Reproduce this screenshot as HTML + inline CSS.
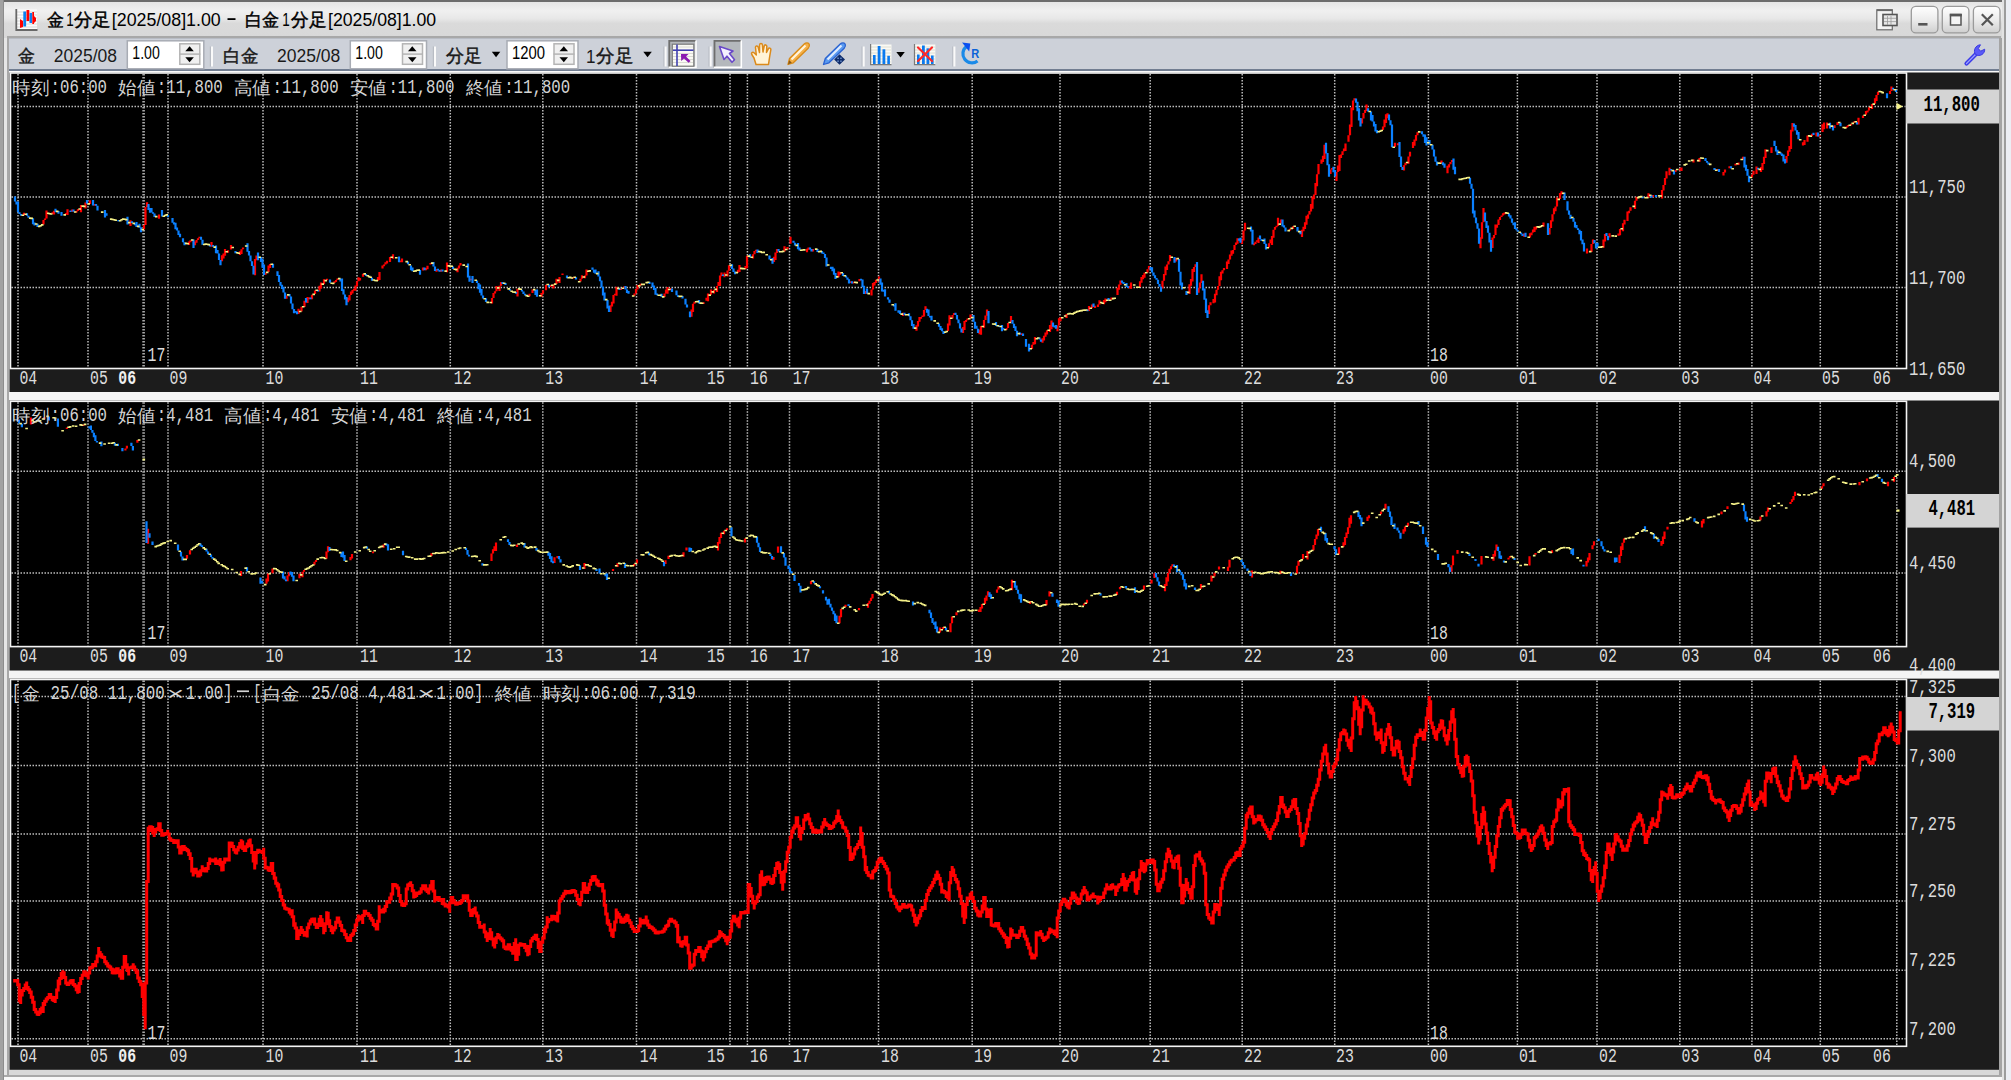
<!DOCTYPE html>
<html lang="ja"><head><meta charset="utf-8"><title>chart</title>
<style>
html,body{margin:0;padding:0;}
body{width:2011px;height:1080px;overflow:hidden;position:relative;background:#e6e6e6;font-family:"Liberation Sans",sans-serif;}
.abs{position:absolute;}
</style></head><body>
<div class="abs" style="left:0;top:0;width:2011px;height:38px;background:linear-gradient(#e2e2e2 0%,#f0f0f0 28%,#e8e8e8 48%,#dadada 62%,#d8d8d8 100%);"></div>
<div class="abs" style="left:0;top:0;width:2011px;height:1.5px;background:#6c6c6c;"></div>
<div class="abs" style="left:9px;top:38px;width:1991px;height:32px;background:#cdd1d9;border-top:1px solid #b8bcc4;box-sizing:border-box;"></div>
<div class="abs" style="left:9px;top:69px;width:1991px;height:1.6px;background:#717d91;"></div>
<div class="abs" style="left:9px;top:70.5px;width:1991px;height:3px;background:#fafafa;"></div>
<div class="abs" style="left:9px;top:392px;width:1991px;height:8.5px;background:#f4f4f4;border-bottom:1.5px solid #a4a4a4;box-sizing:border-box;"></div>
<div class="abs" style="left:9px;top:670.5px;width:1991px;height:8px;background:#f4f4f4;border-bottom:1.6px solid #a4a4a4;box-sizing:border-box;"></div>
<div class="abs" style="left:9px;top:1070px;width:1991px;height:5px;background:#d8d8d8;"></div>
<div class="abs" style="left:0;top:1075px;width:2011px;height:1.5px;background:#a8a8a8;"></div>
<div class="abs" style="left:0;top:1076.5px;width:2011px;height:4px;background:#f8f8f8;"></div>
<div class="abs" style="left:0;top:0;width:2.5px;height:1080px;background:#a2a2a2;"></div>
<div class="abs" style="left:2.5px;top:0;width:1.5px;height:1080px;background:#8c8c8c;"></div>
<div class="abs" style="left:7px;top:37px;width:1.6px;height:1038px;background:#a8a8a8;"></div>
<div class="abs" style="left:1999px;top:38px;width:2.5px;height:1037px;background:#a4a4a4;"></div>
<div class="abs" style="left:2001.5px;top:0;width:2.5px;height:1080px;background:#e2e2e2;"></div>
<div class="abs" style="left:2004px;top:0;width:2px;height:1080px;background:#9c9c9c;"></div>
<div class="abs" style="left:2006px;top:0;width:5px;height:1080px;background:#eceef4;"></div>
<div class="abs" style="left:7px;top:36.3px;width:1994px;height:1.7px;background:#a8a8a8;"></div>
<svg width="2011" height="1080" style="position:absolute;left:0;top:0">
<rect x="9.5" y="72.5" width="1989.5" height="319.5" fill="#1c1c1c"/>
<rect x="10.5" y="73.0" width="1896.0" height="295.5" fill="#000"/>
<path d="M11.5 106.5 H1905.5 M11.5 197 H1905.5 M11.5 287.5 H1905.5 M18 74.0 V367.5 M88 74.0 V367.5 M168 74.0 V367.5 M263 74.0 V367.5 M357 74.0 V367.5 M450.3 74.0 V367.5 M542.8 74.0 V367.5 M636.5 74.0 V367.5 M730 74.0 V367.5 M747.4 74.0 V367.5 M789.5 74.0 V367.5 M878.5 74.0 V367.5 M972.2 74.0 V367.5 M1060 74.0 V367.5 M1150.2 74.0 V367.5 M1242.2 74.0 V367.5 M1334.7 74.0 V367.5 M1428.4 74.0 V367.5 M1517.4 74.0 V367.5 M1597 74.0 V367.5 M1679.8 74.0 V367.5 M1751.9 74.0 V367.5 M1820.3 74.0 V367.5 M1896.8 74.0 V367.5" stroke="#bcbcbc" stroke-width="1.5" stroke-dasharray="1.5 1.5" fill="none"/>
<path d="M143.6 74.0 V367.5" stroke="#a8a8a8" stroke-width="2.6" stroke-dasharray="1.5 1.5" fill="none"/>
<rect x="10.5" y="73.0" width="1896.0" height="295.5" fill="none" stroke="#f4f4f4" stroke-width="1.6"/>
<rect x="1906" y="89.5" width="93" height="34.0" fill="#d4d4d4"/>
<text x="1923.5" y="110.7" font-size="22" textLength="56.4" lengthAdjust="spacingAndGlyphs" fill="#000" font-family="Liberation Mono" font-weight="bold">11,800</text>
<text x="1909.0" y="193.0" font-size="20.5" textLength="56.4" lengthAdjust="spacingAndGlyphs" fill="#dcdcdc" font-family="Liberation Mono">11,750</text>
<text x="1909.0" y="283.5" font-size="20.5" textLength="56.4" lengthAdjust="spacingAndGlyphs" fill="#dcdcdc" font-family="Liberation Mono">11,700</text>
<text x="1909.0" y="374.5" font-size="20.5" textLength="56.4" lengthAdjust="spacingAndGlyphs" fill="#dcdcdc" font-family="Liberation Mono">11,650</text>
<text x="19.4" y="383.8" font-size="20.5" textLength="17.8" lengthAdjust="spacingAndGlyphs" fill="#dcdcdc" font-family="Liberation Mono">04</text>
<text x="90.0" y="383.8" font-size="20.5" textLength="17.8" lengthAdjust="spacingAndGlyphs" fill="#dcdcdc" font-family="Liberation Mono">05</text>
<text x="118.3" y="383.8" font-size="20.5" textLength="17.8" lengthAdjust="spacingAndGlyphs" fill="#f0f0f0" font-family="Liberation Mono" font-weight="bold">06</text>
<text x="169.5" y="383.8" font-size="20.5" textLength="17.8" lengthAdjust="spacingAndGlyphs" fill="#dcdcdc" font-family="Liberation Mono">09</text>
<text x="265.6" y="383.8" font-size="20.5" textLength="17.8" lengthAdjust="spacingAndGlyphs" fill="#dcdcdc" font-family="Liberation Mono">10</text>
<text x="360.0" y="383.8" font-size="20.5" textLength="17.8" lengthAdjust="spacingAndGlyphs" fill="#dcdcdc" font-family="Liberation Mono">11</text>
<text x="453.8" y="383.8" font-size="20.5" textLength="17.8" lengthAdjust="spacingAndGlyphs" fill="#dcdcdc" font-family="Liberation Mono">12</text>
<text x="545.3" y="383.8" font-size="20.5" textLength="17.8" lengthAdjust="spacingAndGlyphs" fill="#dcdcdc" font-family="Liberation Mono">13</text>
<text x="639.8" y="383.8" font-size="20.5" textLength="17.8" lengthAdjust="spacingAndGlyphs" fill="#dcdcdc" font-family="Liberation Mono">14</text>
<text x="707.0" y="383.8" font-size="20.5" textLength="17.8" lengthAdjust="spacingAndGlyphs" fill="#dcdcdc" font-family="Liberation Mono">15</text>
<text x="750.0" y="383.8" font-size="20.5" textLength="17.8" lengthAdjust="spacingAndGlyphs" fill="#dcdcdc" font-family="Liberation Mono">16</text>
<text x="792.7" y="383.8" font-size="20.5" textLength="17.8" lengthAdjust="spacingAndGlyphs" fill="#dcdcdc" font-family="Liberation Mono">17</text>
<text x="881.0" y="383.8" font-size="20.5" textLength="17.8" lengthAdjust="spacingAndGlyphs" fill="#dcdcdc" font-family="Liberation Mono">18</text>
<text x="974.0" y="383.8" font-size="20.5" textLength="17.8" lengthAdjust="spacingAndGlyphs" fill="#dcdcdc" font-family="Liberation Mono">19</text>
<text x="1061.0" y="383.8" font-size="20.5" textLength="17.8" lengthAdjust="spacingAndGlyphs" fill="#dcdcdc" font-family="Liberation Mono">20</text>
<text x="1152.0" y="383.8" font-size="20.5" textLength="17.8" lengthAdjust="spacingAndGlyphs" fill="#dcdcdc" font-family="Liberation Mono">21</text>
<text x="1244.0" y="383.8" font-size="20.5" textLength="17.8" lengthAdjust="spacingAndGlyphs" fill="#dcdcdc" font-family="Liberation Mono">22</text>
<text x="1336.0" y="383.8" font-size="20.5" textLength="17.8" lengthAdjust="spacingAndGlyphs" fill="#dcdcdc" font-family="Liberation Mono">23</text>
<text x="1430.0" y="383.8" font-size="20.5" textLength="17.8" lengthAdjust="spacingAndGlyphs" fill="#dcdcdc" font-family="Liberation Mono">00</text>
<text x="1519.0" y="383.8" font-size="20.5" textLength="17.8" lengthAdjust="spacingAndGlyphs" fill="#dcdcdc" font-family="Liberation Mono">01</text>
<text x="1599.0" y="383.8" font-size="20.5" textLength="17.8" lengthAdjust="spacingAndGlyphs" fill="#dcdcdc" font-family="Liberation Mono">02</text>
<text x="1681.5" y="383.8" font-size="20.5" textLength="17.8" lengthAdjust="spacingAndGlyphs" fill="#dcdcdc" font-family="Liberation Mono">03</text>
<text x="1753.6" y="383.8" font-size="20.5" textLength="17.8" lengthAdjust="spacingAndGlyphs" fill="#dcdcdc" font-family="Liberation Mono">04</text>
<text x="1822.0" y="383.8" font-size="20.5" textLength="17.8" lengthAdjust="spacingAndGlyphs" fill="#dcdcdc" font-family="Liberation Mono">05</text>
<text x="1873.0" y="383.8" font-size="20.5" textLength="17.8" lengthAdjust="spacingAndGlyphs" fill="#dcdcdc" font-family="Liberation Mono">06</text>
<text x="147.5" y="360.5" font-size="20.5" textLength="17.8" lengthAdjust="spacingAndGlyphs" fill="#dcdcdc" font-family="Liberation Mono">17</text>
<text x="1430.0" y="360.5" font-size="20.5" textLength="17.8" lengthAdjust="spacingAndGlyphs" fill="#dcdcdc" font-family="Liberation Mono">18</text>
<rect x="9.5" y="400.8" width="1989.5" height="269.7" fill="#1c1c1c"/>
<rect x="10.5" y="401.3" width="1896.0" height="245.3" fill="#000"/>
<path d="M11.5 471.3 H1905.5 M11.5 572.9 H1905.5 M18 402.3 V645.6 M88 402.3 V645.6 M168 402.3 V645.6 M263 402.3 V645.6 M357 402.3 V645.6 M450.3 402.3 V645.6 M542.8 402.3 V645.6 M636.5 402.3 V645.6 M730 402.3 V645.6 M747.4 402.3 V645.6 M789.5 402.3 V645.6 M878.5 402.3 V645.6 M972.2 402.3 V645.6 M1060 402.3 V645.6 M1150.2 402.3 V645.6 M1242.2 402.3 V645.6 M1334.7 402.3 V645.6 M1428.4 402.3 V645.6 M1517.4 402.3 V645.6 M1597 402.3 V645.6 M1679.8 402.3 V645.6 M1751.9 402.3 V645.6 M1820.3 402.3 V645.6 M1896.8 402.3 V645.6" stroke="#bcbcbc" stroke-width="1.5" stroke-dasharray="1.5 1.5" fill="none"/>
<path d="M143.6 402.3 V645.6" stroke="#a8a8a8" stroke-width="2.6" stroke-dasharray="1.5 1.5" fill="none"/>
<rect x="10.5" y="401.3" width="1896.0" height="245.3" fill="none" stroke="#f4f4f4" stroke-width="1.6"/>
<rect x="1906" y="494" width="93" height="33.60000000000002" fill="#d4d4d4"/>
<text x="1928.4" y="515.0" font-size="22" textLength="46.8" lengthAdjust="spacingAndGlyphs" fill="#000" font-family="Liberation Mono" font-weight="bold">4,481</text>
<text x="1909.0" y="467.3" font-size="20.5" textLength="46.8" lengthAdjust="spacingAndGlyphs" fill="#dcdcdc" font-family="Liberation Mono">4,500</text>
<text x="1909.0" y="568.9" font-size="20.5" textLength="46.8" lengthAdjust="spacingAndGlyphs" fill="#dcdcdc" font-family="Liberation Mono">4,450</text>
<text x="1909.0" y="670.5" font-size="20.5" textLength="46.8" lengthAdjust="spacingAndGlyphs" fill="#dcdcdc" font-family="Liberation Mono">4,400</text>
<text x="19.4" y="661.5" font-size="20.5" textLength="17.8" lengthAdjust="spacingAndGlyphs" fill="#dcdcdc" font-family="Liberation Mono">04</text>
<text x="90.0" y="661.5" font-size="20.5" textLength="17.8" lengthAdjust="spacingAndGlyphs" fill="#dcdcdc" font-family="Liberation Mono">05</text>
<text x="118.3" y="661.5" font-size="20.5" textLength="17.8" lengthAdjust="spacingAndGlyphs" fill="#f0f0f0" font-family="Liberation Mono" font-weight="bold">06</text>
<text x="169.5" y="661.5" font-size="20.5" textLength="17.8" lengthAdjust="spacingAndGlyphs" fill="#dcdcdc" font-family="Liberation Mono">09</text>
<text x="265.6" y="661.5" font-size="20.5" textLength="17.8" lengthAdjust="spacingAndGlyphs" fill="#dcdcdc" font-family="Liberation Mono">10</text>
<text x="360.0" y="661.5" font-size="20.5" textLength="17.8" lengthAdjust="spacingAndGlyphs" fill="#dcdcdc" font-family="Liberation Mono">11</text>
<text x="453.8" y="661.5" font-size="20.5" textLength="17.8" lengthAdjust="spacingAndGlyphs" fill="#dcdcdc" font-family="Liberation Mono">12</text>
<text x="545.3" y="661.5" font-size="20.5" textLength="17.8" lengthAdjust="spacingAndGlyphs" fill="#dcdcdc" font-family="Liberation Mono">13</text>
<text x="639.8" y="661.5" font-size="20.5" textLength="17.8" lengthAdjust="spacingAndGlyphs" fill="#dcdcdc" font-family="Liberation Mono">14</text>
<text x="707.0" y="661.5" font-size="20.5" textLength="17.8" lengthAdjust="spacingAndGlyphs" fill="#dcdcdc" font-family="Liberation Mono">15</text>
<text x="750.0" y="661.5" font-size="20.5" textLength="17.8" lengthAdjust="spacingAndGlyphs" fill="#dcdcdc" font-family="Liberation Mono">16</text>
<text x="792.7" y="661.5" font-size="20.5" textLength="17.8" lengthAdjust="spacingAndGlyphs" fill="#dcdcdc" font-family="Liberation Mono">17</text>
<text x="881.0" y="661.5" font-size="20.5" textLength="17.8" lengthAdjust="spacingAndGlyphs" fill="#dcdcdc" font-family="Liberation Mono">18</text>
<text x="974.0" y="661.5" font-size="20.5" textLength="17.8" lengthAdjust="spacingAndGlyphs" fill="#dcdcdc" font-family="Liberation Mono">19</text>
<text x="1061.0" y="661.5" font-size="20.5" textLength="17.8" lengthAdjust="spacingAndGlyphs" fill="#dcdcdc" font-family="Liberation Mono">20</text>
<text x="1152.0" y="661.5" font-size="20.5" textLength="17.8" lengthAdjust="spacingAndGlyphs" fill="#dcdcdc" font-family="Liberation Mono">21</text>
<text x="1244.0" y="661.5" font-size="20.5" textLength="17.8" lengthAdjust="spacingAndGlyphs" fill="#dcdcdc" font-family="Liberation Mono">22</text>
<text x="1336.0" y="661.5" font-size="20.5" textLength="17.8" lengthAdjust="spacingAndGlyphs" fill="#dcdcdc" font-family="Liberation Mono">23</text>
<text x="1430.0" y="661.5" font-size="20.5" textLength="17.8" lengthAdjust="spacingAndGlyphs" fill="#dcdcdc" font-family="Liberation Mono">00</text>
<text x="1519.0" y="661.5" font-size="20.5" textLength="17.8" lengthAdjust="spacingAndGlyphs" fill="#dcdcdc" font-family="Liberation Mono">01</text>
<text x="1599.0" y="661.5" font-size="20.5" textLength="17.8" lengthAdjust="spacingAndGlyphs" fill="#dcdcdc" font-family="Liberation Mono">02</text>
<text x="1681.5" y="661.5" font-size="20.5" textLength="17.8" lengthAdjust="spacingAndGlyphs" fill="#dcdcdc" font-family="Liberation Mono">03</text>
<text x="1753.6" y="661.5" font-size="20.5" textLength="17.8" lengthAdjust="spacingAndGlyphs" fill="#dcdcdc" font-family="Liberation Mono">04</text>
<text x="1822.0" y="661.5" font-size="20.5" textLength="17.8" lengthAdjust="spacingAndGlyphs" fill="#dcdcdc" font-family="Liberation Mono">05</text>
<text x="1873.0" y="661.5" font-size="20.5" textLength="17.8" lengthAdjust="spacingAndGlyphs" fill="#dcdcdc" font-family="Liberation Mono">06</text>
<text x="147.5" y="638.5" font-size="20.5" textLength="17.8" lengthAdjust="spacingAndGlyphs" fill="#dcdcdc" font-family="Liberation Mono">17</text>
<text x="1430.0" y="638.5" font-size="20.5" textLength="17.8" lengthAdjust="spacingAndGlyphs" fill="#dcdcdc" font-family="Liberation Mono">18</text>
<rect x="9.5" y="679.0" width="1989.5" height="390.79999999999995" fill="#1c1c1c"/>
<rect x="10.5" y="679.5" width="1896.0" height="366.79999999999995" fill="#000"/>
<path d="M11.5 696.5 H1905.5 M11.5 765.6 H1905.5 M11.5 834 H1905.5 M11.5 900.9 H1905.5 M11.5 970.2 H1905.5 M11.5 1038.7 H1905.5 M18 680.5 V1045.3 M88 680.5 V1045.3 M168 680.5 V1045.3 M263 680.5 V1045.3 M357 680.5 V1045.3 M450.3 680.5 V1045.3 M542.8 680.5 V1045.3 M636.5 680.5 V1045.3 M730 680.5 V1045.3 M747.4 680.5 V1045.3 M789.5 680.5 V1045.3 M878.5 680.5 V1045.3 M972.2 680.5 V1045.3 M1060 680.5 V1045.3 M1150.2 680.5 V1045.3 M1242.2 680.5 V1045.3 M1334.7 680.5 V1045.3 M1428.4 680.5 V1045.3 M1517.4 680.5 V1045.3 M1597 680.5 V1045.3 M1679.8 680.5 V1045.3 M1751.9 680.5 V1045.3 M1820.3 680.5 V1045.3 M1896.8 680.5 V1045.3" stroke="#bcbcbc" stroke-width="1.5" stroke-dasharray="1.5 1.5" fill="none"/>
<path d="M143.6 680.5 V1045.3" stroke="#a8a8a8" stroke-width="2.6" stroke-dasharray="1.5 1.5" fill="none"/>
<rect x="10.5" y="679.5" width="1896.0" height="366.79999999999995" fill="none" stroke="#f4f4f4" stroke-width="1.6"/>
<rect x="1906" y="697" width="93" height="33.5" fill="#d4d4d4"/>
<text x="1928.4" y="718.0" font-size="22" textLength="46.8" lengthAdjust="spacingAndGlyphs" fill="#000" font-family="Liberation Mono" font-weight="bold">7,319</text>
<text x="1909.0" y="693.0" font-size="20.5" textLength="46.8" lengthAdjust="spacingAndGlyphs" fill="#dcdcdc" font-family="Liberation Mono">7,325</text>
<text x="1909.0" y="761.6" font-size="20.5" textLength="46.8" lengthAdjust="spacingAndGlyphs" fill="#dcdcdc" font-family="Liberation Mono">7,300</text>
<text x="1909.0" y="830.0" font-size="20.5" textLength="46.8" lengthAdjust="spacingAndGlyphs" fill="#dcdcdc" font-family="Liberation Mono">7,275</text>
<text x="1909.0" y="896.9" font-size="20.5" textLength="46.8" lengthAdjust="spacingAndGlyphs" fill="#dcdcdc" font-family="Liberation Mono">7,250</text>
<text x="1909.0" y="966.2" font-size="20.5" textLength="46.8" lengthAdjust="spacingAndGlyphs" fill="#dcdcdc" font-family="Liberation Mono">7,225</text>
<text x="1909.0" y="1034.7" font-size="20.5" textLength="46.8" lengthAdjust="spacingAndGlyphs" fill="#dcdcdc" font-family="Liberation Mono">7,200</text>
<text x="19.4" y="1061.5" font-size="20.5" textLength="17.8" lengthAdjust="spacingAndGlyphs" fill="#dcdcdc" font-family="Liberation Mono">04</text>
<text x="90.0" y="1061.5" font-size="20.5" textLength="17.8" lengthAdjust="spacingAndGlyphs" fill="#dcdcdc" font-family="Liberation Mono">05</text>
<text x="118.3" y="1061.5" font-size="20.5" textLength="17.8" lengthAdjust="spacingAndGlyphs" fill="#f0f0f0" font-family="Liberation Mono" font-weight="bold">06</text>
<text x="169.5" y="1061.5" font-size="20.5" textLength="17.8" lengthAdjust="spacingAndGlyphs" fill="#dcdcdc" font-family="Liberation Mono">09</text>
<text x="265.6" y="1061.5" font-size="20.5" textLength="17.8" lengthAdjust="spacingAndGlyphs" fill="#dcdcdc" font-family="Liberation Mono">10</text>
<text x="360.0" y="1061.5" font-size="20.5" textLength="17.8" lengthAdjust="spacingAndGlyphs" fill="#dcdcdc" font-family="Liberation Mono">11</text>
<text x="453.8" y="1061.5" font-size="20.5" textLength="17.8" lengthAdjust="spacingAndGlyphs" fill="#dcdcdc" font-family="Liberation Mono">12</text>
<text x="545.3" y="1061.5" font-size="20.5" textLength="17.8" lengthAdjust="spacingAndGlyphs" fill="#dcdcdc" font-family="Liberation Mono">13</text>
<text x="639.8" y="1061.5" font-size="20.5" textLength="17.8" lengthAdjust="spacingAndGlyphs" fill="#dcdcdc" font-family="Liberation Mono">14</text>
<text x="707.0" y="1061.5" font-size="20.5" textLength="17.8" lengthAdjust="spacingAndGlyphs" fill="#dcdcdc" font-family="Liberation Mono">15</text>
<text x="750.0" y="1061.5" font-size="20.5" textLength="17.8" lengthAdjust="spacingAndGlyphs" fill="#dcdcdc" font-family="Liberation Mono">16</text>
<text x="792.7" y="1061.5" font-size="20.5" textLength="17.8" lengthAdjust="spacingAndGlyphs" fill="#dcdcdc" font-family="Liberation Mono">17</text>
<text x="881.0" y="1061.5" font-size="20.5" textLength="17.8" lengthAdjust="spacingAndGlyphs" fill="#dcdcdc" font-family="Liberation Mono">18</text>
<text x="974.0" y="1061.5" font-size="20.5" textLength="17.8" lengthAdjust="spacingAndGlyphs" fill="#dcdcdc" font-family="Liberation Mono">19</text>
<text x="1061.0" y="1061.5" font-size="20.5" textLength="17.8" lengthAdjust="spacingAndGlyphs" fill="#dcdcdc" font-family="Liberation Mono">20</text>
<text x="1152.0" y="1061.5" font-size="20.5" textLength="17.8" lengthAdjust="spacingAndGlyphs" fill="#dcdcdc" font-family="Liberation Mono">21</text>
<text x="1244.0" y="1061.5" font-size="20.5" textLength="17.8" lengthAdjust="spacingAndGlyphs" fill="#dcdcdc" font-family="Liberation Mono">22</text>
<text x="1336.0" y="1061.5" font-size="20.5" textLength="17.8" lengthAdjust="spacingAndGlyphs" fill="#dcdcdc" font-family="Liberation Mono">23</text>
<text x="1430.0" y="1061.5" font-size="20.5" textLength="17.8" lengthAdjust="spacingAndGlyphs" fill="#dcdcdc" font-family="Liberation Mono">00</text>
<text x="1519.0" y="1061.5" font-size="20.5" textLength="17.8" lengthAdjust="spacingAndGlyphs" fill="#dcdcdc" font-family="Liberation Mono">01</text>
<text x="1599.0" y="1061.5" font-size="20.5" textLength="17.8" lengthAdjust="spacingAndGlyphs" fill="#dcdcdc" font-family="Liberation Mono">02</text>
<text x="1681.5" y="1061.5" font-size="20.5" textLength="17.8" lengthAdjust="spacingAndGlyphs" fill="#dcdcdc" font-family="Liberation Mono">03</text>
<text x="1753.6" y="1061.5" font-size="20.5" textLength="17.8" lengthAdjust="spacingAndGlyphs" fill="#dcdcdc" font-family="Liberation Mono">04</text>
<text x="1822.0" y="1061.5" font-size="20.5" textLength="17.8" lengthAdjust="spacingAndGlyphs" fill="#dcdcdc" font-family="Liberation Mono">05</text>
<text x="1873.0" y="1061.5" font-size="20.5" textLength="17.8" lengthAdjust="spacingAndGlyphs" fill="#dcdcdc" font-family="Liberation Mono">06</text>
<text x="147.5" y="1038.5" font-size="20.5" textLength="17.8" lengthAdjust="spacingAndGlyphs" fill="#dcdcdc" font-family="Liberation Mono">17</text>
<text x="1430.0" y="1038.5" font-size="20.5" textLength="17.8" lengthAdjust="spacingAndGlyphs" fill="#dcdcdc" font-family="Liberation Mono">18</text>
<path fill="#ff0000" d="M22.9 212.7h2.2V215.4h-2.2zM42.4 220.0h2.2V224.5h-2.2zM43.9 218.4h2.2V220.0h-2.2zM45.4 210.4h2.2V218.4h-2.2zM51.4 212.2h2.2V213.9h-2.2zM52.9 210.8h2.2V214.6h-2.2zM64.9 213.0h2.2V214.6h-2.2zM66.4 209.2h2.2V214.9h-2.2zM70.9 209.5h2.2V211.8h-2.2zM75.4 210.8h2.2V212.4h-2.2zM76.9 209.0h2.2V210.9h-2.2zM79.9 205.1h2.2V212.2h-2.2zM84.4 202.4h2.2V208.5h-2.2zM88.9 200.2h2.2V204.1h-2.2zM93.4 204.1h2.2V205.7h-2.2zM129.4 220.3h2.2V226.0h-2.2zM142.9 225.1h2.2V229.4h-2.2zM144.4 207.0h2.2V225.1h-2.2zM145.9 202.3h2.2V207.0h-2.2zM157.9 214.6h2.2V218.7h-2.2zM187.9 241.6h2.2V245.1h-2.2zM189.4 240.3h2.2V242.2h-2.2zM193.9 241.4h2.2V245.3h-2.2zM195.4 240.1h2.2V242.7h-2.2zM196.9 238.2h2.2V240.1h-2.2zM198.4 236.7h2.2V238.3h-2.2zM210.4 242.1h2.2V246.8h-2.2zM220.9 255.3h2.2V261.3h-2.2zM222.4 253.4h2.2V258.4h-2.2zM223.9 249.0h2.2V255.8h-2.2zM226.9 250.2h2.2V252.7h-2.2zM229.9 245.0h2.2V249.6h-2.2zM238.9 251.3h2.2V254.9h-2.2zM240.4 249.3h2.2V254.1h-2.2zM241.9 247.5h2.2V249.3h-2.2zM253.9 259.0h2.2V275.3h-2.2zM255.4 255.5h2.2V260.3h-2.2zM264.4 272.7h2.2V274.7h-2.2zM267.4 265.5h2.2V272.0h-2.2zM268.9 264.1h2.2V268.0h-2.2zM285.4 295.4h2.2V298.7h-2.2zM297.4 308.7h2.2V314.0h-2.2zM300.4 306.7h2.2V311.5h-2.2zM303.4 300.8h2.2V307.0h-2.2zM306.4 297.0h2.2V303.0h-2.2zM307.9 297.5h2.2V299.2h-2.2zM310.9 294.8h2.2V299.3h-2.2zM313.9 290.4h2.2V293.9h-2.2zM318.4 285.8h2.2V291.4h-2.2zM319.9 282.5h2.2V288.4h-2.2zM322.9 279.3h2.2V284.3h-2.2zM325.9 278.7h2.2V280.3h-2.2zM333.4 281.2h2.2V283.1h-2.2zM334.9 280.1h2.2V282.0h-2.2zM336.4 278.5h2.2V280.1h-2.2zM346.9 297.8h2.2V302.3h-2.2zM348.4 295.0h2.2V300.5h-2.2zM349.9 291.6h2.2V295.0h-2.2zM351.4 290.0h2.2V293.4h-2.2zM352.9 288.8h2.2V290.7h-2.2zM354.4 285.4h2.2V290.7h-2.2zM355.9 281.3h2.2V286.5h-2.2zM357.4 277.3h2.2V281.3h-2.2zM358.9 277.9h2.2V280.5h-2.2zM361.9 273.8h2.2V276.7h-2.2zM376.9 277.1h2.2V280.7h-2.2zM378.4 272.0h2.2V280.0h-2.2zM381.4 265.6h2.2V268.4h-2.2zM382.9 264.6h2.2V266.3h-2.2zM384.4 262.3h2.2V264.6h-2.2zM385.9 260.7h2.2V263.5h-2.2zM388.9 257.1h2.2V262.1h-2.2zM391.9 254.2h2.2V258.7h-2.2zM399.4 260.6h2.2V262.3h-2.2zM400.9 258.6h2.2V262.3h-2.2zM421.9 267.6h2.2V270.5h-2.2zM424.9 268.0h2.2V270.2h-2.2zM426.4 265.7h2.2V269.2h-2.2zM429.4 262.9h2.2V264.5h-2.2zM435.4 269.0h2.2V271.8h-2.2zM439.9 269.6h2.2V271.7h-2.2zM445.9 262.5h2.2V272.3h-2.2zM456.4 267.8h2.2V272.3h-2.2zM457.9 265.5h2.2V268.6h-2.2zM459.4 263.0h2.2V265.5h-2.2zM469.9 278.7h2.2V280.3h-2.2zM490.9 298.0h2.2V303.4h-2.2zM492.4 293.1h2.2V298.0h-2.2zM493.9 291.2h2.2V293.6h-2.2zM495.4 286.0h2.2V291.2h-2.2zM498.4 285.8h2.2V291.1h-2.2zM499.9 282.1h2.2V285.8h-2.2zM516.4 288.8h2.2V296.6h-2.2zM528.4 293.8h2.2V296.3h-2.2zM531.4 289.4h2.2V293.0h-2.2zM540.4 293.1h2.2V296.8h-2.2zM541.9 290.2h2.2V293.7h-2.2zM544.9 284.7h2.2V290.3h-2.2zM549.4 285.1h2.2V287.1h-2.2zM552.4 284.3h2.2V288.5h-2.2zM555.4 278.8h2.2V283.9h-2.2zM558.4 276.9h2.2V283.0h-2.2zM561.4 273.4h2.2V275.0h-2.2zM571.9 276.9h2.2V278.5h-2.2zM579.4 278.8h2.2V281.6h-2.2zM580.9 275.2h2.2V278.8h-2.2zM583.9 275.6h2.2V278.2h-2.2zM585.4 269.5h2.2V275.6h-2.2zM609.4 305.2h2.2V312.1h-2.2zM610.9 301.7h2.2V306.5h-2.2zM612.4 294.9h2.2V303.5h-2.2zM613.9 293.7h2.2V295.3h-2.2zM615.4 286.8h2.2V295.8h-2.2zM619.9 288.4h2.2V290.0h-2.2zM622.9 286.4h2.2V288.5h-2.2zM633.4 293.4h2.2V295.7h-2.2zM634.9 288.9h2.2V293.4h-2.2zM636.4 285.0h2.2V289.5h-2.2zM639.4 283.8h2.2V285.4h-2.2zM663.4 293.6h2.2V297.0h-2.2zM664.9 289.6h2.2V293.6h-2.2zM666.4 287.1h2.2V293.7h-2.2zM669.4 288.1h2.2V290.0h-2.2zM690.4 309.6h2.2V316.7h-2.2zM691.9 303.8h2.2V312.1h-2.2zM693.4 301.8h2.2V303.8h-2.2zM702.4 302.3h2.2V303.9h-2.2zM705.4 297.8h2.2V300.8h-2.2zM706.9 293.6h2.2V301.2h-2.2zM709.9 289.4h2.2V294.7h-2.2zM712.9 289.7h2.2V293.5h-2.2zM715.9 285.9h2.2V292.1h-2.2zM717.4 282.0h2.2V285.9h-2.2zM718.9 275.6h2.2V286.1h-2.2zM720.4 272.5h2.2V276.3h-2.2zM723.4 272.5h2.2V277.3h-2.2zM726.4 270.5h2.2V276.6h-2.2zM727.9 265.2h2.2V270.5h-2.2zM736.9 269.7h2.2V272.8h-2.2zM738.4 265.0h2.2V271.9h-2.2zM744.4 266.1h2.2V269.3h-2.2zM745.9 255.8h2.2V268.3h-2.2zM751.9 254.2h2.2V258.6h-2.2zM753.4 251.1h2.2V254.2h-2.2zM754.9 249.7h2.2V251.3h-2.2zM772.9 256.8h2.2V261.9h-2.2zM774.4 252.4h2.2V259.9h-2.2zM775.9 249.1h2.2V253.0h-2.2zM783.4 246.3h2.2V251.5h-2.2zM786.4 247.0h2.2V249.5h-2.2zM789.4 236.8h2.2V243.8h-2.2zM805.9 248.8h2.2V252.3h-2.2zM807.4 247.6h2.2V249.8h-2.2zM811.9 249.0h2.2V251.5h-2.2zM837.4 271.6h2.2V277.2h-2.2zM838.9 272.1h2.2V274.7h-2.2zM849.4 281.3h2.2V283.0h-2.2zM852.4 281.8h2.2V283.4h-2.2zM858.4 279.0h2.2V281.2h-2.2zM864.4 291.1h2.2V294.0h-2.2zM870.4 289.4h2.2V295.6h-2.2zM871.9 283.1h2.2V289.4h-2.2zM873.4 281.9h2.2V285.4h-2.2zM874.9 279.8h2.2V282.9h-2.2zM877.9 276.4h2.2V281.4h-2.2zM901.9 312.8h2.2V316.1h-2.2zM915.4 325.3h2.2V330.7h-2.2zM916.9 321.1h2.2V326.6h-2.2zM918.4 317.1h2.2V321.8h-2.2zM919.9 317.1h2.2V318.8h-2.2zM921.4 315.5h2.2V317.1h-2.2zM922.9 310.1h2.2V316.6h-2.2zM924.4 306.2h2.2V310.1h-2.2zM946.9 323.5h2.2V331.0h-2.2zM948.4 315.2h2.2V325.4h-2.2zM951.4 315.0h2.2V318.4h-2.2zM952.9 313.1h2.2V315.0h-2.2zM961.9 326.9h2.2V333.1h-2.2zM963.4 321.1h2.2V329.9h-2.2zM964.9 320.1h2.2V322.1h-2.2zM966.4 318.6h2.2V320.2h-2.2zM969.4 314.4h2.2V318.6h-2.2zM978.4 329.4h2.2V334.3h-2.2zM979.9 326.0h2.2V334.7h-2.2zM982.9 320.0h2.2V327.7h-2.2zM984.4 315.4h2.2V320.0h-2.2zM985.9 309.6h2.2V315.7h-2.2zM1005.4 328.1h2.2V329.8h-2.2zM1006.9 322.9h2.2V328.1h-2.2zM1009.9 316.1h2.2V322.5h-2.2zM1020.4 333.3h2.2V334.9h-2.2zM1030.9 344.7h2.2V349.0h-2.2zM1032.4 342.1h2.2V344.7h-2.2zM1033.9 337.0h2.2V344.2h-2.2zM1041.4 338.3h2.2V342.7h-2.2zM1042.9 335.8h2.2V340.4h-2.2zM1044.4 332.5h2.2V336.7h-2.2zM1045.9 330.3h2.2V334.5h-2.2zM1048.9 325.0h2.2V332.1h-2.2zM1050.4 320.6h2.2V329.2h-2.2zM1056.4 325.4h2.2V331.3h-2.2zM1057.9 318.2h2.2V325.4h-2.2zM1059.4 316.9h2.2V321.3h-2.2zM1065.4 314.1h2.2V317.9h-2.2zM1087.9 305.9h2.2V311.0h-2.2zM1090.9 304.4h2.2V308.2h-2.2zM1093.9 305.7h2.2V308.0h-2.2zM1096.9 304.4h2.2V306.9h-2.2zM1098.4 300.2h2.2V304.4h-2.2zM1102.9 300.1h2.2V304.2h-2.2zM1104.4 298.5h2.2V302.3h-2.2zM1110.4 297.4h2.2V299.7h-2.2zM1116.4 287.7h2.2V295.1h-2.2zM1117.9 284.4h2.2V289.8h-2.2zM1119.4 280.6h2.2V284.7h-2.2zM1128.4 286.1h2.2V288.4h-2.2zM1129.9 282.4h2.2V288.8h-2.2zM1138.9 281.2h2.2V287.0h-2.2zM1140.4 277.1h2.2V282.8h-2.2zM1141.9 275.1h2.2V279.2h-2.2zM1143.4 272.7h2.2V277.8h-2.2zM1146.4 269.2h2.2V272.7h-2.2zM1147.9 266.1h2.2V269.3h-2.2zM1161.4 280.8h2.2V288.5h-2.2zM1162.9 274.1h2.2V280.8h-2.2zM1164.4 266.4h2.2V275.2h-2.2zM1165.9 264.4h2.2V270.1h-2.2zM1167.4 261.2h2.2V264.5h-2.2zM1168.9 255.0h2.2V261.2h-2.2zM1174.9 258.0h2.2V261.6h-2.2zM1188.4 284.3h2.2V293.9h-2.2zM1189.9 278.9h2.2V285.7h-2.2zM1191.4 269.0h2.2V281.4h-2.2zM1192.9 267.1h2.2V272.1h-2.2zM1194.4 264.3h2.2V267.1h-2.2zM1197.4 287.8h2.2V292.8h-2.2zM1198.9 282.6h2.2V287.8h-2.2zM1200.4 274.3h2.2V282.9h-2.2zM1207.9 305.2h2.2V314.1h-2.2zM1209.4 302.2h2.2V305.2h-2.2zM1212.4 299.0h2.2V303.2h-2.2zM1213.9 293.8h2.2V302.4h-2.2zM1215.4 289.8h2.2V295.3h-2.2zM1216.9 285.9h2.2V289.8h-2.2zM1218.4 276.3h2.2V285.9h-2.2zM1219.9 271.8h2.2V280.3h-2.2zM1221.4 270.3h2.2V273.6h-2.2zM1222.9 267.9h2.2V270.3h-2.2zM1225.9 261.4h2.2V269.0h-2.2zM1227.4 259.5h2.2V263.9h-2.2zM1228.9 254.4h2.2V259.5h-2.2zM1230.4 250.4h2.2V255.8h-2.2zM1231.9 250.1h2.2V253.7h-2.2zM1233.4 245.1h2.2V250.1h-2.2zM1234.9 242.4h2.2V245.1h-2.2zM1236.4 238.3h2.2V243.8h-2.2zM1240.9 239.6h2.2V243.9h-2.2zM1242.4 230.4h2.2V240.5h-2.2zM1243.9 222.8h2.2V230.4h-2.2zM1252.9 243.3h2.2V245.3h-2.2zM1254.4 241.8h2.2V244.0h-2.2zM1255.9 240.2h2.2V241.8h-2.2zM1257.4 237.4h2.2V242.9h-2.2zM1267.9 243.3h2.2V247.6h-2.2zM1269.4 239.4h2.2V243.3h-2.2zM1270.9 236.0h2.2V245.0h-2.2zM1272.4 229.8h2.2V237.8h-2.2zM1273.9 227.0h2.2V229.8h-2.2zM1275.4 225.7h2.2V227.3h-2.2zM1276.9 217.7h2.2V226.0h-2.2zM1279.9 219.4h2.2V223.6h-2.2zM1288.9 228.8h2.2V230.4h-2.2zM1291.9 226.3h2.2V228.9h-2.2zM1300.9 229.8h2.2V236.9h-2.2zM1302.4 226.7h2.2V231.3h-2.2zM1303.9 222.2h2.2V229.0h-2.2zM1305.4 215.7h2.2V224.7h-2.2zM1306.9 214.6h2.2V218.8h-2.2zM1308.4 210.9h2.2V214.6h-2.2zM1309.9 203.9h2.2V211.4h-2.2zM1311.4 196.6h2.2V208.8h-2.2zM1312.9 194.6h2.2V199.2h-2.2zM1314.4 183.0h2.2V194.9h-2.2zM1315.9 174.3h2.2V186.2h-2.2zM1317.4 164.1h2.2V174.3h-2.2zM1320.4 159.5h2.2V163.7h-2.2zM1321.9 155.8h2.2V161.9h-2.2zM1323.4 144.7h2.2V159.0h-2.2zM1329.4 169.6h2.2V174.0h-2.2zM1330.9 168.0h2.2V169.6h-2.2zM1335.4 172.0h2.2V180.9h-2.2zM1336.9 165.5h2.2V172.0h-2.2zM1338.4 154.9h2.2V171.0h-2.2zM1339.9 154.4h2.2V158.0h-2.2zM1341.4 151.3h2.2V155.1h-2.2zM1342.9 148.4h2.2V151.3h-2.2zM1344.4 143.4h2.2V151.0h-2.2zM1347.4 135.2h2.2V141.7h-2.2zM1348.9 124.4h2.2V135.2h-2.2zM1350.4 107.4h2.2V127.1h-2.2zM1351.9 100.6h2.2V110.3h-2.2zM1353.4 98.3h2.2V100.6h-2.2zM1360.9 118.5h2.2V123.4h-2.2zM1362.4 113.0h2.2V118.5h-2.2zM1363.9 109.9h2.2V113.0h-2.2zM1365.4 104.4h2.2V111.1h-2.2zM1381.9 126.4h2.2V130.0h-2.2zM1383.4 119.6h2.2V127.2h-2.2zM1384.9 114.3h2.2V122.9h-2.2zM1386.4 113.3h2.2V118.3h-2.2zM1393.9 142.7h2.2V147.1h-2.2zM1396.9 143.2h2.2V145.2h-2.2zM1402.9 165.2h2.2V170.5h-2.2zM1404.4 162.7h2.2V165.2h-2.2zM1407.4 156.4h2.2V163.7h-2.2zM1408.9 151.7h2.2V156.4h-2.2zM1411.9 142.1h2.2V148.0h-2.2zM1413.4 139.6h2.2V145.7h-2.2zM1414.9 135.1h2.2V140.8h-2.2zM1416.4 132.2h2.2V135.3h-2.2zM1440.4 160.4h2.2V163.3h-2.2zM1446.4 165.7h2.2V173.3h-2.2zM1447.9 164.3h2.2V167.6h-2.2zM1449.4 162.0h2.2V164.3h-2.2zM1450.9 160.0h2.2V162.0h-2.2zM1479.4 237.2h2.2V248.3h-2.2zM1480.9 222.2h2.2V238.7h-2.2zM1482.4 207.9h2.2V222.2h-2.2zM1491.4 237.5h2.2V248.0h-2.2zM1492.9 235.0h2.2V238.3h-2.2zM1494.4 224.6h2.2V235.1h-2.2zM1495.9 224.5h2.2V227.8h-2.2zM1497.4 219.5h2.2V225.0h-2.2zM1498.9 217.0h2.2V220.1h-2.2zM1500.4 215.5h2.2V217.1h-2.2zM1501.9 213.3h2.2V215.6h-2.2zM1503.4 212.6h2.2V214.4h-2.2zM1522.9 233.6h2.2V236.8h-2.2zM1528.9 233.2h2.2V237.6h-2.2zM1530.4 232.6h2.2V235.3h-2.2zM1531.9 229.6h2.2V232.6h-2.2zM1533.4 226.8h2.2V232.0h-2.2zM1534.9 226.5h2.2V229.4h-2.2zM1542.4 222.5h2.2V226.7h-2.2zM1548.4 228.1h2.2V234.5h-2.2zM1549.9 220.3h2.2V228.1h-2.2zM1551.4 214.2h2.2V221.6h-2.2zM1552.9 208.3h2.2V214.2h-2.2zM1554.4 206.4h2.2V211.3h-2.2zM1555.9 197.6h2.2V206.4h-2.2zM1558.9 193.0h2.2V198.9h-2.2zM1560.4 191.2h2.2V194.6h-2.2zM1585.9 248.6h2.2V253.5h-2.2zM1590.4 244.1h2.2V251.9h-2.2zM1591.9 239.6h2.2V244.1h-2.2zM1602.4 239.5h2.2V247.8h-2.2zM1603.9 233.9h2.2V241.5h-2.2zM1608.4 233.3h2.2V237.4h-2.2zM1617.4 233.5h2.2V235.8h-2.2zM1618.9 229.1h2.2V235.3h-2.2zM1621.9 223.3h2.2V231.2h-2.2zM1623.4 219.7h2.2V224.5h-2.2zM1626.4 211.4h2.2V221.0h-2.2zM1627.9 210.7h2.2V213.3h-2.2zM1629.4 207.3h2.2V210.7h-2.2zM1633.9 200.8h2.2V208.9h-2.2zM1635.4 196.7h2.2V200.8h-2.2zM1647.4 193.3h2.2V197.8h-2.2zM1651.9 195.0h2.2V197.2h-2.2zM1660.9 189.9h2.2V198.5h-2.2zM1662.4 185.1h2.2V190.6h-2.2zM1663.9 178.1h2.2V185.1h-2.2zM1665.4 171.3h2.2V178.5h-2.2zM1668.4 167.8h2.2V175.3h-2.2zM1674.4 169.9h2.2V172.1h-2.2zM1678.9 168.6h2.2V170.6h-2.2zM1680.4 167.5h2.2V170.9h-2.2zM1692.4 159.4h2.2V162.4h-2.2zM1698.4 158.1h2.2V161.7h-2.2zM1716.4 169.0h2.2V170.6h-2.2zM1722.4 172.1h2.2V175.5h-2.2zM1723.9 169.6h2.2V172.6h-2.2zM1728.4 166.3h2.2V168.2h-2.2zM1734.4 163.7h2.2V165.4h-2.2zM1737.4 162.4h2.2V164.9h-2.2zM1741.9 156.7h2.2V160.1h-2.2zM1750.9 174.5h2.2V177.5h-2.2zM1752.4 170.7h2.2V174.7h-2.2zM1755.4 166.5h2.2V174.0h-2.2zM1759.9 167.0h2.2V172.0h-2.2zM1761.4 163.0h2.2V170.0h-2.2zM1762.9 156.8h2.2V164.0h-2.2zM1764.4 149.3h2.2V158.0h-2.2zM1770.4 147.2h2.2V153.1h-2.2zM1785.4 155.9h2.2V162.7h-2.2zM1786.9 150.4h2.2V155.9h-2.2zM1788.4 146.1h2.2V151.8h-2.2zM1789.9 129.7h2.2V148.9h-2.2zM1791.4 123.0h2.2V131.6h-2.2zM1801.9 142.3h2.2V145.5h-2.2zM1803.4 140.1h2.2V145.0h-2.2zM1806.4 135.5h2.2V141.8h-2.2zM1810.9 133.7h2.2V136.2h-2.2zM1815.4 132.5h2.2V136.4h-2.2zM1818.4 135.1h2.2V136.7h-2.2zM1821.4 124.3h2.2V132.1h-2.2zM1822.9 122.5h2.2V129.2h-2.2zM1825.9 122.6h2.2V128.4h-2.2zM1833.4 125.2h2.2V128.1h-2.2zM1836.4 122.3h2.2V124.9h-2.2zM1845.4 126.3h2.2V127.9h-2.2zM1846.9 124.9h2.2V126.8h-2.2zM1849.9 123.8h2.2V125.4h-2.2zM1852.9 121.4h2.2V123.0h-2.2zM1857.4 117.7h2.2V124.4h-2.2zM1861.9 115.6h2.2V118.1h-2.2zM1864.9 110.9h2.2V114.8h-2.2zM1866.4 110.6h2.2V112.5h-2.2zM1867.9 107.3h2.2V110.6h-2.2zM1870.9 104.0h2.2V109.0h-2.2zM1873.9 98.2h2.2V103.7h-2.2zM1875.4 95.0h2.2V100.9h-2.2zM1876.9 91.8h2.2V95.0h-2.2zM1888.9 91.0h2.2V93.9h-2.2zM1890.4 86.4h2.2V91.0h-2.2z"/><path fill="#0a80ff" d="M13.9 196.4h2.2V201.6h-2.2zM15.4 201.6h2.2V204.5h-2.2zM16.9 201.6h2.2V212.2h-2.2zM18.4 212.2h2.2V214.0h-2.2zM19.9 213.9h2.2V215.8h-2.2zM25.9 213.3h2.2V215.7h-2.2zM27.4 215.7h2.2V217.8h-2.2zM31.9 218.3h2.2V224.2h-2.2zM33.4 222.4h2.2V225.5h-2.2zM36.4 223.8h2.2V226.9h-2.2zM54.4 208.8h2.2V212.2h-2.2zM57.4 210.9h2.2V213.7h-2.2zM60.4 212.1h2.2V215.8h-2.2zM69.4 210.4h2.2V212.0h-2.2zM72.4 209.4h2.2V211.7h-2.2zM85.9 200.0h2.2V203.8h-2.2zM91.9 200.1h2.2V205.4h-2.2zM94.9 204.1h2.2V205.7h-2.2zM96.4 205.7h2.2V210.5h-2.2zM103.9 209.9h2.2V217.4h-2.2zM105.4 213.2h2.2V215.8h-2.2zM117.4 219.9h2.2V221.5h-2.2zM126.4 216.7h2.2V224.6h-2.2zM130.9 221.3h2.2V223.0h-2.2zM133.9 223.6h2.2V225.2h-2.2zM135.4 222.0h2.2V226.9h-2.2zM138.4 223.8h2.2V227.7h-2.2zM139.9 227.3h2.2V232.2h-2.2zM147.4 204.1h2.2V210.1h-2.2zM148.9 208.0h2.2V212.7h-2.2zM150.4 208.0h2.2V212.4h-2.2zM151.9 212.2h2.2V213.8h-2.2zM153.4 213.6h2.2V216.9h-2.2zM160.9 210.0h2.2V216.5h-2.2zM166.9 214.7h2.2V217.2h-2.2zM171.4 218.1h2.2V222.8h-2.2zM172.9 222.2h2.2V224.5h-2.2zM174.4 222.8h2.2V229.3h-2.2zM175.9 227.5h2.2V230.4h-2.2zM177.4 230.4h2.2V235.1h-2.2zM178.9 233.7h2.2V237.2h-2.2zM181.9 238.3h2.2V242.2h-2.2zM183.4 242.2h2.2V245.3h-2.2zM192.4 239.6h2.2V247.9h-2.2zM199.9 236.8h2.2V239.8h-2.2zM201.4 239.8h2.2V244.7h-2.2zM208.9 244.8h2.2V246.6h-2.2zM211.9 245.0h2.2V246.7h-2.2zM214.9 245.6h2.2V253.2h-2.2zM216.4 250.0h2.2V253.6h-2.2zM217.9 253.6h2.2V260.1h-2.2zM219.4 260.1h2.2V265.3h-2.2zM234.4 251.1h2.2V253.2h-2.2zM246.4 243.2h2.2V251.8h-2.2zM247.9 250.9h2.2V255.4h-2.2zM249.4 255.4h2.2V261.2h-2.2zM250.9 261.2h2.2V265.9h-2.2zM252.4 265.7h2.2V274.4h-2.2zM256.9 252.4h2.2V260.3h-2.2zM259.9 257.1h2.2V261.9h-2.2zM261.4 259.0h2.2V267.7h-2.2zM262.9 264.5h2.2V275.0h-2.2zM271.9 263.8h2.2V267.7h-2.2zM276.4 271.2h2.2V276.1h-2.2zM277.9 274.9h2.2V281.9h-2.2zM279.4 281.9h2.2V285.8h-2.2zM280.9 284.8h2.2V289.1h-2.2zM282.4 286.8h2.2V292.4h-2.2zM283.9 292.4h2.2V298.7h-2.2zM288.4 294.0h2.2V296.5h-2.2zM289.9 296.5h2.2V303.5h-2.2zM291.4 303.5h2.2V309.2h-2.2zM292.9 308.9h2.2V313.3h-2.2zM294.4 311.0h2.2V312.8h-2.2zM295.9 311.6h2.2V314.3h-2.2zM304.9 298.0h2.2V302.6h-2.2zM309.4 297.5h2.2V299.3h-2.2zM316.9 290.0h2.2V291.6h-2.2zM328.9 279.5h2.2V282.7h-2.2zM339.4 278.6h2.2V281.5h-2.2zM340.9 278.6h2.2V291.1h-2.2zM342.4 289.2h2.2V294.4h-2.2zM343.9 294.4h2.2V299.4h-2.2zM345.4 296.9h2.2V305.2h-2.2zM364.9 274.0h2.2V276.0h-2.2zM370.9 277.7h2.2V280.8h-2.2zM397.9 256.5h2.2V262.3h-2.2zM406.9 261.6h2.2V264.3h-2.2zM409.9 265.4h2.2V270.3h-2.2zM411.4 267.5h2.2V271.2h-2.2zM418.9 270.1h2.2V274.7h-2.2zM423.4 267.6h2.2V270.2h-2.2zM432.4 262.1h2.2V266.5h-2.2zM433.9 266.5h2.2V271.0h-2.2zM436.9 268.8h2.2V270.4h-2.2zM438.4 270.1h2.2V271.7h-2.2zM441.4 269.6h2.2V271.6h-2.2zM451.9 266.6h2.2V269.1h-2.2zM466.9 263.5h2.2V277.5h-2.2zM468.4 275.8h2.2V281.7h-2.2zM471.4 276.1h2.2V283.0h-2.2zM475.9 280.4h2.2V283.1h-2.2zM477.4 283.1h2.2V289.3h-2.2zM478.9 284.6h2.2V292.7h-2.2zM480.4 289.1h2.2V295.4h-2.2zM481.9 295.4h2.2V298.6h-2.2zM484.9 298.3h2.2V302.0h-2.2zM501.4 282.1h2.2V284.1h-2.2zM504.4 282.9h2.2V285.0h-2.2zM508.9 289.2h2.2V290.8h-2.2zM514.9 292.1h2.2V293.7h-2.2zM520.9 289.7h2.2V291.4h-2.2zM522.4 291.4h2.2V294.0h-2.2zM523.9 293.8h2.2V295.4h-2.2zM534.4 289.9h2.2V295.0h-2.2zM535.9 289.4h2.2V296.8h-2.2zM547.9 284.4h2.2V287.1h-2.2zM565.9 275.6h2.2V278.3h-2.2zM574.9 277.3h2.2V279.5h-2.2zM591.4 267.6h2.2V269.7h-2.2zM592.9 269.7h2.2V272.7h-2.2zM594.4 269.6h2.2V273.8h-2.2zM597.4 271.3h2.2V276.6h-2.2zM598.9 276.5h2.2V281.3h-2.2zM600.4 280.4h2.2V287.6h-2.2zM601.9 286.7h2.2V295.6h-2.2zM603.4 292.4h2.2V300.4h-2.2zM606.4 299.9h2.2V308.6h-2.2zM607.9 305.8h2.2V312.1h-2.2zM618.4 288.1h2.2V289.9h-2.2zM624.4 286.0h2.2V289.4h-2.2zM625.9 289.4h2.2V293.1h-2.2zM627.4 291.1h2.2V293.8h-2.2zM648.4 281.7h2.2V283.9h-2.2zM651.4 282.5h2.2V287.2h-2.2zM652.9 285.6h2.2V290.1h-2.2zM654.4 288.1h2.2V294.8h-2.2zM655.9 293.4h2.2V295.2h-2.2zM660.4 293.8h2.2V296.9h-2.2zM670.9 288.6h2.2V292.1h-2.2zM675.4 290.6h2.2V295.2h-2.2zM676.9 295.2h2.2V296.9h-2.2zM681.4 295.9h2.2V298.5h-2.2zM684.4 298.8h2.2V304.4h-2.2zM685.9 304.4h2.2V307.6h-2.2zM688.9 311.5h2.2V317.2h-2.2zM697.9 299.9h2.2V303.5h-2.2zM721.9 274.5h2.2V276.1h-2.2zM730.9 264.3h2.2V269.0h-2.2zM732.4 268.5h2.2V271.9h-2.2zM733.9 271.4h2.2V274.2h-2.2zM748.9 254.3h2.2V257.5h-2.2zM756.4 249.5h2.2V253.0h-2.2zM768.4 255.4h2.2V259.6h-2.2zM771.4 258.0h2.2V263.8h-2.2zM777.4 249.1h2.2V251.5h-2.2zM792.4 240.8h2.2V242.7h-2.2zM793.9 242.7h2.2V245.5h-2.2zM796.9 242.9h2.2V249.2h-2.2zM798.4 247.6h2.2V250.6h-2.2zM808.9 247.6h2.2V249.6h-2.2zM810.4 248.9h2.2V251.5h-2.2zM816.4 249.0h2.2V252.0h-2.2zM820.9 251.1h2.2V253.5h-2.2zM822.4 252.4h2.2V254.0h-2.2zM823.9 254.0h2.2V258.0h-2.2zM825.4 257.5h2.2V266.5h-2.2zM829.9 266.7h2.2V268.9h-2.2zM831.4 266.7h2.2V271.2h-2.2zM832.9 268.6h2.2V274.8h-2.2zM834.4 273.0h2.2V279.1h-2.2zM841.9 273.0h2.2V276.0h-2.2zM844.9 275.5h2.2V277.6h-2.2zM846.4 277.6h2.2V279.8h-2.2zM847.9 279.3h2.2V283.6h-2.2zM850.9 281.3h2.2V283.4h-2.2zM859.9 278.8h2.2V280.4h-2.2zM861.4 279.4h2.2V287.2h-2.2zM862.9 285.7h2.2V294.1h-2.2zM865.9 288.6h2.2V293.8h-2.2zM879.4 278.5h2.2V284.8h-2.2zM880.9 282.5h2.2V291.6h-2.2zM882.4 289.7h2.2V291.8h-2.2zM883.9 289.2h2.2V296.4h-2.2zM886.9 297.3h2.2V299.5h-2.2zM888.4 299.5h2.2V302.8h-2.2zM892.9 304.9h2.2V306.5h-2.2zM894.4 303.2h2.2V310.7h-2.2zM897.4 310.3h2.2V312.8h-2.2zM898.9 310.4h2.2V313.9h-2.2zM903.4 312.8h2.2V315.2h-2.2zM907.9 313.3h2.2V316.3h-2.2zM909.4 316.3h2.2V320.3h-2.2zM910.9 320.3h2.2V325.9h-2.2zM912.4 324.1h2.2V328.7h-2.2zM925.9 308.8h2.2V312.7h-2.2zM927.4 309.6h2.2V316.0h-2.2zM928.9 316.0h2.2V317.6h-2.2zM930.4 315.8h2.2V320.4h-2.2zM937.9 323.6h2.2V326.7h-2.2zM939.4 325.9h2.2V330.1h-2.2zM940.9 328.2h2.2V331.2h-2.2zM942.4 330.9h2.2V333.9h-2.2zM954.4 312.8h2.2V315.0h-2.2zM955.9 315.0h2.2V319.6h-2.2zM957.4 319.6h2.2V323.3h-2.2zM958.9 323.3h2.2V328.5h-2.2zM960.4 328.5h2.2V332.4h-2.2zM972.4 315.1h2.2V321.7h-2.2zM973.9 321.7h2.2V328.7h-2.2zM975.4 325.8h2.2V328.8h-2.2zM976.9 328.8h2.2V332.9h-2.2zM987.4 311.1h2.2V323.2h-2.2zM994.9 322.1h2.2V326.0h-2.2zM997.9 325.5h2.2V327.1h-2.2zM1000.9 325.1h2.2V331.3h-2.2zM1002.4 328.1h2.2V329.7h-2.2zM1011.4 320.0h2.2V323.8h-2.2zM1012.9 323.8h2.2V327.9h-2.2zM1014.4 326.2h2.2V330.9h-2.2zM1015.9 330.7h2.2V336.3h-2.2zM1018.9 332.5h2.2V334.6h-2.2zM1021.9 333.5h2.2V335.9h-2.2zM1024.9 339.1h2.2V346.8h-2.2zM1027.9 343.8h2.2V351.6h-2.2zM1038.4 337.5h2.2V339.4h-2.2zM1039.9 339.4h2.2V341.7h-2.2zM1051.9 322.6h2.2V326.7h-2.2zM1053.4 325.6h2.2V327.6h-2.2zM1054.9 325.0h2.2V328.8h-2.2zM1086.4 309.6h2.2V311.2h-2.2zM1092.4 303.4h2.2V307.1h-2.2zM1107.4 298.0h2.2V300.8h-2.2zM1120.9 280.6h2.2V282.8h-2.2zM1122.4 282.1h2.2V284.1h-2.2zM1125.4 283.0h2.2V286.9h-2.2zM1126.9 286.3h2.2V287.9h-2.2zM1149.4 266.9h2.2V269.6h-2.2zM1150.9 267.3h2.2V272.6h-2.2zM1152.4 272.6h2.2V275.7h-2.2zM1153.9 275.3h2.2V278.2h-2.2zM1155.4 278.1h2.2V279.7h-2.2zM1156.9 279.7h2.2V283.9h-2.2zM1158.4 283.9h2.2V286.7h-2.2zM1159.9 286.7h2.2V291.7h-2.2zM1173.4 256.9h2.2V262.8h-2.2zM1177.9 259.1h2.2V271.7h-2.2zM1179.4 271.7h2.2V285.6h-2.2zM1180.9 282.6h2.2V289.6h-2.2zM1185.4 291.0h2.2V295.1h-2.2zM1195.9 261.9h2.2V295.0h-2.2zM1201.9 280.8h2.2V290.5h-2.2zM1203.4 288.4h2.2V299.8h-2.2zM1204.9 298.6h2.2V313.1h-2.2zM1206.4 310.2h2.2V317.9h-2.2zM1237.9 238.6h2.2V240.8h-2.2zM1239.4 237.8h2.2V242.8h-2.2zM1249.9 226.4h2.2V231.4h-2.2zM1251.4 229.7h2.2V244.4h-2.2zM1258.9 235.6h2.2V238.9h-2.2zM1260.4 238.9h2.2V241.0h-2.2zM1263.4 238.6h2.2V243.9h-2.2zM1264.9 243.7h2.2V249.6h-2.2zM1281.4 219.6h2.2V226.6h-2.2zM1282.9 225.3h2.2V227.6h-2.2zM1284.4 227.6h2.2V231.4h-2.2zM1296.4 227.1h2.2V231.4h-2.2zM1299.4 230.9h2.2V234.2h-2.2zM1324.9 142.8h2.2V153.5h-2.2zM1326.4 153.0h2.2V165.2h-2.2zM1327.9 164.3h2.2V176.7h-2.2zM1332.4 166.7h2.2V172.3h-2.2zM1333.9 169.9h2.2V176.4h-2.2zM1354.9 98.6h2.2V102.8h-2.2zM1356.4 101.8h2.2V111.2h-2.2zM1357.9 108.3h2.2V120.4h-2.2zM1359.4 117.9h2.2V126.4h-2.2zM1366.9 108.2h2.2V111.4h-2.2zM1369.9 111.6h2.2V120.5h-2.2zM1371.4 115.1h2.2V121.4h-2.2zM1372.9 121.4h2.2V126.4h-2.2zM1374.4 124.1h2.2V131.4h-2.2zM1375.9 130.1h2.2V133.3h-2.2zM1387.9 114.5h2.2V120.2h-2.2zM1389.4 120.2h2.2V125.3h-2.2zM1390.9 124.4h2.2V147.2h-2.2zM1398.4 141.9h2.2V157.0h-2.2zM1399.9 156.6h2.2V167.0h-2.2zM1401.4 167.0h2.2V170.0h-2.2zM1420.9 131.3h2.2V134.3h-2.2zM1422.4 134.3h2.2V136.8h-2.2zM1423.9 134.5h2.2V142.9h-2.2zM1425.4 137.2h2.2V145.6h-2.2zM1428.4 140.0h2.2V144.7h-2.2zM1431.4 144.7h2.2V149.4h-2.2zM1432.9 149.4h2.2V156.4h-2.2zM1434.4 156.4h2.2V161.7h-2.2zM1435.9 161.4h2.2V165.5h-2.2zM1441.9 162.2h2.2V165.3h-2.2zM1443.4 163.4h2.2V167.8h-2.2zM1452.4 158.6h2.2V169.8h-2.2zM1453.9 166.7h2.2V174.2h-2.2zM1468.9 177.7h2.2V183.8h-2.2zM1470.4 183.8h2.2V188.8h-2.2zM1471.9 188.8h2.2V213.4h-2.2zM1473.4 210.6h2.2V217.5h-2.2zM1474.9 217.5h2.2V223.3h-2.2zM1476.4 223.3h2.2V228.8h-2.2zM1477.9 228.6h2.2V243.8h-2.2zM1483.9 212.4h2.2V221.4h-2.2zM1485.4 220.9h2.2V227.9h-2.2zM1486.9 225.4h2.2V232.7h-2.2zM1488.4 232.7h2.2V242.5h-2.2zM1489.9 239.9h2.2V251.7h-2.2zM1507.9 213.3h2.2V216.4h-2.2zM1509.4 215.2h2.2V218.5h-2.2zM1510.9 218.5h2.2V222.7h-2.2zM1512.4 222.7h2.2V225.3h-2.2zM1513.9 222.3h2.2V229.0h-2.2zM1515.4 228.2h2.2V230.2h-2.2zM1516.9 230.2h2.2V231.8h-2.2zM1519.9 232.6h2.2V234.2h-2.2zM1521.4 233.7h2.2V236.0h-2.2zM1524.4 232.8h2.2V236.9h-2.2zM1546.9 223.2h2.2V235.0h-2.2zM1563.4 192.5h2.2V200.1h-2.2zM1566.4 201.2h2.2V210.5h-2.2zM1567.9 210.5h2.2V214.7h-2.2zM1569.4 214.7h2.2V219.1h-2.2zM1572.4 218.0h2.2V221.7h-2.2zM1573.9 221.7h2.2V227.5h-2.2zM1575.4 224.9h2.2V228.2h-2.2zM1576.9 228.2h2.2V230.0h-2.2zM1578.4 229.8h2.2V234.2h-2.2zM1579.9 231.0h2.2V240.5h-2.2zM1581.4 239.5h2.2V244.2h-2.2zM1582.9 242.7h2.2V251.4h-2.2zM1593.4 240.0h2.2V243.3h-2.2zM1594.9 243.3h2.2V248.4h-2.2zM1596.4 242.7h2.2V247.5h-2.2zM1605.4 232.9h2.2V235.9h-2.2zM1606.9 235.9h2.2V240.3h-2.2zM1641.4 196.7h2.2V198.3h-2.2zM1650.4 195.2h2.2V197.8h-2.2zM1654.9 194.9h2.2V197.0h-2.2zM1669.9 169.0h2.2V170.6h-2.2zM1672.9 170.6h2.2V174.5h-2.2zM1704.4 158.0h2.2V161.1h-2.2zM1705.9 161.1h2.2V162.7h-2.2zM1707.4 162.6h2.2V164.4h-2.2zM1713.4 168.1h2.2V170.0h-2.2zM1717.9 169.1h2.2V172.0h-2.2zM1729.9 166.3h2.2V168.6h-2.2zM1743.4 156.8h2.2V167.6h-2.2zM1744.9 164.7h2.2V170.7h-2.2zM1746.4 168.9h2.2V175.8h-2.2zM1747.9 175.8h2.2V182.3h-2.2zM1756.9 167.8h2.2V169.4h-2.2zM1773.4 140.7h2.2V146.1h-2.2zM1774.9 146.1h2.2V151.5h-2.2zM1776.4 149.8h2.2V155.1h-2.2zM1779.4 152.3h2.2V154.5h-2.2zM1780.9 153.4h2.2V156.0h-2.2zM1782.4 154.4h2.2V161.4h-2.2zM1783.9 159.0h2.2V163.6h-2.2zM1792.9 123.5h2.2V126.7h-2.2zM1794.4 125.1h2.2V130.5h-2.2zM1795.9 130.3h2.2V134.7h-2.2zM1797.4 132.0h2.2V139.2h-2.2zM1812.4 132.8h2.2V135.1h-2.2zM1816.9 132.5h2.2V136.4h-2.2zM1828.9 122.8h2.2V128.6h-2.2zM1831.9 125.7h2.2V130.6h-2.2zM1839.4 122.7h2.2V126.3h-2.2zM1855.9 122.2h2.2V124.4h-2.2zM1885.9 93.2h2.2V98.3h-2.2zM1891.9 87.8h2.2V89.4h-2.2zM1894.9 90.0h2.2V92.1h-2.2z"/><path fill="#f4f088" d="M21.4 214.4h2.6V216.0h-2.6zM24.4 213.5h2.6V215.1h-2.6zM28.9 217.3h2.6V218.9h-2.6zM30.4 217.6h2.6V219.2h-2.6zM34.9 223.2h2.6V224.8h-2.6zM37.9 225.6h2.6V227.2h-2.6zM39.4 224.9h2.6V226.5h-2.6zM40.9 224.1h2.6V225.7h-2.6zM46.9 212.4h2.6V214.0h-2.6zM48.4 212.9h2.6V214.5h-2.6zM49.9 213.2h2.6V214.8h-2.6zM55.9 210.6h2.6V212.2h-2.6zM63.4 214.1h2.6V215.7h-2.6zM73.9 211.2h2.6V212.8h-2.6zM78.4 208.2h2.6V209.8h-2.6zM81.4 205.3h2.6V206.9h-2.6zM82.9 205.6h2.6V207.2h-2.6zM87.4 203.1h2.6V204.7h-2.6zM100.9 211.3h2.6V212.9h-2.6zM109.9 218.3h2.6V219.9h-2.6zM111.4 218.7h2.6V220.3h-2.6zM112.9 219.0h2.6V220.6h-2.6zM114.4 219.5h2.6V221.1h-2.6zM118.9 220.0h2.6V221.6h-2.6zM120.4 219.0h2.6V220.6h-2.6zM121.9 218.3h2.6V219.9h-2.6zM123.4 218.4h2.6V220.0h-2.6zM124.9 218.8h2.6V220.4h-2.6zM127.9 221.8h2.6V223.4h-2.6zM132.4 222.6h2.6V224.2h-2.6zM136.9 225.6h2.6V227.2h-2.6zM141.4 228.7h2.6V230.3h-2.6zM154.9 215.8h2.6V217.4h-2.6zM162.4 215.4h2.6V217.0h-2.6zM163.9 214.7h2.6V216.3h-2.6zM165.4 214.1h2.6V215.7h-2.6zM184.9 242.6h2.6V244.2h-2.6zM186.4 242.9h2.6V244.5h-2.6zM190.9 239.2h2.6V240.8h-2.6zM202.9 243.7h2.6V245.3h-2.6zM204.4 243.3h2.6V244.9h-2.6zM205.9 243.4h2.6V245.0h-2.6zM207.4 243.8h2.6V245.4h-2.6zM213.4 246.3h2.6V247.9h-2.6zM225.4 250.9h2.6V252.5h-2.6zM231.4 246.7h2.6V248.3h-2.6zM235.9 251.9h2.6V253.5h-2.6zM237.4 252.4h2.6V254.0h-2.6zM244.9 245.2h2.6V246.8h-2.6zM258.4 256.5h2.6V258.1h-2.6zM265.9 271.6h2.6V273.2h-2.6zM270.4 263.4h2.6V265.0h-2.6zM286.9 294.1h2.6V295.7h-2.6zM298.9 310.7h2.6V312.3h-2.6zM301.9 306.0h2.6V307.6h-2.6zM312.4 293.6h2.6V295.2h-2.6zM315.4 289.4h2.6V291.0h-2.6zM321.4 283.3h2.6V284.9h-2.6zM324.4 279.8h2.6V281.4h-2.6zM330.4 282.4h2.6V284.0h-2.6zM331.9 282.6h2.6V284.2h-2.6zM337.9 277.8h2.6V279.4h-2.6zM363.4 273.1h2.6V274.7h-2.6zM366.4 275.0h2.6V276.6h-2.6zM367.9 275.8h2.6V277.4h-2.6zM369.4 276.5h2.6V278.1h-2.6zM372.4 279.2h2.6V280.8h-2.6zM373.9 279.7h2.6V281.3h-2.6zM375.4 279.8h2.6V281.4h-2.6zM390.4 256.4h2.6V258.0h-2.6zM394.9 257.0h2.6V258.6h-2.6zM405.4 260.8h2.6V262.4h-2.6zM408.4 264.0h2.6V265.6h-2.6zM412.9 270.4h2.6V272.0h-2.6zM414.4 270.1h2.6V271.7h-2.6zM415.9 269.5h2.6V271.1h-2.6zM417.4 269.3h2.6V270.9h-2.6zM430.9 262.3h2.6V263.9h-2.6zM444.4 270.3h2.6V271.9h-2.6zM447.4 265.1h2.6V266.7h-2.6zM448.9 265.3h2.6V266.9h-2.6zM450.4 265.5h2.6V267.1h-2.6zM453.4 268.5h2.6V270.1h-2.6zM454.9 268.8h2.6V270.4h-2.6zM462.4 264.3h2.6V265.9h-2.6zM465.4 265.7h2.6V267.3h-2.6zM474.4 279.4h2.6V281.0h-2.6zM483.4 298.0h2.6V299.6h-2.6zM486.4 301.6h2.6V303.2h-2.6zM489.4 301.7h2.6V303.3h-2.6zM496.9 287.1h2.6V288.7h-2.6zM502.9 282.4h2.6V284.0h-2.6zM507.4 288.1h2.6V289.7h-2.6zM510.4 290.4h2.6V292.0h-2.6zM511.9 291.2h2.6V292.8h-2.6zM513.4 291.3h2.6V292.9h-2.6zM517.9 288.1h2.6V289.7h-2.6zM519.4 288.5h2.6V290.1h-2.6zM525.4 294.8h2.6V296.4h-2.6zM526.9 295.4h2.6V297.0h-2.6zM532.9 288.8h2.6V290.4h-2.6zM538.9 295.0h2.6V296.6h-2.6zM546.4 283.7h2.6V285.3h-2.6zM550.9 284.5h2.6V286.1h-2.6zM553.9 283.3h2.6V284.9h-2.6zM556.9 279.6h2.6V281.2h-2.6zM567.4 277.0h2.6V278.6h-2.6zM568.9 276.6h2.6V278.2h-2.6zM570.4 277.2h2.6V278.8h-2.6zM573.4 276.4h2.6V278.0h-2.6zM577.9 281.0h2.6V282.6h-2.6zM582.4 276.2h2.6V277.8h-2.6zM586.9 270.5h2.6V272.1h-2.6zM588.4 270.1h2.6V271.7h-2.6zM595.9 272.8h2.6V274.4h-2.6zM604.9 298.8h2.6V300.4h-2.6zM616.9 287.6h2.6V289.2h-2.6zM621.4 287.5h2.6V289.1h-2.6zM631.9 295.2h2.6V296.8h-2.6zM637.9 285.1h2.6V286.7h-2.6zM640.9 283.6h2.6V285.2h-2.6zM642.4 283.6h2.6V285.2h-2.6zM645.4 281.8h2.6V283.4h-2.6zM646.9 281.4h2.6V283.0h-2.6zM657.4 294.4h2.6V296.0h-2.6zM658.9 294.5h2.6V296.1h-2.6zM661.9 296.1h2.6V297.7h-2.6zM667.9 288.7h2.6V290.3h-2.6zM678.4 295.6h2.6V297.2h-2.6zM679.9 295.4h2.6V297.0h-2.6zM694.9 300.9h2.6V302.5h-2.6zM696.4 300.8h2.6V302.4h-2.6zM699.4 302.3h2.6V303.9h-2.6zM700.9 302.5h2.6V304.1h-2.6zM708.4 294.3h2.6V295.9h-2.6zM711.4 291.1h2.6V292.7h-2.6zM714.4 288.6h2.6V290.2h-2.6zM724.9 274.2h2.6V275.8h-2.6zM729.4 264.5h2.6V266.1h-2.6zM735.4 271.8h2.6V273.4h-2.6zM739.9 267.6h2.6V269.2h-2.6zM741.4 267.8h2.6V269.4h-2.6zM742.9 268.0h2.6V269.6h-2.6zM747.4 255.3h2.6V256.9h-2.6zM750.4 256.5h2.6V258.1h-2.6zM757.9 250.7h2.6V252.3h-2.6zM759.4 251.1h2.6V252.7h-2.6zM760.9 251.7h2.6V253.3h-2.6zM762.4 251.6h2.6V253.2h-2.6zM765.4 254.0h2.6V255.6h-2.6zM769.9 259.0h2.6V260.6h-2.6zM778.9 251.0h2.6V252.6h-2.6zM780.4 250.9h2.6V252.5h-2.6zM781.9 250.6h2.6V252.2h-2.6zM784.9 248.7h2.6V250.3h-2.6zM795.4 244.6h2.6V246.2h-2.6zM799.9 249.5h2.6V251.1h-2.6zM801.4 249.2h2.6V250.8h-2.6zM802.9 249.1h2.6V250.7h-2.6zM814.9 248.3h2.6V249.9h-2.6zM817.9 251.0h2.6V252.6h-2.6zM819.4 250.6h2.6V252.2h-2.6zM826.9 264.2h2.6V265.8h-2.6zM835.9 276.1h2.6V277.7h-2.6zM840.4 271.9h2.6V273.5h-2.6zM843.4 275.0h2.6V276.6h-2.6zM853.9 281.4h2.6V283.0h-2.6zM855.4 281.8h2.6V283.4h-2.6zM867.4 292.8h2.6V294.4h-2.6zM876.4 279.2h2.6V280.8h-2.6zM891.4 304.0h2.6V305.6h-2.6zM900.4 313.3h2.6V314.9h-2.6zM904.9 314.0h2.6V315.6h-2.6zM906.4 313.9h2.6V315.5h-2.6zM913.9 327.3h2.6V328.9h-2.6zM933.4 320.1h2.6V321.7h-2.6zM936.4 322.5h2.6V324.1h-2.6zM943.9 331.5h2.6V333.1h-2.6zM945.4 330.7h2.6V332.3h-2.6zM949.9 317.4h2.6V319.0h-2.6zM967.9 317.9h2.6V319.5h-2.6zM970.9 316.7h2.6V318.3h-2.6zM981.4 325.7h2.6V327.3h-2.6zM991.9 323.2h2.6V324.8h-2.6zM993.4 323.3h2.6V324.9h-2.6zM996.4 325.0h2.6V326.6h-2.6zM999.4 325.7h2.6V327.3h-2.6zM1003.9 328.9h2.6V330.5h-2.6zM1008.4 321.7h2.6V323.3h-2.6zM1017.4 332.8h2.6V334.4h-2.6zM1029.4 347.9h2.6V349.5h-2.6zM1035.4 337.9h2.6V339.5h-2.6zM1036.9 337.2h2.6V338.8h-2.6zM1047.4 329.4h2.6V331.0h-2.6zM1060.9 317.0h2.6V318.6h-2.6zM1063.9 315.2h2.6V316.8h-2.6zM1066.9 313.2h2.6V314.8h-2.6zM1068.4 312.8h2.6V314.4h-2.6zM1069.9 312.9h2.6V314.5h-2.6zM1071.4 313.1h2.6V314.7h-2.6zM1072.9 312.3h2.6V313.9h-2.6zM1074.4 311.4h2.6V313.0h-2.6zM1075.9 310.8h2.6V312.4h-2.6zM1077.4 310.5h2.6V312.1h-2.6zM1078.9 310.1h2.6V311.7h-2.6zM1080.4 309.8h2.6V311.4h-2.6zM1081.9 309.4h2.6V311.0h-2.6zM1083.4 309.3h2.6V310.9h-2.6zM1084.9 309.2h2.6V310.8h-2.6zM1089.4 307.5h2.6V309.1h-2.6zM1099.9 301.7h2.6V303.3h-2.6zM1101.4 302.4h2.6V304.0h-2.6zM1105.9 299.4h2.6V301.0h-2.6zM1108.9 299.5h2.6V301.1h-2.6zM1111.9 297.8h2.6V299.4h-2.6zM1113.4 297.5h2.6V299.1h-2.6zM1123.9 283.9h2.6V285.5h-2.6zM1132.9 284.2h2.6V285.8h-2.6zM1135.9 286.5h2.6V288.1h-2.6zM1137.4 286.5h2.6V288.1h-2.6zM1144.9 271.9h2.6V273.5h-2.6zM1170.4 256.4h2.6V258.0h-2.6zM1176.4 257.8h2.6V259.4h-2.6zM1182.4 286.9h2.6V288.5h-2.6zM1186.9 291.6h2.6V293.2h-2.6zM1246.9 227.4h2.6V229.0h-2.6zM1248.4 227.6h2.6V229.2h-2.6zM1261.9 239.7h2.6V241.3h-2.6zM1266.4 246.9h2.6V248.5h-2.6zM1278.4 223.3h2.6V224.9h-2.6zM1287.4 229.8h2.6V231.4h-2.6zM1290.4 227.6h2.6V229.2h-2.6zM1293.4 225.5h2.6V227.1h-2.6zM1297.9 230.8h2.6V232.4h-2.6zM1368.4 110.7h2.6V112.3h-2.6zM1377.4 131.0h2.6V132.6h-2.6zM1378.9 130.5h2.6V132.1h-2.6zM1380.4 129.7h2.6V131.3h-2.6zM1392.4 146.4h2.6V148.0h-2.6zM1405.9 161.7h2.6V163.3h-2.6zM1417.9 131.1h2.6V132.7h-2.6zM1426.9 142.0h2.6V143.6h-2.6zM1429.9 143.9h2.6V145.5h-2.6zM1437.4 162.3h2.6V163.9h-2.6zM1438.9 162.4h2.6V164.0h-2.6zM1458.4 178.6h2.6V180.2h-2.6zM1459.9 178.6h2.6V180.2h-2.6zM1461.4 178.0h2.6V179.6h-2.6zM1462.9 177.7h2.6V179.3h-2.6zM1464.4 177.5h2.6V179.1h-2.6zM1465.9 177.0h2.6V178.6h-2.6zM1467.4 176.8h2.6V178.4h-2.6zM1504.9 212.1h2.6V213.7h-2.6zM1506.4 212.4h2.6V214.0h-2.6zM1518.4 231.5h2.6V233.1h-2.6zM1527.4 236.5h2.6V238.1h-2.6zM1536.4 226.1h2.6V227.7h-2.6zM1537.9 226.3h2.6V227.9h-2.6zM1539.4 225.7h2.6V227.3h-2.6zM1540.9 225.0h2.6V226.6h-2.6zM1557.4 198.6h2.6V200.2h-2.6zM1561.9 192.4h2.6V194.0h-2.6zM1570.9 216.7h2.6V218.3h-2.6zM1588.9 250.8h2.6V252.4h-2.6zM1597.9 246.4h2.6V248.0h-2.6zM1599.4 246.3h2.6V247.9h-2.6zM1600.9 246.0h2.6V247.6h-2.6zM1611.4 235.1h2.6V236.7h-2.6zM1614.4 235.3h2.6V236.9h-2.6zM1620.4 227.9h2.6V229.5h-2.6zM1632.4 205.6h2.6V207.2h-2.6zM1636.9 196.9h2.6V198.5h-2.6zM1638.4 196.1h2.6V197.7h-2.6zM1639.9 195.8h2.6V197.4h-2.6zM1644.4 197.0h2.6V198.6h-2.6zM1645.9 197.0h2.6V198.6h-2.6zM1648.9 194.5h2.6V196.1h-2.6zM1657.9 194.9h2.6V196.5h-2.6zM1659.4 195.2h2.6V196.8h-2.6zM1671.4 169.8h2.6V171.4h-2.6zM1675.9 168.7h2.6V170.3h-2.6zM1683.4 164.1h2.6V165.7h-2.6zM1684.9 163.5h2.6V165.1h-2.6zM1687.9 160.2h2.6V161.8h-2.6zM1690.9 159.6h2.6V161.2h-2.6zM1696.9 159.8h2.6V161.4h-2.6zM1699.9 157.2h2.6V158.8h-2.6zM1701.4 157.4h2.6V159.0h-2.6zM1708.9 163.6h2.6V165.2h-2.6zM1714.9 169.4h2.6V171.0h-2.6zM1731.4 167.9h2.6V169.5h-2.6zM1735.9 163.0h2.6V164.6h-2.6zM1740.4 158.7h2.6V160.3h-2.6zM1749.4 176.7h2.6V178.3h-2.6zM1758.4 168.6h2.6V170.2h-2.6zM1765.9 149.8h2.6V151.4h-2.6zM1777.9 151.4h2.6V153.0h-2.6zM1798.9 138.9h2.6V140.5h-2.6zM1807.9 135.1h2.6V136.7h-2.6zM1809.4 135.4h2.6V137.0h-2.6zM1827.4 123.6h2.6V125.2h-2.6zM1830.4 125.3h2.6V126.9h-2.6zM1837.9 121.7h2.6V123.3h-2.6zM1842.4 126.7h2.6V128.3h-2.6zM1843.9 127.1h2.6V128.7h-2.6zM1848.4 124.4h2.6V126.0h-2.6zM1851.4 122.6h2.6V124.2h-2.6zM1854.4 121.0h2.6V122.6h-2.6zM1863.4 114.4h2.6V116.0h-2.6zM1869.4 106.4h2.6V108.0h-2.6zM1872.4 103.3h2.6V104.9h-2.6zM1878.4 90.7h2.6V92.3h-2.6zM1879.9 91.0h2.6V92.6h-2.6zM1881.4 91.8h2.6V93.4h-2.6zM1893.4 88.9h2.6V90.5h-2.6z"/>
<path fill="#ff0000" d="M29.8 417.5h2.2V424.6h-2.2zM43.3 417.3h2.2V418.9h-2.2zM65.8 427.5h2.2V429.1h-2.2zM82.3 424.5h2.2V426.1h-2.2zM124.3 448.5h2.2V450.5h-2.2zM125.8 445.8h2.2V448.5h-2.2zM136.3 440.1h2.2V442.8h-2.2z"/><path fill="#0a80ff" d="M17.8 419.6h2.2V423.5h-2.2zM20.8 423.8h2.2V427.3h-2.2zM47.8 416.5h2.2V420.5h-2.2zM56.8 418.5h2.2V426.7h-2.2zM88.3 426.3h2.2V428.4h-2.2zM89.8 425.5h2.2V430.1h-2.2zM91.3 430.1h2.2V432.8h-2.2zM92.8 432.8h2.2V437.2h-2.2zM94.3 435.2h2.2V441.1h-2.2zM95.8 441.0h2.2V442.6h-2.2zM100.3 441.4h2.2V446.2h-2.2zM113.8 442.7h2.2V445.7h-2.2zM116.8 443.7h2.2V446.1h-2.2zM121.3 447.9h2.2V451.3h-2.2zM130.3 442.8h2.2V446.0h-2.2zM131.8 446.0h2.2V450.4h-2.2z"/><path fill="#f4f088" d="M19.3 422.8h2.6V424.4h-2.6zM25.3 427.7h2.6V429.3h-2.6zM31.3 420.0h2.6V421.6h-2.6zM32.8 420.9h2.6V422.5h-2.6zM34.3 421.0h2.6V422.6h-2.6zM35.8 420.2h2.6V421.8h-2.6zM37.3 419.8h2.6V421.4h-2.6zM38.8 420.0h2.6V421.6h-2.6zM41.8 418.2h2.6V419.8h-2.6zM46.3 415.6h2.6V417.2h-2.6zM52.3 417.0h2.6V418.6h-2.6zM53.8 417.2h2.6V418.8h-2.6zM61.3 430.0h2.6V431.6h-2.6zM67.3 426.4h2.6V428.0h-2.6zM68.8 426.1h2.6V427.7h-2.6zM71.8 425.2h2.6V426.8h-2.6zM74.8 425.4h2.6V427.0h-2.6zM79.3 424.1h2.6V425.7h-2.6zM80.8 424.5h2.6V426.1h-2.6zM83.8 423.6h2.6V425.2h-2.6zM98.8 442.3h2.6V443.9h-2.6zM103.3 443.2h2.6V444.8h-2.6zM107.8 442.5h2.6V444.1h-2.6zM110.8 442.4h2.6V444.0h-2.6zM112.3 442.0h2.6V443.6h-2.6zM115.3 444.1h2.6V445.7h-2.6zM137.8 439.2h2.6V440.8h-2.6z"/>
<rect x="142.5" y="458.5" width="2.6" height="2" fill="#f4f088"/>
<path fill="#ff0000" d="M146.9 528.8h2.2V543.8h-2.2zM185.9 555.1h2.2V558.8h-2.2zM188.9 550.2h2.2V554.6h-2.2zM239.9 571.1h2.2V575.9h-2.2zM265.4 578.4h2.2V583.8h-2.2zM266.9 573.4h2.2V581.4h-2.2zM271.4 568.5h2.2V573.2h-2.2zM286.4 575.5h2.2V581.2h-2.2zM287.9 572.3h2.2V576.3h-2.2zM298.4 573.7h2.2V578.3h-2.2zM301.4 571.8h2.2V577.2h-2.2zM302.9 569.9h2.2V571.8h-2.2zM313.4 561.7h2.2V564.7h-2.2zM314.9 559.9h2.2V561.9h-2.2zM325.4 551.6h2.2V558.7h-2.2zM326.9 546.3h2.2V552.3h-2.2zM349.4 557.0h2.2V560.2h-2.2zM350.9 554.0h2.2V558.5h-2.2zM371.9 551.4h2.2V553.2h-2.2zM382.4 544.6h2.2V547.8h-2.2zM430.4 553.2h2.2V556.1h-2.2zM490.4 553.6h2.2V561.1h-2.2zM491.9 549.2h2.2V553.6h-2.2zM493.4 546.2h2.2V550.9h-2.2zM494.9 542.6h2.2V551.1h-2.2zM515.9 544.4h2.2V547.0h-2.2zM553.4 557.3h2.2V563.1h-2.2zM556.4 556.0h2.2V558.3h-2.2zM583.4 563.0h2.2V569.0h-2.2zM611.9 569.1h2.2V571.0h-2.2zM616.4 563.3h2.2V567.1h-2.2zM632.9 563.9h2.2V566.3h-2.2zM635.9 559.5h2.2V563.6h-2.2zM664.4 560.3h2.2V564.0h-2.2zM667.4 555.8h2.2V558.9h-2.2zM682.4 552.2h2.2V556.7h-2.2zM685.4 547.6h2.2V550.6h-2.2zM716.9 542.0h2.2V550.4h-2.2zM718.4 536.9h2.2V543.8h-2.2zM719.9 532.8h2.2V537.9h-2.2zM722.9 530.7h2.2V534.2h-2.2zM725.9 528.3h2.2V530.2h-2.2zM743.9 538.6h2.2V542.4h-2.2zM772.4 556.9h2.2V560.1h-2.2zM776.9 546.4h2.2V552.7h-2.2zM809.9 580.9h2.2V584.2h-2.2zM838.4 615.7h2.2V623.3h-2.2zM839.9 609.1h2.2V617.2h-2.2zM844.4 604.7h2.2V607.0h-2.2zM857.9 608.1h2.2V610.2h-2.2zM866.9 603.0h2.2V607.7h-2.2zM868.4 600.8h2.2V603.8h-2.2zM869.9 597.8h2.2V601.0h-2.2zM871.4 593.9h2.2V598.6h-2.2zM938.9 627.5h2.2V632.5h-2.2zM941.9 626.9h2.2V629.3h-2.2zM949.4 623.2h2.2V632.2h-2.2zM950.9 616.4h2.2V623.2h-2.2zM955.4 612.2h2.2V615.2h-2.2zM977.9 609.5h2.2V611.9h-2.2zM979.4 607.1h2.2V612.1h-2.2zM980.9 603.9h2.2V608.4h-2.2zM983.9 597.7h2.2V603.9h-2.2zM985.4 595.5h2.2V600.7h-2.2zM986.9 591.2h2.2V595.5h-2.2zM995.9 589.6h2.2V592.7h-2.2zM997.4 586.5h2.2V589.6h-2.2zM1010.9 579.8h2.2V590.3h-2.2zM1028.9 601.0h2.2V603.9h-2.2zM1045.4 600.0h2.2V605.2h-2.2zM1048.4 591.3h2.2V596.5h-2.2zM1082.9 603.5h2.2V605.6h-2.2zM1085.9 599.8h2.2V603.2h-2.2zM1115.9 591.7h2.2V595.0h-2.2zM1118.9 586.9h2.2V589.2h-2.2zM1142.9 585.5h2.2V589.8h-2.2zM1150.4 579.8h2.2V583.6h-2.2zM1153.4 573.3h2.2V577.9h-2.2zM1163.9 583.9h2.2V591.2h-2.2zM1165.4 577.3h2.2V585.9h-2.2zM1166.9 573.0h2.2V581.6h-2.2zM1168.4 568.8h2.2V573.0h-2.2zM1169.9 566.3h2.2V569.3h-2.2zM1171.4 564.2h2.2V566.3h-2.2zM1199.9 584.1h2.2V588.8h-2.2zM1210.4 575.6h2.2V581.5h-2.2zM1213.4 572.7h2.2V576.4h-2.2zM1217.9 566.6h2.2V569.5h-2.2zM1226.9 566.7h2.2V570.9h-2.2zM1228.4 559.7h2.2V567.4h-2.2zM1250.9 570.5h2.2V577.6h-2.2zM1279.4 570.8h2.2V573.9h-2.2zM1295.9 565.7h2.2V573.7h-2.2zM1297.4 560.7h2.2V565.7h-2.2zM1301.9 554.1h2.2V559.2h-2.2zM1306.4 551.1h2.2V559.4h-2.2zM1312.4 545.0h2.2V550.2h-2.2zM1313.9 539.1h2.2V545.0h-2.2zM1315.4 534.5h2.2V539.2h-2.2zM1316.9 529.0h2.2V535.8h-2.2zM1337.9 547.2h2.2V554.5h-2.2zM1342.4 542.3h2.2V546.7h-2.2zM1343.9 537.1h2.2V545.0h-2.2zM1345.4 532.5h2.2V537.9h-2.2zM1346.9 527.3h2.2V533.9h-2.2zM1348.4 517.7h2.2V527.8h-2.2zM1349.9 515.2h2.2V523.8h-2.2zM1366.4 516.7h2.2V521.0h-2.2zM1367.9 515.2h2.2V518.3h-2.2zM1379.9 511.4h2.2V514.2h-2.2zM1384.4 503.8h2.2V508.8h-2.2zM1402.4 529.3h2.2V533.7h-2.2zM1403.9 526.5h2.2V531.4h-2.2zM1406.9 522.7h2.2V526.3h-2.2zM1450.4 565.3h2.2V571.7h-2.2zM1451.9 555.6h2.2V565.3h-2.2zM1456.4 550.0h2.2V553.8h-2.2zM1480.4 556.0h2.2V564.4h-2.2zM1492.4 554.0h2.2V560.7h-2.2zM1493.9 550.4h2.2V556.4h-2.2zM1495.4 544.5h2.2V550.4h-2.2zM1507.4 557.7h2.2V559.6h-2.2zM1508.9 556.0h2.2V557.7h-2.2zM1528.4 556.3h2.2V565.4h-2.2zM1534.4 553.0h2.2V554.8h-2.2zM1550.9 550.3h2.2V553.0h-2.2zM1585.4 561.1h2.2V566.6h-2.2zM1586.9 557.5h2.2V562.4h-2.2zM1588.4 553.1h2.2V560.3h-2.2zM1591.4 545.3h2.2V549.3h-2.2zM1592.9 541.2h2.2V545.5h-2.2zM1618.4 554.7h2.2V562.9h-2.2zM1619.9 546.3h2.2V556.1h-2.2zM1621.4 542.7h2.2V550.1h-2.2zM1622.9 538.5h2.2V542.7h-2.2zM1660.4 541.1h2.2V545.8h-2.2zM1661.9 536.4h2.2V544.1h-2.2zM1663.4 531.6h2.2V539.0h-2.2zM1666.4 526.7h2.2V529.6h-2.2zM1700.9 520.8h2.2V527.6h-2.2zM1702.4 519.1h2.2V523.5h-2.2zM1720.4 511.5h2.2V514.2h-2.2zM1726.4 506.3h2.2V509.1h-2.2zM1759.4 516.5h2.2V520.2h-2.2zM1765.4 511.3h2.2V516.5h-2.2zM1766.9 507.5h2.2V511.7h-2.2zM1789.4 502.0h2.2V503.9h-2.2zM1790.9 499.3h2.2V502.0h-2.2zM1792.4 495.9h2.2V500.2h-2.2zM1793.9 491.8h2.2V495.9h-2.2zM1820.9 486.3h2.2V488.8h-2.2zM1822.4 483.3h2.2V486.3h-2.2zM1858.4 482.1h2.2V485.2h-2.2zM1865.9 478.5h2.2V481.2h-2.2zM1886.9 481.7h2.2V486.3h-2.2zM1892.9 477.0h2.2V481.8h-2.2z"/><path fill="#0a80ff" d="M145.4 521.3h2.2V543.1h-2.2zM148.4 533.2h2.2V537.8h-2.2zM151.4 541.6h2.2V545.0h-2.2zM176.9 544.5h2.2V550.6h-2.2zM179.9 551.7h2.2V556.5h-2.2zM181.4 556.4h2.2V560.4h-2.2zM199.4 543.4h2.2V546.2h-2.2zM200.9 545.2h2.2V547.1h-2.2zM205.4 548.7h2.2V551.6h-2.2zM206.9 551.6h2.2V554.3h-2.2zM209.9 554.4h2.2V556.9h-2.2zM211.4 556.9h2.2V558.8h-2.2zM245.9 567.2h2.2V571.4h-2.2zM259.4 577.6h2.2V583.8h-2.2zM260.9 581.1h2.2V583.5h-2.2zM281.9 571.4h2.2V578.6h-2.2zM283.4 576.2h2.2V579.4h-2.2zM284.9 579.4h2.2V581.2h-2.2zM289.4 571.6h2.2V574.8h-2.2zM290.9 571.9h2.2V576.8h-2.2zM292.4 575.4h2.2V581.2h-2.2zM328.4 547.1h2.2V551.1h-2.2zM340.4 552.4h2.2V557.1h-2.2zM341.9 551.6h2.2V557.6h-2.2zM343.4 555.0h2.2V560.9h-2.2zM365.9 546.6h2.2V548.7h-2.2zM385.4 543.6h2.2V545.7h-2.2zM386.9 544.3h2.2V550.5h-2.2zM401.9 550.8h2.2V555.2h-2.2zM464.9 547.8h2.2V549.9h-2.2zM466.4 549.9h2.2V554.7h-2.2zM467.9 554.7h2.2V556.5h-2.2zM481.4 563.3h2.2V565.6h-2.2zM506.9 539.2h2.2V541.9h-2.2zM508.4 541.9h2.2V544.9h-2.2zM523.4 542.9h2.2V547.4h-2.2zM535.4 547.9h2.2V550.8h-2.2zM547.4 551.8h2.2V555.7h-2.2zM548.9 553.1h2.2V559.0h-2.2zM550.4 556.3h2.2V562.2h-2.2zM551.9 561.3h2.2V563.2h-2.2zM557.9 556.1h2.2V559.3h-2.2zM559.4 559.3h2.2V562.4h-2.2zM578.9 565.2h2.2V570.0h-2.2zM595.4 569.0h2.2V570.9h-2.2zM598.4 568.6h2.2V573.6h-2.2zM604.4 573.6h2.2V576.3h-2.2zM605.9 573.6h2.2V579.9h-2.2zM623.9 563.1h2.2V568.0h-2.2zM647.9 552.4h2.2V555.2h-2.2zM662.9 562.1h2.2V566.2h-2.2zM688.4 547.6h2.2V551.9h-2.2zM689.9 547.9h2.2V551.2h-2.2zM730.4 527.3h2.2V536.4h-2.2zM755.9 536.4h2.2V542.8h-2.2zM757.4 542.8h2.2V547.2h-2.2zM758.9 547.2h2.2V551.9h-2.2zM769.4 553.7h2.2V556.1h-2.2zM770.9 556.1h2.2V559.2h-2.2zM779.9 546.2h2.2V552.8h-2.2zM782.9 553.0h2.2V557.6h-2.2zM784.4 557.3h2.2V565.7h-2.2zM787.4 565.6h2.2V569.0h-2.2zM788.9 568.1h2.2V572.5h-2.2zM790.4 571.2h2.2V573.5h-2.2zM793.4 575.1h2.2V581.1h-2.2zM797.9 583.0h2.2V585.8h-2.2zM799.4 585.8h2.2V592.6h-2.2zM812.9 581.2h2.2V583.3h-2.2zM818.9 586.2h2.2V588.3h-2.2zM821.9 590.2h2.2V593.4h-2.2zM824.9 596.7h2.2V600.6h-2.2zM826.4 599.3h2.2V604.8h-2.2zM827.9 598.8h2.2V604.6h-2.2zM829.4 603.8h2.2V607.5h-2.2zM830.9 607.5h2.2V610.7h-2.2zM832.4 610.7h2.2V614.2h-2.2zM833.9 613.6h2.2V621.0h-2.2zM835.4 615.4h2.2V623.2h-2.2zM847.4 604.3h2.2V606.0h-2.2zM887.9 590.8h2.2V593.5h-2.2zM911.9 601.4h2.2V605.5h-2.2zM928.4 609.8h2.2V613.2h-2.2zM929.9 612.6h2.2V618.1h-2.2zM931.4 618.1h2.2V623.1h-2.2zM932.9 622.6h2.2V624.7h-2.2zM934.4 621.5h2.2V629.1h-2.2zM935.9 626.4h2.2V632.4h-2.2zM944.9 627.5h2.2V630.6h-2.2zM988.4 592.3h2.2V597.0h-2.2zM989.9 594.3h2.2V599.0h-2.2zM1013.9 580.9h2.2V587.8h-2.2zM1015.4 585.4h2.2V590.1h-2.2zM1016.9 589.7h2.2V593.8h-2.2zM1018.4 593.8h2.2V599.2h-2.2zM1019.9 594.3h2.2V602.7h-2.2zM1051.4 593.3h2.2V596.7h-2.2zM1055.9 599.5h2.2V603.1h-2.2zM1057.4 600.4h2.2V606.8h-2.2zM1099.4 593.3h2.2V595.6h-2.2zM1124.9 586.0h2.2V588.6h-2.2zM1133.9 587.2h2.2V592.9h-2.2zM1154.9 573.1h2.2V577.3h-2.2zM1156.4 577.3h2.2V581.4h-2.2zM1157.9 581.4h2.2V585.7h-2.2zM1172.9 564.5h2.2V567.0h-2.2zM1175.9 565.1h2.2V572.3h-2.2zM1178.9 570.2h2.2V572.3h-2.2zM1180.4 572.3h2.2V575.2h-2.2zM1181.9 574.3h2.2V579.8h-2.2zM1183.4 579.0h2.2V586.5h-2.2zM1184.9 583.3h2.2V589.5h-2.2zM1193.9 587.6h2.2V589.9h-2.2zM1240.4 559.6h2.2V562.0h-2.2zM1241.9 562.0h2.2V565.0h-2.2zM1243.4 565.0h2.2V568.6h-2.2zM1246.4 568.4h2.2V570.9h-2.2zM1249.4 572.4h2.2V576.0h-2.2zM1289.9 572.5h2.2V575.9h-2.2zM1319.9 526.8h2.2V531.7h-2.2zM1324.4 533.0h2.2V540.8h-2.2zM1325.9 538.0h2.2V542.8h-2.2zM1333.4 546.2h2.2V549.2h-2.2zM1334.9 549.2h2.2V555.1h-2.2zM1357.4 511.5h2.2V517.0h-2.2zM1358.9 515.0h2.2V519.2h-2.2zM1360.4 517.6h2.2V526.3h-2.2zM1387.4 506.3h2.2V512.1h-2.2zM1388.9 511.6h2.2V516.9h-2.2zM1390.4 516.4h2.2V524.9h-2.2zM1393.4 523.6h2.2V528.9h-2.2zM1396.4 527.4h2.2V530.4h-2.2zM1397.9 530.4h2.2V532.7h-2.2zM1399.4 532.7h2.2V538.7h-2.2zM1417.4 520.9h2.2V525.0h-2.2zM1421.9 526.6h2.2V533.9h-2.2zM1424.9 537.2h2.2V544.7h-2.2zM1426.4 542.0h2.2V546.9h-2.2zM1436.9 554.0h2.2V560.1h-2.2zM1447.4 564.0h2.2V567.3h-2.2zM1448.9 567.3h2.2V571.9h-2.2zM1468.4 553.4h2.2V556.0h-2.2zM1474.4 559.1h2.2V561.1h-2.2zM1477.4 563.8h2.2V566.4h-2.2zM1496.9 546.7h2.2V551.1h-2.2zM1498.4 551.1h2.2V558.4h-2.2zM1499.9 555.6h2.2V559.1h-2.2zM1502.9 560.5h2.2V562.5h-2.2zM1513.4 558.1h2.2V560.1h-2.2zM1570.4 549.4h2.2V553.9h-2.2zM1571.9 548.4h2.2V555.3h-2.2zM1582.4 564.8h2.2V566.5h-2.2zM1597.4 538.7h2.2V540.9h-2.2zM1600.4 541.3h2.2V546.3h-2.2zM1601.9 546.3h2.2V549.3h-2.2zM1603.4 549.3h2.2V551.6h-2.2zM1613.9 557.5h2.2V562.5h-2.2zM1615.4 557.4h2.2V562.1h-2.2zM1643.9 526.3h2.2V531.6h-2.2zM1652.9 533.8h2.2V538.7h-2.2zM1657.4 538.9h2.2V541.9h-2.2zM1693.4 518.3h2.2V521.8h-2.2zM1742.9 504.4h2.2V511.3h-2.2zM1744.4 511.3h2.2V519.4h-2.2zM1745.9 516.8h2.2V521.8h-2.2zM1876.4 474.0h2.2V477.0h-2.2zM1880.9 478.7h2.2V482.0h-2.2z"/><path fill="#f4f088" d="M154.4 545.8h2.6V547.4h-2.6zM155.9 545.2h2.6V546.8h-2.6zM157.4 544.7h2.6V546.3h-2.6zM158.9 544.3h2.6V545.9h-2.6zM160.4 543.1h2.6V544.7h-2.6zM161.9 542.6h2.6V544.2h-2.6zM163.4 542.1h2.6V543.7h-2.6zM166.4 540.7h2.6V542.3h-2.6zM169.4 539.8h2.6V541.4h-2.6zM173.9 542.4h2.6V544.0h-2.6zM178.4 550.4h2.6V552.0h-2.6zM182.9 558.6h2.6V560.2h-2.6zM184.4 558.6h2.6V560.2h-2.6zM190.4 548.7h2.6V550.3h-2.6zM191.9 547.4h2.6V549.0h-2.6zM193.4 546.5h2.6V548.1h-2.6zM194.9 545.5h2.6V547.1h-2.6zM196.4 544.0h2.6V545.6h-2.6zM197.9 542.9h2.6V544.5h-2.6zM202.4 547.1h2.6V548.7h-2.6zM203.9 548.3h2.6V549.9h-2.6zM208.4 553.4h2.6V555.0h-2.6zM212.9 558.3h2.6V559.9h-2.6zM214.4 559.4h2.6V561.0h-2.6zM215.9 561.0h2.6V562.6h-2.6zM217.4 562.6h2.6V564.2h-2.6zM220.4 564.0h2.6V565.6h-2.6zM221.9 565.1h2.6V566.7h-2.6zM223.4 565.7h2.6V567.3h-2.6zM224.9 566.7h2.6V568.3h-2.6zM226.4 567.9h2.6V569.5h-2.6zM230.9 568.7h2.6V570.3h-2.6zM235.4 571.7h2.6V573.3h-2.6zM238.4 573.6h2.6V575.2h-2.6zM244.4 567.3h2.6V568.9h-2.6zM247.4 570.9h2.6V572.5h-2.6zM250.4 573.1h2.6V574.7h-2.6zM251.9 573.0h2.6V574.6h-2.6zM253.4 572.9h2.6V574.5h-2.6zM254.9 572.2h2.6V573.8h-2.6zM263.9 583.8h2.6V585.4h-2.6zM268.4 573.0h2.6V574.6h-2.6zM272.9 567.8h2.6V569.4h-2.6zM274.4 568.0h2.6V569.6h-2.6zM275.9 569.0h2.6V570.6h-2.6zM277.4 570.2h2.6V571.8h-2.6zM278.9 570.9h2.6V572.5h-2.6zM280.4 571.4h2.6V573.0h-2.6zM295.4 579.7h2.6V581.3h-2.6zM299.9 574.1h2.6V575.7h-2.6zM304.4 568.4h2.6V570.0h-2.6zM305.9 567.8h2.6V569.4h-2.6zM307.4 567.2h2.6V568.8h-2.6zM308.9 566.1h2.6V567.7h-2.6zM310.4 564.9h2.6V566.5h-2.6zM311.9 564.2h2.6V565.8h-2.6zM316.4 558.3h2.6V559.9h-2.6zM319.4 556.9h2.6V558.5h-2.6zM320.9 556.7h2.6V558.3h-2.6zM322.4 557.0h2.6V558.6h-2.6zM323.9 557.7h2.6V559.3h-2.6zM329.9 548.7h2.6V550.3h-2.6zM331.4 548.9h2.6V550.5h-2.6zM332.9 549.0h2.6V550.6h-2.6zM334.4 549.1h2.6V550.7h-2.6zM335.9 549.7h2.6V551.3h-2.6zM338.9 551.8h2.6V553.4h-2.6zM344.9 560.4h2.6V562.0h-2.6zM353.9 551.2h2.6V552.8h-2.6zM358.4 549.9h2.6V551.5h-2.6zM362.9 546.8h2.6V548.4h-2.6zM364.4 546.2h2.6V547.8h-2.6zM367.4 548.7h2.6V550.3h-2.6zM368.9 550.4h2.6V552.0h-2.6zM373.4 549.9h2.6V551.5h-2.6zM377.9 546.7h2.6V548.3h-2.6zM379.4 545.8h2.6V547.4h-2.6zM380.9 545.6h2.6V547.2h-2.6zM383.9 543.3h2.6V544.9h-2.6zM389.9 548.5h2.6V550.1h-2.6zM392.9 547.9h2.6V549.5h-2.6zM395.9 546.4h2.6V548.0h-2.6zM397.4 546.5h2.6V548.1h-2.6zM404.9 555.7h2.6V557.3h-2.6zM406.4 556.2h2.6V557.8h-2.6zM407.9 556.3h2.6V557.9h-2.6zM410.9 556.9h2.6V558.5h-2.6zM413.9 558.3h2.6V559.9h-2.6zM415.4 558.3h2.6V559.9h-2.6zM418.4 558.1h2.6V559.7h-2.6zM419.9 558.4h2.6V560.0h-2.6zM421.4 558.1h2.6V559.7h-2.6zM422.9 557.7h2.6V559.3h-2.6zM427.4 555.4h2.6V557.0h-2.6zM428.9 555.3h2.6V556.9h-2.6zM431.9 552.7h2.6V554.3h-2.6zM433.4 552.7h2.6V554.3h-2.6zM434.9 552.1h2.6V553.7h-2.6zM436.4 552.2h2.6V553.8h-2.6zM437.9 552.5h2.6V554.1h-2.6zM439.4 552.2h2.6V553.8h-2.6zM440.9 552.1h2.6V553.7h-2.6zM442.4 551.8h2.6V553.4h-2.6zM443.9 551.9h2.6V553.5h-2.6zM446.9 551.2h2.6V552.8h-2.6zM451.4 550.2h2.6V551.8h-2.6zM454.4 548.7h2.6V550.3h-2.6zM457.4 547.7h2.6V549.3h-2.6zM458.9 547.2h2.6V548.8h-2.6zM463.4 546.9h2.6V548.5h-2.6zM470.9 555.7h2.6V557.3h-2.6zM472.4 555.4h2.6V557.0h-2.6zM473.9 555.3h2.6V556.9h-2.6zM475.4 555.8h2.6V557.4h-2.6zM478.4 560.0h2.6V561.6h-2.6zM482.9 564.1h2.6V565.7h-2.6zM484.4 564.1h2.6V565.7h-2.6zM485.9 563.9h2.6V565.5h-2.6zM499.4 538.9h2.6V540.5h-2.6zM502.4 536.5h2.6V538.1h-2.6zM503.9 535.9h2.6V537.5h-2.6zM509.9 544.6h2.6V546.2h-2.6zM511.4 545.0h2.6V546.6h-2.6zM512.9 544.4h2.6V546.0h-2.6zM517.4 543.2h2.6V544.8h-2.6zM520.4 542.3h2.6V543.9h-2.6zM521.9 543.1h2.6V544.7h-2.6zM524.9 546.2h2.6V547.8h-2.6zM526.4 547.3h2.6V548.9h-2.6zM527.9 547.0h2.6V548.6h-2.6zM529.4 546.0h2.6V547.6h-2.6zM530.9 546.6h2.6V548.2h-2.6zM533.9 546.3h2.6V547.9h-2.6zM536.9 549.8h2.6V551.4h-2.6zM538.4 550.9h2.6V552.5h-2.6zM539.9 551.4h2.6V553.0h-2.6zM541.4 551.4h2.6V553.0h-2.6zM542.9 551.4h2.6V553.0h-2.6zM544.4 551.5h2.6V553.1h-2.6zM545.9 551.3h2.6V552.9h-2.6zM562.4 564.1h2.6V565.7h-2.6zM565.4 565.2h2.6V566.8h-2.6zM566.9 565.9h2.6V567.5h-2.6zM568.4 566.4h2.6V568.0h-2.6zM569.9 565.9h2.6V567.5h-2.6zM571.4 565.1h2.6V566.7h-2.6zM575.9 564.1h2.6V565.7h-2.6zM577.4 564.5h2.6V566.1h-2.6zM581.9 567.2h2.6V568.8h-2.6zM584.9 564.1h2.6V565.7h-2.6zM586.4 564.1h2.6V565.7h-2.6zM587.9 564.9h2.6V566.5h-2.6zM589.4 565.5h2.6V567.1h-2.6zM592.4 567.6h2.6V569.2h-2.6zM593.9 567.9h2.6V569.5h-2.6zM599.9 573.0h2.6V574.6h-2.6zM602.9 573.0h2.6V574.6h-2.6zM607.4 577.5h2.6V579.1h-2.6zM614.9 565.0h2.6V566.6h-2.6zM617.9 562.5h2.6V564.1h-2.6zM619.4 562.9h2.6V564.5h-2.6zM622.4 562.5h2.6V564.1h-2.6zM625.4 564.7h2.6V566.3h-2.6zM626.9 565.0h2.6V566.6h-2.6zM629.9 565.1h2.6V566.7h-2.6zM631.4 564.9h2.6V566.5h-2.6zM634.4 562.7h2.6V564.3h-2.6zM640.4 553.9h2.6V555.5h-2.6zM641.9 554.1h2.6V555.7h-2.6zM644.9 552.0h2.6V553.6h-2.6zM646.4 551.6h2.6V553.2h-2.6zM649.4 553.8h2.6V555.4h-2.6zM650.9 554.5h2.6V556.1h-2.6zM652.4 555.4h2.6V557.0h-2.6zM653.9 556.5h2.6V558.1h-2.6zM656.9 557.5h2.6V559.1h-2.6zM658.4 558.3h2.6V559.9h-2.6zM659.9 559.0h2.6V560.6h-2.6zM661.4 560.4h2.6V562.0h-2.6zM668.9 555.4h2.6V557.0h-2.6zM670.4 554.8h2.6V556.4h-2.6zM673.4 554.5h2.6V556.1h-2.6zM674.9 554.9h2.6V556.5h-2.6zM676.4 555.2h2.6V556.8h-2.6zM677.9 555.3h2.6V556.9h-2.6zM679.4 555.0h2.6V556.6h-2.6zM680.9 554.7h2.6V556.3h-2.6zM691.4 550.7h2.6V552.3h-2.6zM694.4 551.8h2.6V553.4h-2.6zM695.9 550.9h2.6V552.5h-2.6zM697.4 549.9h2.6V551.5h-2.6zM698.9 550.2h2.6V551.8h-2.6zM701.9 549.2h2.6V550.8h-2.6zM703.4 548.2h2.6V549.8h-2.6zM706.4 547.3h2.6V548.9h-2.6zM707.9 546.4h2.6V548.0h-2.6zM709.4 546.3h2.6V547.9h-2.6zM710.9 546.3h2.6V547.9h-2.6zM712.4 545.7h2.6V547.3h-2.6zM713.9 545.6h2.6V547.2h-2.6zM715.4 546.3h2.6V547.9h-2.6zM721.4 532.4h2.6V534.0h-2.6zM724.4 529.7h2.6V531.3h-2.6zM728.9 525.9h2.6V527.5h-2.6zM731.9 536.2h2.6V537.8h-2.6zM733.4 537.6h2.6V539.2h-2.6zM734.9 538.9h2.6V540.5h-2.6zM736.4 539.4h2.6V541.0h-2.6zM737.9 539.6h2.6V541.2h-2.6zM739.4 539.9h2.6V541.5h-2.6zM740.9 540.2h2.6V541.8h-2.6zM745.4 537.3h2.6V538.9h-2.6zM748.4 535.2h2.6V536.8h-2.6zM749.9 534.6h2.6V536.2h-2.6zM751.4 534.7h2.6V536.3h-2.6zM752.9 535.8h2.6V537.4h-2.6zM754.4 536.1h2.6V537.7h-2.6zM760.4 551.3h2.6V552.9h-2.6zM761.9 551.8h2.6V553.4h-2.6zM763.4 552.1h2.6V553.7h-2.6zM764.9 552.0h2.6V553.6h-2.6zM767.9 552.4h2.6V554.0h-2.6zM781.4 552.1h2.6V553.7h-2.6zM791.9 573.5h2.6V575.1h-2.6zM800.9 589.2h2.6V590.8h-2.6zM802.4 588.9h2.6V590.5h-2.6zM803.9 588.6h2.6V590.2h-2.6zM805.4 588.1h2.6V589.7h-2.6zM806.9 586.8h2.6V588.4h-2.6zM811.4 580.2h2.6V581.8h-2.6zM814.4 583.1h2.6V584.7h-2.6zM815.9 584.3h2.6V585.9h-2.6zM817.4 585.1h2.6V586.7h-2.6zM836.9 622.4h2.6V624.0h-2.6zM841.4 607.6h2.6V609.2h-2.6zM842.9 606.5h2.6V608.1h-2.6zM848.9 606.1h2.6V607.7h-2.6zM853.4 608.9h2.6V610.5h-2.6zM854.9 610.3h2.6V611.9h-2.6zM862.4 604.5h2.6V606.1h-2.6zM865.4 604.2h2.6V605.8h-2.6zM874.4 590.7h2.6V592.3h-2.6zM875.9 591.6h2.6V593.2h-2.6zM877.4 592.5h2.6V594.1h-2.6zM878.9 593.6h2.6V595.2h-2.6zM880.4 594.2h2.6V595.8h-2.6zM881.9 593.4h2.6V595.0h-2.6zM883.4 592.4h2.6V594.0h-2.6zM886.4 590.9h2.6V592.5h-2.6zM889.4 593.2h2.6V594.8h-2.6zM890.9 594.1h2.6V595.7h-2.6zM892.4 594.8h2.6V596.4h-2.6zM893.9 595.9h2.6V597.5h-2.6zM895.4 597.2h2.6V598.8h-2.6zM896.9 598.6h2.6V600.2h-2.6zM898.4 599.4h2.6V601.0h-2.6zM899.9 599.6h2.6V601.2h-2.6zM901.4 599.8h2.6V601.4h-2.6zM902.9 599.9h2.6V601.5h-2.6zM904.4 599.8h2.6V601.4h-2.6zM905.9 600.2h2.6V601.8h-2.6zM907.4 600.4h2.6V602.0h-2.6zM913.4 602.8h2.6V604.4h-2.6zM916.4 601.8h2.6V603.4h-2.6zM919.4 602.4h2.6V604.0h-2.6zM920.9 603.2h2.6V604.8h-2.6zM922.4 604.0h2.6V605.6h-2.6zM923.9 604.6h2.6V606.2h-2.6zM937.4 631.6h2.6V633.2h-2.6zM940.4 628.9h2.6V630.5h-2.6zM943.4 626.4h2.6V628.0h-2.6zM946.4 630.1h2.6V631.7h-2.6zM952.4 616.0h2.6V617.6h-2.6zM956.9 610.6h2.6V612.2h-2.6zM959.9 609.8h2.6V611.4h-2.6zM961.4 609.3h2.6V610.9h-2.6zM962.9 609.2h2.6V610.8h-2.6zM967.4 609.2h2.6V610.8h-2.6zM968.9 610.0h2.6V611.6h-2.6zM970.4 610.1h2.6V611.7h-2.6zM971.9 609.6h2.6V611.2h-2.6zM974.9 609.5h2.6V611.1h-2.6zM982.4 603.5h2.6V605.1h-2.6zM991.4 597.0h2.6V598.6h-2.6zM998.9 586.0h2.6V587.6h-2.6zM1000.4 587.0h2.6V588.6h-2.6zM1001.9 588.1h2.6V589.7h-2.6zM1004.9 589.9h2.6V591.5h-2.6zM1006.4 589.7h2.6V591.3h-2.6zM1007.9 589.0h2.6V590.6h-2.6zM1009.4 588.3h2.6V589.9h-2.6zM1012.4 580.9h2.6V582.5h-2.6zM1022.9 599.1h2.6V600.7h-2.6zM1024.4 599.9h2.6V601.5h-2.6zM1025.9 600.6h2.6V602.2h-2.6zM1027.4 601.5h2.6V603.1h-2.6zM1030.4 601.0h2.6V602.6h-2.6zM1031.9 602.0h2.6V603.6h-2.6zM1034.9 603.6h2.6V605.2h-2.6zM1036.4 604.6h2.6V606.2h-2.6zM1037.9 605.5h2.6V607.1h-2.6zM1039.4 605.5h2.6V607.1h-2.6zM1040.9 604.9h2.6V606.5h-2.6zM1042.4 604.2h2.6V605.8h-2.6zM1043.9 604.1h2.6V605.7h-2.6zM1049.9 591.9h2.6V593.5h-2.6zM1058.9 604.8h2.6V606.4h-2.6zM1060.4 603.6h2.6V605.2h-2.6zM1061.9 603.4h2.6V605.0h-2.6zM1063.4 603.8h2.6V605.4h-2.6zM1064.9 603.6h2.6V605.2h-2.6zM1066.4 603.7h2.6V605.3h-2.6zM1067.9 603.4h2.6V605.0h-2.6zM1070.9 603.4h2.6V605.0h-2.6zM1073.9 602.8h2.6V604.4h-2.6zM1075.4 603.4h2.6V605.0h-2.6zM1078.4 605.5h2.6V607.1h-2.6zM1081.4 605.6h2.6V607.2h-2.6zM1084.4 602.5h2.6V604.1h-2.6zM1090.4 594.7h2.6V596.3h-2.6zM1093.4 593.1h2.6V594.7h-2.6zM1094.9 592.9h2.6V594.5h-2.6zM1096.4 592.9h2.6V594.5h-2.6zM1097.9 592.5h2.6V594.1h-2.6zM1102.4 596.1h2.6V597.7h-2.6zM1103.9 595.9h2.6V597.5h-2.6zM1105.4 595.9h2.6V597.5h-2.6zM1108.4 595.3h2.6V596.9h-2.6zM1109.9 595.3h2.6V596.9h-2.6zM1112.9 594.4h2.6V596.0h-2.6zM1114.4 593.8h2.6V595.4h-2.6zM1120.4 585.9h2.6V587.5h-2.6zM1121.9 586.4h2.6V588.0h-2.6zM1126.4 588.2h2.6V589.8h-2.6zM1127.9 588.7h2.6V590.3h-2.6zM1129.4 588.7h2.6V590.3h-2.6zM1130.9 588.6h2.6V590.2h-2.6zM1132.4 588.7h2.6V590.3h-2.6zM1135.4 590.3h2.6V591.9h-2.6zM1136.9 590.9h2.6V592.5h-2.6zM1138.4 591.1h2.6V592.7h-2.6zM1139.9 590.3h2.6V591.9h-2.6zM1141.4 589.5h2.6V591.1h-2.6zM1145.9 585.4h2.6V587.0h-2.6zM1147.4 584.9h2.6V586.5h-2.6zM1159.4 584.9h2.6V586.5h-2.6zM1160.9 585.7h2.6V587.3h-2.6zM1162.4 586.4h2.6V588.0h-2.6zM1174.4 566.1h2.6V567.7h-2.6zM1177.4 569.2h2.6V570.8h-2.6zM1187.9 585.6h2.6V587.2h-2.6zM1190.9 585.0h2.6V586.6h-2.6zM1195.4 589.7h2.6V591.3h-2.6zM1196.9 589.6h2.6V591.2h-2.6zM1198.4 588.4h2.6V590.0h-2.6zM1201.4 585.7h2.6V587.3h-2.6zM1202.9 585.5h2.6V587.1h-2.6zM1207.4 583.1h2.6V584.7h-2.6zM1211.9 576.2h2.6V577.8h-2.6zM1214.9 571.1h2.6V572.7h-2.6zM1222.4 566.9h2.6V568.5h-2.6zM1231.4 558.0h2.6V559.6h-2.6zM1232.9 557.0h2.6V558.6h-2.6zM1234.4 556.5h2.6V558.1h-2.6zM1235.9 556.5h2.6V558.1h-2.6zM1237.4 557.1h2.6V558.7h-2.6zM1238.9 558.2h2.6V559.8h-2.6zM1247.9 570.8h2.6V572.4h-2.6zM1252.4 572.0h2.6V573.6h-2.6zM1253.9 571.6h2.6V573.2h-2.6zM1256.9 571.9h2.6V573.5h-2.6zM1258.4 572.4h2.6V574.0h-2.6zM1259.9 572.9h2.6V574.5h-2.6zM1261.4 572.8h2.6V574.4h-2.6zM1262.9 572.5h2.6V574.1h-2.6zM1264.4 572.0h2.6V573.6h-2.6zM1265.9 571.8h2.6V573.4h-2.6zM1267.4 571.3h2.6V572.9h-2.6zM1268.9 571.2h2.6V572.8h-2.6zM1270.4 571.0h2.6V572.6h-2.6zM1273.4 571.7h2.6V573.3h-2.6zM1274.9 571.8h2.6V573.4h-2.6zM1276.4 571.9h2.6V573.5h-2.6zM1277.9 572.6h2.6V574.2h-2.6zM1280.9 571.3h2.6V572.9h-2.6zM1282.4 571.9h2.6V573.5h-2.6zM1283.9 572.5h2.6V574.1h-2.6zM1285.4 572.4h2.6V574.0h-2.6zM1286.9 572.0h2.6V573.6h-2.6zM1288.4 571.9h2.6V573.5h-2.6zM1294.4 573.2h2.6V574.8h-2.6zM1298.9 560.1h2.6V561.7h-2.6zM1300.4 559.1h2.6V560.7h-2.6zM1304.9 555.9h2.6V557.5h-2.6zM1307.9 551.8h2.6V553.4h-2.6zM1309.4 550.5h2.6V552.1h-2.6zM1310.9 549.7h2.6V551.3h-2.6zM1318.4 528.5h2.6V530.1h-2.6zM1321.4 531.6h2.6V533.2h-2.6zM1322.9 532.6h2.6V534.2h-2.6zM1327.4 542.8h2.6V544.4h-2.6zM1328.9 543.4h2.6V545.0h-2.6zM1330.4 543.5h2.6V545.1h-2.6zM1336.4 553.5h2.6V555.1h-2.6zM1340.9 546.1h2.6V547.7h-2.6zM1352.9 511.6h2.6V513.2h-2.6zM1354.4 510.7h2.6V512.3h-2.6zM1355.9 510.6h2.6V512.2h-2.6zM1361.9 522.3h2.6V523.9h-2.6zM1370.9 512.4h2.6V514.0h-2.6zM1375.4 516.7h2.6V518.3h-2.6zM1378.4 513.9h2.6V515.5h-2.6zM1381.4 509.8h2.6V511.4h-2.6zM1382.9 508.5h2.6V510.1h-2.6zM1391.9 524.9h2.6V526.5h-2.6zM1405.4 525.4h2.6V527.0h-2.6zM1409.9 521.4h2.6V523.0h-2.6zM1411.4 521.4h2.6V523.0h-2.6zM1412.9 522.0h2.6V523.6h-2.6zM1414.4 522.4h2.6V524.0h-2.6zM1415.9 522.3h2.6V523.9h-2.6zM1418.9 524.9h2.6V526.5h-2.6zM1430.9 548.6h2.6V550.2h-2.6zM1433.9 550.6h2.6V552.2h-2.6zM1441.4 563.1h2.6V564.7h-2.6zM1442.9 563.1h2.6V564.7h-2.6zM1444.4 562.5h2.6V564.1h-2.6zM1460.9 551.3h2.6V552.9h-2.6zM1465.4 551.7h2.6V553.3h-2.6zM1466.9 552.4h2.6V554.0h-2.6zM1471.4 556.4h2.6V558.0h-2.6zM1484.9 556.1h2.6V557.7h-2.6zM1486.4 556.4h2.6V558.0h-2.6zM1490.9 557.1h2.6V558.7h-2.6zM1504.4 561.1h2.6V562.7h-2.6zM1510.4 555.7h2.6V557.3h-2.6zM1511.9 556.8h2.6V558.4h-2.6zM1516.4 561.6h2.6V563.2h-2.6zM1519.4 564.7h2.6V566.3h-2.6zM1523.9 563.8h2.6V565.4h-2.6zM1525.4 564.0h2.6V565.6h-2.6zM1532.9 554.8h2.6V556.4h-2.6zM1537.4 551.3h2.6V552.9h-2.6zM1538.9 550.1h2.6V551.7h-2.6zM1540.4 548.7h2.6V550.3h-2.6zM1541.9 547.9h2.6V549.5h-2.6zM1543.4 548.1h2.6V549.7h-2.6zM1547.9 551.0h2.6V552.6h-2.6zM1549.4 551.6h2.6V553.2h-2.6zM1555.4 549.8h2.6V551.4h-2.6zM1556.9 548.9h2.6V550.5h-2.6zM1558.4 547.9h2.6V549.5h-2.6zM1559.9 547.3h2.6V548.9h-2.6zM1561.4 547.0h2.6V548.6h-2.6zM1562.9 546.8h2.6V548.4h-2.6zM1565.9 546.9h2.6V548.5h-2.6zM1567.4 547.0h2.6V548.6h-2.6zM1568.9 548.0h2.6V549.6h-2.6zM1576.4 557.1h2.6V558.7h-2.6zM1579.4 559.8h2.6V561.4h-2.6zM1606.4 550.6h2.6V552.2h-2.6zM1609.4 551.5h2.6V553.1h-2.6zM1624.4 537.8h2.6V539.4h-2.6zM1627.4 537.2h2.6V538.8h-2.6zM1628.9 536.7h2.6V538.3h-2.6zM1631.9 536.6h2.6V538.2h-2.6zM1634.9 533.3h2.6V534.9h-2.6zM1636.4 532.1h2.6V533.7h-2.6zM1640.9 530.3h2.6V531.9h-2.6zM1642.4 529.1h2.6V530.7h-2.6zM1645.4 530.0h2.6V531.6h-2.6zM1649.9 532.1h2.6V533.7h-2.6zM1651.4 532.9h2.6V534.5h-2.6zM1654.4 536.6h2.6V538.2h-2.6zM1655.9 537.6h2.6V539.2h-2.6zM1669.4 522.4h2.6V524.0h-2.6zM1670.9 522.1h2.6V523.7h-2.6zM1672.4 522.2h2.6V523.8h-2.6zM1675.4 521.7h2.6V523.3h-2.6zM1676.9 521.5h2.6V523.1h-2.6zM1678.4 520.3h2.6V521.9h-2.6zM1681.4 519.8h2.6V521.4h-2.6zM1685.9 518.6h2.6V520.2h-2.6zM1687.4 517.9h2.6V519.5h-2.6zM1688.9 516.7h2.6V518.3h-2.6zM1694.9 521.2h2.6V522.8h-2.6zM1696.4 522.1h2.6V523.7h-2.6zM1706.9 516.8h2.6V518.4h-2.6zM1708.4 516.4h2.6V518.0h-2.6zM1709.9 516.2h2.6V517.8h-2.6zM1712.9 515.6h2.6V517.2h-2.6zM1717.4 513.6h2.6V515.2h-2.6zM1723.4 510.1h2.6V511.7h-2.6zM1730.9 503.0h2.6V504.6h-2.6zM1732.4 503.4h2.6V505.0h-2.6zM1733.9 503.2h2.6V504.8h-2.6zM1735.4 502.7h2.6V504.3h-2.6zM1736.9 502.5h2.6V504.1h-2.6zM1741.4 503.3h2.6V504.9h-2.6zM1748.9 518.6h2.6V520.2h-2.6zM1751.9 519.5h2.6V521.1h-2.6zM1753.4 520.2h2.6V521.8h-2.6zM1756.4 520.0h2.6V521.6h-2.6zM1757.9 519.7h2.6V521.3h-2.6zM1760.9 515.2h2.6V516.8h-2.6zM1768.4 507.9h2.6V509.5h-2.6zM1772.9 505.1h2.6V506.7h-2.6zM1777.4 502.4h2.6V504.0h-2.6zM1780.4 504.7h2.6V506.3h-2.6zM1784.9 507.2h2.6V508.8h-2.6zM1796.9 493.6h2.6V495.2h-2.6zM1798.4 494.3h2.6V495.9h-2.6zM1802.9 494.0h2.6V495.6h-2.6zM1807.4 494.2h2.6V495.8h-2.6zM1810.4 493.0h2.6V494.6h-2.6zM1813.4 492.0h2.6V493.6h-2.6zM1814.9 491.6h2.6V493.2h-2.6zM1819.4 488.5h2.6V490.1h-2.6zM1826.9 479.4h2.6V481.0h-2.6zM1828.4 478.1h2.6V479.7h-2.6zM1829.9 477.0h2.6V478.6h-2.6zM1831.4 475.9h2.6V477.5h-2.6zM1832.9 475.8h2.6V477.4h-2.6zM1837.4 478.0h2.6V479.6h-2.6zM1841.9 481.4h2.6V483.0h-2.6zM1843.4 482.0h2.6V483.6h-2.6zM1844.9 482.3h2.6V483.9h-2.6zM1849.4 483.3h2.6V484.9h-2.6zM1852.4 483.2h2.6V484.8h-2.6zM1853.9 483.0h2.6V484.6h-2.6zM1861.4 480.9h2.6V482.5h-2.6zM1868.9 477.2h2.6V478.8h-2.6zM1870.4 476.8h2.6V478.4h-2.6zM1871.9 476.4h2.6V478.0h-2.6zM1873.4 475.4h2.6V477.0h-2.6zM1874.9 474.5h2.6V476.1h-2.6zM1877.9 477.0h2.6V478.6h-2.6zM1882.4 481.8h2.6V483.4h-2.6zM1883.9 482.4h2.6V484.0h-2.6zM1891.4 478.9h2.6V480.5h-2.6zM1894.4 475.5h2.6V477.1h-2.6zM1895.9 474.1h2.6V475.7h-2.6z"/>
<path d="M13.2 978.9h3V982.5h-3zM14.7 978.9h3V982.6h-3zM16.2 978.9h3V986.3h-3zM17.7 983.3h3V1002.3h-3zM19.2 993.6h3V1003.9h-3zM20.7 988.9h3V996.6h-3zM22.2 987.1h3V991.9h-3zM23.7 983.4h3V990.1h-3zM25.2 981.5h3V988.9h-3zM26.7 985.9h3V991.2h-3zM28.2 988.2h3V993.9h-3zM29.7 990.5h3V998.7h-3zM31.2 995.7h3V1003.7h-3zM32.7 1000.7h3V1011.0h-3zM34.2 1008.0h3V1013.4h-3zM35.7 1010.4h3V1015.7h-3zM37.2 1011.4h3V1016.1h-3zM38.7 1007.9h3V1014.4h-3zM40.2 1006.4h3V1010.9h-3zM41.7 1001.9h3V1013.0h-3zM43.2 999.7h3V1005.9h-3zM44.7 997.5h3V1002.7h-3zM46.2 995.9h3V1000.5h-3zM47.7 993.1h3V998.9h-3zM49.2 993.1h3V998.8h-3zM50.7 995.8h3V1001.2h-3zM52.2 998.2h3V1001.9h-3zM53.7 995.9h3V1002.9h-3zM55.2 988.4h3V998.9h-3zM56.7 979.5h3V991.4h-3zM58.2 976.9h3V985.3h-3zM59.7 972.0h3V979.9h-3zM61.2 970.3h3V975.0h-3zM62.7 971.3h3V978.9h-3zM64.2 975.9h3V984.5h-3zM65.7 981.5h3V985.9h-3zM67.2 981.5h3V985.9h-3zM68.7 979.6h3V984.5h-3zM70.2 978.9h3V982.6h-3zM71.7 978.9h3V986.0h-3zM73.2 983.0h3V987.5h-3zM74.7 984.5h3V991.2h-3zM76.2 988.2h3V993.7h-3zM77.7 982.0h3V993.1h-3zM79.2 977.0h3V985.0h-3zM80.7 973.7h3V980.0h-3zM82.2 970.3h3V976.7h-3zM83.7 970.3h3V975.1h-3zM85.2 972.1h3V977.2h-3zM86.7 971.6h3V979.5h-3zM88.2 966.6h3V974.6h-3zM89.7 965.8h3V969.6h-3zM91.2 962.9h3V968.8h-3zM92.7 962.9h3V967.1h-3zM94.2 960.3h3V967.2h-3zM95.7 954.4h3V963.3h-3zM97.2 946.9h3V957.4h-3zM98.7 950.9h3V956.3h-3zM100.2 953.3h3V958.6h-3zM101.7 955.6h3V959.0h-3zM103.2 956.0h3V963.2h-3zM104.7 960.2h3V965.2h-3zM106.2 962.2h3V967.5h-3zM107.7 964.5h3V968.6h-3zM109.2 965.6h3V970.6h-3zM110.7 967.6h3V974.3h-3zM112.2 968.5h3V974.4h-3zM113.7 968.3h3V974.4h-3zM115.2 967.2h3V971.3h-3zM116.7 967.2h3V974.3h-3zM118.2 970.1h3V977.6h-3zM119.7 974.6h3V979.8h-3zM121.2 965.8h3V979.8h-3zM122.7 955.0h3V968.8h-3zM124.2 955.0h3V966.3h-3zM125.7 963.3h3V972.1h-3zM127.2 966.3h3V975.4h-3zM128.7 966.3h3V969.3h-3zM130.2 965.6h3V969.3h-3zM131.7 963.2h3V968.6h-3zM133.2 965.5h3V971.2h-3zM134.7 968.2h3V974.1h-3zM136.2 970.3h3V979.5h-3zM137.7 976.5h3V982.9h-3zM139.2 979.9h3V986.3h-3zM140.7 982.5h3V998.0h-3zM142.2 995.0h3V1015.9h-3zM143.7 981.6h3V1029.3h-3zM145.2 880.0h3V984.6h-3zM146.7 826.7h3V883.0h-3zM148.2 825.3h3V832.1h-3zM149.7 825.3h3V829.7h-3zM151.2 826.0h3V834.4h-3zM152.7 830.4h3V836.9h-3zM154.2 828.1h3V833.4h-3zM155.7 827.3h3V831.1h-3zM157.2 822.3h3V830.3h-3zM158.7 822.3h3V831.9h-3zM160.2 828.9h3V836.8h-3zM161.7 832.8h3V836.8h-3zM163.2 832.2h3V835.9h-3zM164.7 831.9h3V835.2h-3zM166.2 829.8h3V835.6h-3zM167.7 832.6h3V840.3h-3zM169.2 837.3h3V841.8h-3zM170.7 838.8h3V842.0h-3zM172.2 839.0h3V843.9h-3zM173.7 840.6h3V843.9h-3zM175.2 839.2h3V843.6h-3zM176.7 839.2h3V848.5h-3zM178.2 845.5h3V854.4h-3zM179.7 848.3h3V854.4h-3zM181.2 845.1h3V851.3h-3zM182.7 845.1h3V849.7h-3zM184.2 846.7h3V851.1h-3zM185.7 848.1h3V852.3h-3zM187.2 849.3h3V856.0h-3zM188.7 852.2h3V860.1h-3zM190.2 857.1h3V872.5h-3zM191.7 869.5h3V876.5h-3zM193.2 867.8h3V874.3h-3zM194.7 867.8h3V873.5h-3zM196.2 870.5h3V877.4h-3zM197.7 873.3h3V877.4h-3zM199.2 869.2h3V876.3h-3zM200.7 865.2h3V872.2h-3zM202.2 867.2h3V871.0h-3zM203.7 868.0h3V872.6h-3zM205.2 867.0h3V872.6h-3zM206.7 862.0h3V870.0h-3zM208.2 857.4h3V865.0h-3zM209.7 858.4h3V861.9h-3zM211.2 858.4h3V862.2h-3zM212.7 859.2h3V862.4h-3zM214.2 857.4h3V864.9h-3zM215.7 861.1h3V864.9h-3zM217.2 859.5h3V864.1h-3zM218.7 858.0h3V866.3h-3zM220.2 863.3h3V871.5h-3zM221.7 860.7h3V871.2h-3zM223.2 857.4h3V863.7h-3zM224.7 857.9h3V861.3h-3zM226.2 857.4h3V861.4h-3zM227.7 841.6h3V861.4h-3zM229.2 841.6h3V845.5h-3zM230.7 841.7h3V848.1h-3zM232.2 845.1h3V851.3h-3zM233.7 848.3h3V853.8h-3zM235.2 848.5h3V854.5h-3zM236.7 845.7h3V851.5h-3zM238.2 841.9h3V848.7h-3zM239.7 839.2h3V844.9h-3zM241.2 840.4h3V849.9h-3zM242.7 846.9h3V852.0h-3zM244.2 845.2h3V852.0h-3zM245.7 842.4h3V848.2h-3zM247.2 839.6h3V845.4h-3zM248.7 838.5h3V847.2h-3zM250.2 844.2h3V854.1h-3zM251.7 851.1h3V862.4h-3zM253.2 859.4h3V869.5h-3zM254.7 851.1h3V864.6h-3zM256.2 848.7h3V854.1h-3zM257.7 848.7h3V852.9h-3zM259.2 849.9h3V853.2h-3zM260.7 850.2h3V854.1h-3zM262.2 847.7h3V859.7h-3zM263.7 856.7h3V869.5h-3zM265.2 865.8h3V869.3h-3zM266.7 866.3h3V871.4h-3zM268.2 868.4h3V872.1h-3zM269.7 862.1h3V872.1h-3zM271.2 862.1h3V875.0h-3zM272.7 872.0h3V879.8h-3zM274.2 876.4h3V884.7h-3zM275.7 881.7h3V887.5h-3zM277.2 883.3h3V891.6h-3zM278.7 888.6h3V898.1h-3zM280.2 895.0h3V901.9h-3zM281.7 898.9h3V906.5h-3zM283.2 903.5h3V909.8h-3zM284.7 906.8h3V910.4h-3zM286.2 907.4h3V910.8h-3zM287.7 907.8h3V913.8h-3zM289.2 910.8h3V915.4h-3zM290.7 909.2h3V918.3h-3zM292.2 915.3h3V926.8h-3zM293.7 922.2h3V929.5h-3zM295.2 926.5h3V940.0h-3zM296.7 933.1h3V940.0h-3zM298.2 929.2h3V936.1h-3zM299.7 926.1h3V932.2h-3zM301.2 928.8h3V933.9h-3zM302.7 930.9h3V936.8h-3zM304.2 933.3h3V936.8h-3zM305.7 926.2h3V937.5h-3zM307.2 922.4h3V929.2h-3zM308.7 919.4h3V925.4h-3zM310.2 917.7h3V922.4h-3zM311.7 917.4h3V923.3h-3zM313.2 917.4h3V925.7h-3zM314.7 922.7h3V929.1h-3zM316.2 924.1h3V929.1h-3zM317.7 917.8h3V927.1h-3zM319.2 915.1h3V921.3h-3zM320.7 918.3h3V927.1h-3zM322.2 924.1h3V934.3h-3zM323.7 922.2h3V932.0h-3zM325.2 911.2h3V925.2h-3zM326.7 911.8h3V922.3h-3zM328.2 919.3h3V928.1h-3zM329.7 925.1h3V931.9h-3zM331.2 928.5h3V934.3h-3zM332.7 926.3h3V931.5h-3zM334.2 920.8h3V929.3h-3zM335.7 916.4h3V923.8h-3zM337.2 916.4h3V923.4h-3zM338.7 920.4h3V927.0h-3zM340.2 924.0h3V932.1h-3zM341.7 928.7h3V932.4h-3zM343.2 929.4h3V935.9h-3zM344.7 932.9h3V939.3h-3zM346.2 936.3h3V942.1h-3zM347.7 936.5h3V942.1h-3zM349.2 934.1h3V942.1h-3zM350.7 932.4h3V937.1h-3zM352.2 928.9h3V935.4h-3zM353.7 923.6h3V931.9h-3zM355.2 918.7h3V926.6h-3zM356.7 914.5h3V921.7h-3zM358.2 915.3h3V920.4h-3zM359.7 915.3h3V920.5h-3zM361.2 914.1h3V923.9h-3zM362.7 909.8h3V917.1h-3zM364.2 909.8h3V914.9h-3zM365.7 911.9h3V915.3h-3zM367.2 912.3h3V916.9h-3zM368.7 913.9h3V919.7h-3zM370.2 916.7h3V921.8h-3zM371.7 918.8h3V925.9h-3zM373.2 922.9h3V927.2h-3zM374.7 924.2h3V930.5h-3zM376.2 919.7h3V930.5h-3zM377.7 905.3h3V922.7h-3zM379.2 908.8h3V913.4h-3zM380.7 908.8h3V913.4h-3zM382.2 907.8h3V913.4h-3zM383.7 905.1h3V912.2h-3zM385.2 900.3h3V908.1h-3zM386.7 900.3h3V903.7h-3zM388.2 896.6h3V903.7h-3zM389.7 892.5h3V900.5h-3zM391.2 883.1h3V895.5h-3zM392.7 883.1h3V886.2h-3zM394.2 883.2h3V887.2h-3zM395.7 884.2h3V889.6h-3zM397.2 886.6h3V897.1h-3zM398.7 894.1h3V903.0h-3zM400.2 900.0h3V906.6h-3zM401.7 903.6h3V906.9h-3zM403.2 902.2h3V906.9h-3zM404.7 887.4h3V905.2h-3zM406.2 883.6h3V890.4h-3zM407.7 882.4h3V886.6h-3zM409.2 881.3h3V887.0h-3zM410.7 884.0h3V892.3h-3zM412.2 889.3h3V898.5h-3zM413.7 893.9h3V898.0h-3zM415.2 891.6h3V896.9h-3zM416.7 891.8h3V894.9h-3zM418.2 890.5h3V894.8h-3zM419.7 887.3h3V893.5h-3zM421.2 884.2h3V890.3h-3zM422.7 884.2h3V889.5h-3zM424.2 884.3h3V891.6h-3zM425.7 888.6h3V892.9h-3zM427.2 887.4h3V894.6h-3zM428.7 884.2h3V890.4h-3zM430.2 880.0h3V887.2h-3zM431.7 880.0h3V892.4h-3zM433.2 889.4h3V902.4h-3zM434.7 896.1h3V901.3h-3zM436.2 895.9h3V901.3h-3zM437.7 895.9h3V901.6h-3zM439.2 898.6h3V902.0h-3zM440.7 897.9h3V905.0h-3zM442.2 897.9h3V905.4h-3zM443.7 902.4h3V907.4h-3zM445.2 903.5h3V907.4h-3zM446.7 903.5h3V908.5h-3zM448.2 901.2h3V912.8h-3zM449.7 896.1h3V904.2h-3zM451.2 896.1h3V902.0h-3zM452.7 899.0h3V904.2h-3zM454.2 901.2h3V905.8h-3zM455.7 901.4h3V905.8h-3zM457.2 902.0h3V905.1h-3zM458.7 900.7h3V905.1h-3zM460.2 899.0h3V903.7h-3zM461.7 894.3h3V902.0h-3zM463.2 894.3h3V898.5h-3zM464.7 895.5h3V899.8h-3zM466.2 894.2h3V902.4h-3zM467.7 899.4h3V911.8h-3zM469.2 908.8h3V917.1h-3zM470.7 908.8h3V917.1h-3zM472.2 908.1h3V911.8h-3zM473.7 906.5h3V914.4h-3zM475.2 911.4h3V917.5h-3zM476.7 914.5h3V923.9h-3zM478.2 920.9h3V928.8h-3zM479.7 925.0h3V928.8h-3zM481.2 925.0h3V928.6h-3zM482.7 923.5h3V933.6h-3zM484.2 930.6h3V938.3h-3zM485.7 935.3h3V942.0h-3zM487.2 932.3h3V940.1h-3zM488.7 927.9h3V935.3h-3zM490.2 931.3h3V940.5h-3zM491.7 937.5h3V946.6h-3zM493.2 941.0h3V948.5h-3zM494.7 936.2h3V944.0h-3zM496.2 933.1h3V939.2h-3zM497.7 933.7h3V939.3h-3zM499.2 936.3h3V940.5h-3zM500.7 937.5h3V942.2h-3zM502.2 939.2h3V948.4h-3zM503.7 945.4h3V949.9h-3zM505.2 946.9h3V950.4h-3zM506.7 943.2h3V950.4h-3zM508.2 943.2h3V949.0h-3zM509.7 946.0h3V951.8h-3zM511.2 948.8h3V954.7h-3zM512.7 942.1h3V954.7h-3zM514.2 938.3h3V961.0h-3zM515.7 952.8h3V961.0h-3zM517.2 943.7h3V955.8h-3zM518.7 942.2h3V946.7h-3zM520.2 942.8h3V946.8h-3zM521.7 943.1h3V946.8h-3zM523.2 943.1h3V948.9h-3zM524.7 944.8h3V952.2h-3zM526.2 949.2h3V956.2h-3zM527.7 944.9h3V955.3h-3zM529.2 939.4h3V947.9h-3zM530.7 936.9h3V942.4h-3zM532.2 935.7h3V939.9h-3zM533.7 933.8h3V938.7h-3zM535.2 933.8h3V941.1h-3zM536.7 938.1h3V948.9h-3zM538.2 945.9h3V953.1h-3zM539.7 940.7h3V953.1h-3zM541.2 936.5h3V943.7h-3zM542.7 927.9h3V939.5h-3zM544.2 925.4h3V933.2h-3zM545.7 916.3h3V928.4h-3zM547.2 918.0h3V923.3h-3zM548.7 918.0h3V921.2h-3zM550.2 914.8h3V921.2h-3zM551.7 914.8h3V920.5h-3zM553.2 915.0h3V919.5h-3zM554.7 916.5h3V921.6h-3zM556.2 911.4h3V922.5h-3zM557.7 899.4h3V914.4h-3zM559.2 897.3h3V902.4h-3zM560.7 894.7h3V900.3h-3zM562.2 892.3h3V897.7h-3zM563.7 889.7h3V895.3h-3zM565.2 890.1h3V893.9h-3zM566.7 890.1h3V894.3h-3zM568.2 891.0h3V894.3h-3zM569.7 889.5h3V894.0h-3zM571.2 888.9h3V892.5h-3zM572.7 888.9h3V893.3h-3zM574.2 889.9h3V896.8h-3zM575.7 893.8h3V901.1h-3zM577.2 898.1h3V904.9h-3zM578.7 898.5h3V906.3h-3zM580.2 890.8h3V901.5h-3zM581.7 882.1h3V893.8h-3zM583.2 882.1h3V889.4h-3zM584.7 886.4h3V894.1h-3zM586.2 887.9h3V894.1h-3zM587.7 882.8h3V890.9h-3zM589.2 878.9h3V885.8h-3zM590.7 875.5h3V881.9h-3zM592.2 875.1h3V878.7h-3zM593.7 875.1h3V881.4h-3zM595.2 878.4h3V885.5h-3zM596.7 879.8h3V886.7h-3zM598.2 883.7h3V887.2h-3zM599.7 882.9h3V887.2h-3zM601.2 882.9h3V892.5h-3zM602.7 889.5h3V906.7h-3zM604.2 903.7h3V915.6h-3zM605.7 912.6h3V924.5h-3zM607.2 919.2h3V926.0h-3zM608.7 923.0h3V931.7h-3zM610.2 928.7h3V936.8h-3zM611.7 928.5h3V938.1h-3zM613.2 920.4h3V931.5h-3zM614.7 908.5h3V923.4h-3zM616.2 911.3h3V915.9h-3zM617.7 912.9h3V918.8h-3zM619.2 915.8h3V923.2h-3zM620.7 917.5h3V923.7h-3zM622.2 919.8h3V923.7h-3zM623.7 915.7h3V922.8h-3zM625.2 913.7h3V918.7h-3zM626.7 914.6h3V921.9h-3zM628.2 918.9h3V924.3h-3zM629.7 921.3h3V927.9h-3zM631.2 924.9h3V930.3h-3zM632.7 927.3h3V933.1h-3zM634.2 929.2h3V933.1h-3zM635.7 928.9h3V933.1h-3zM637.2 924.6h3V931.9h-3zM638.7 917.5h3V927.6h-3zM640.2 918.9h3V923.2h-3zM641.7 918.9h3V924.6h-3zM643.2 918.8h3V924.6h-3zM644.7 915.6h3V922.5h-3zM646.2 919.5h3V926.6h-3zM647.7 923.6h3V929.1h-3zM649.2 925.3h3V929.1h-3zM650.7 925.7h3V930.2h-3zM652.2 927.2h3V931.8h-3zM653.7 928.8h3V934.3h-3zM655.2 931.3h3V934.5h-3zM656.7 930.4h3V934.5h-3zM658.2 930.4h3V933.8h-3zM659.7 930.5h3V933.8h-3zM661.2 929.8h3V933.5h-3zM662.7 927.4h3V932.8h-3zM664.2 924.7h3V930.4h-3zM665.7 923.7h3V927.7h-3zM667.2 919.7h3V926.7h-3zM668.7 917.8h3V922.7h-3zM670.2 917.8h3V922.8h-3zM671.7 919.4h3V922.8h-3zM673.2 919.4h3V924.2h-3zM674.7 921.2h3V927.7h-3zM676.2 924.0h3V943.2h-3zM677.7 936.2h3V943.6h-3zM679.2 940.6h3V947.2h-3zM680.7 942.5h3V947.8h-3zM682.2 940.0h3V945.5h-3zM683.7 935.7h3V943.0h-3zM685.2 935.7h3V946.5h-3zM686.7 943.5h3V954.5h-3zM688.2 951.5h3V969.8h-3zM689.7 964.6h3V969.8h-3zM691.2 963.6h3V967.6h-3zM692.7 952.7h3V966.6h-3zM694.2 949.1h3V955.7h-3zM695.7 949.1h3V953.0h-3zM697.2 946.0h3V953.0h-3zM698.7 946.0h3V952.4h-3zM700.2 949.4h3V957.9h-3zM701.7 954.9h3V961.4h-3zM703.2 950.3h3V958.3h-3zM704.7 947.1h3V953.3h-3zM706.2 944.5h3V950.1h-3zM707.7 940.6h3V947.5h-3zM709.2 940.2h3V947.8h-3zM710.7 939.8h3V943.2h-3zM712.2 939.4h3V942.8h-3zM713.7 938.2h3V942.4h-3zM715.2 937.4h3V941.2h-3zM716.7 935.4h3V940.4h-3zM718.2 929.9h3V938.4h-3zM719.7 931.2h3V935.9h-3zM721.2 932.9h3V937.0h-3zM722.7 934.0h3V938.7h-3zM724.2 935.7h3V942.2h-3zM725.7 938.5h3V945.2h-3zM727.2 935.7h3V941.5h-3zM728.7 929.4h3V938.7h-3zM730.2 919.4h3V932.4h-3zM731.7 914.7h3V922.4h-3zM733.2 914.7h3V920.8h-3zM734.7 917.8h3V923.6h-3zM736.2 920.6h3V926.6h-3zM737.7 916.6h3V928.3h-3zM739.2 910.9h3V919.6h-3zM740.7 910.9h3V914.5h-3zM742.2 911.2h3V914.5h-3zM743.7 910.2h3V914.2h-3zM745.2 910.2h3V913.2h-3zM746.7 883.1h3V914.1h-3zM748.2 883.1h3V889.9h-3zM749.7 886.9h3V897.7h-3zM751.2 894.7h3V904.3h-3zM752.7 901.3h3V909.5h-3zM754.2 899.9h3V904.7h-3zM755.7 895.4h3V902.9h-3zM757.2 893.2h3V898.5h-3zM758.7 873.7h3V896.2h-3zM760.2 870.3h3V879.8h-3zM761.7 876.8h3V886.2h-3zM763.2 879.9h3V885.7h-3zM764.7 876.0h3V882.9h-3zM766.2 875.4h3V879.0h-3zM767.7 875.4h3V880.8h-3zM769.2 877.8h3V884.3h-3zM770.7 880.7h3V884.9h-3zM772.2 874.0h3V883.7h-3zM773.7 866.9h3V877.0h-3zM775.2 861.9h3V869.9h-3zM776.7 861.2h3V865.9h-3zM778.2 862.9h3V873.9h-3zM779.7 870.9h3V883.8h-3zM781.2 880.2h3V890.8h-3zM782.7 869.7h3V883.2h-3zM784.2 860.3h3V872.7h-3zM785.7 850.7h3V863.3h-3zM787.2 845.7h3V853.7h-3zM788.7 835.7h3V848.7h-3zM790.2 829.6h3V838.7h-3zM791.7 826.5h3V833.7h-3zM793.2 824.2h3V829.5h-3zM794.7 816.2h3V827.2h-3zM796.2 816.2h3V827.8h-3zM797.7 824.8h3V838.1h-3zM799.2 831.0h3V840.4h-3zM800.7 826.9h3V834.0h-3zM802.2 818.5h3V829.9h-3zM803.7 814.1h3V821.5h-3zM805.2 816.8h3V820.5h-3zM806.7 812.8h3V820.6h-3zM808.2 817.6h3V825.2h-3zM809.7 822.2h3V829.0h-3zM811.2 826.0h3V833.4h-3zM812.7 828.5h3V833.4h-3zM814.2 828.5h3V833.9h-3zM815.7 829.3h3V833.9h-3zM817.2 829.3h3V833.3h-3zM818.7 830.3h3V833.4h-3zM820.2 825.4h3V833.4h-3zM821.7 821.2h3V828.4h-3zM823.2 817.9h3V824.5h-3zM824.7 821.5h3V826.2h-3zM826.2 823.2h3V827.1h-3zM827.7 824.1h3V830.1h-3zM829.2 826.3h3V830.1h-3zM830.7 825.1h3V829.3h-3zM832.2 821.4h3V828.1h-3zM833.7 819.7h3V824.4h-3zM835.2 815.0h3V822.7h-3zM836.7 809.5h3V818.5h-3zM838.2 815.5h3V821.9h-3zM839.7 818.9h3V824.2h-3zM841.2 821.2h3V828.7h-3zM842.7 825.7h3V829.4h-3zM844.2 826.4h3V832.8h-3zM845.7 829.8h3V837.0h-3zM847.2 834.0h3V848.9h-3zM848.7 845.9h3V861.1h-3zM850.2 856.6h3V861.1h-3zM851.7 852.5h3V859.6h-3zM853.2 847.6h3V855.5h-3zM854.7 846.0h3V850.6h-3zM856.2 843.0h3V849.0h-3zM857.7 839.9h3V846.0h-3zM859.2 826.4h3V842.9h-3zM860.7 831.9h3V848.7h-3zM862.2 845.7h3V858.3h-3zM863.7 855.3h3V871.3h-3zM865.2 865.9h3V873.9h-3zM866.7 870.9h3V876.7h-3zM868.2 873.7h3V877.3h-3zM869.7 874.3h3V879.5h-3zM871.2 870.2h3V879.5h-3zM872.7 869.1h3V873.2h-3zM874.2 866.2h3V872.1h-3zM875.7 860.7h3V869.2h-3zM877.2 858.5h3V863.7h-3zM878.7 856.8h3V861.5h-3zM880.2 856.8h3V862.9h-3zM881.7 859.9h3V865.0h-3zM883.2 862.0h3V868.0h-3zM884.7 865.0h3V870.6h-3zM886.2 867.6h3V874.5h-3zM887.7 871.5h3V891.5h-3zM889.2 888.5h3V897.7h-3zM890.7 894.7h3V898.2h-3zM892.2 895.2h3V901.4h-3zM893.7 898.4h3V904.9h-3zM895.2 901.9h3V908.4h-3zM896.7 905.4h3V910.4h-3zM898.2 907.0h3V912.3h-3zM899.7 905.6h3V910.0h-3zM901.2 902.9h3V908.6h-3zM902.7 902.9h3V908.1h-3zM904.2 905.1h3V908.7h-3zM905.7 904.7h3V908.7h-3zM907.2 903.6h3V907.7h-3zM908.7 903.5h3V907.5h-3zM910.2 904.5h3V911.6h-3zM911.7 908.6h3V916.8h-3zM913.2 913.8h3V923.0h-3zM914.7 920.0h3V926.5h-3zM916.2 916.7h3V924.3h-3zM917.7 914.2h3V919.7h-3zM919.2 909.0h3V917.2h-3zM920.7 905.9h3V912.0h-3zM922.2 905.9h3V910.1h-3zM923.7 898.9h3V910.1h-3zM925.2 893.0h3V901.9h-3zM926.7 889.0h3V896.0h-3zM928.2 886.5h3V892.0h-3zM929.7 884.3h3V889.5h-3zM931.2 880.9h3V887.3h-3zM932.7 877.8h3V883.9h-3zM934.2 873.8h3V880.8h-3zM935.7 870.5h3V876.8h-3zM937.2 873.7h3V879.9h-3zM938.7 876.9h3V885.7h-3zM940.2 882.7h3V893.5h-3zM941.7 889.2h3V893.0h-3zM943.2 890.0h3V894.2h-3zM944.7 891.2h3V898.1h-3zM946.2 895.1h3V899.3h-3zM947.7 881.3h3V901.3h-3zM949.2 871.0h3V884.3h-3zM950.7 865.9h3V874.0h-3zM952.2 868.6h3V876.9h-3zM953.7 873.9h3V881.1h-3zM955.2 878.1h3V883.6h-3zM956.7 880.6h3V890.3h-3zM958.2 887.3h3V897.8h-3zM959.7 894.8h3V905.0h-3zM961.2 902.0h3V917.5h-3zM962.7 914.5h3V924.0h-3zM964.2 902.9h3V918.7h-3zM965.7 896.5h3V905.9h-3zM967.2 896.5h3V899.9h-3zM968.7 892.8h3V899.9h-3zM970.2 891.2h3V899.0h-3zM971.7 896.0h3V903.1h-3zM973.2 900.1h3V909.7h-3zM974.7 906.7h3V912.5h-3zM976.2 909.5h3V916.4h-3zM977.7 913.4h3V917.6h-3zM979.2 910.4h3V917.6h-3zM980.7 904.5h3V913.4h-3zM982.2 896.0h3V907.5h-3zM983.7 896.0h3V910.6h-3zM985.2 907.6h3V918.0h-3zM986.7 909.3h3V918.0h-3zM988.2 908.4h3V912.3h-3zM989.7 907.9h3V926.5h-3zM991.2 923.4h3V927.1h-3zM992.7 924.1h3V927.4h-3zM994.2 921.9h3V927.4h-3zM995.7 921.9h3V925.1h-3zM997.2 922.1h3V930.3h-3zM998.7 927.3h3V932.6h-3zM1000.2 929.6h3V934.7h-3zM1001.7 931.7h3V937.5h-3zM1003.2 933.6h3V939.0h-3zM1004.7 936.0h3V944.0h-3zM1006.2 941.0h3V948.5h-3zM1007.7 936.8h3V948.1h-3zM1009.2 927.4h3V939.8h-3zM1010.7 928.9h3V936.7h-3zM1012.2 933.5h3V936.7h-3zM1013.7 933.5h3V936.7h-3zM1015.2 933.7h3V938.9h-3zM1016.7 934.1h3V938.9h-3zM1018.2 929.8h3V937.1h-3zM1019.7 926.0h3V932.8h-3zM1021.2 926.0h3V932.5h-3zM1022.7 929.5h3V937.8h-3zM1024.2 934.8h3V940.4h-3zM1025.7 937.4h3V945.9h-3zM1027.2 942.4h3V949.6h-3zM1028.7 946.6h3V955.4h-3zM1030.2 952.4h3V959.5h-3zM1031.7 956.0h3V959.0h-3zM1033.2 953.7h3V959.5h-3zM1034.7 931.3h3V956.7h-3zM1036.2 932.3h3V936.6h-3zM1037.7 931.6h3V936.6h-3zM1039.2 930.0h3V935.8h-3zM1040.7 932.8h3V939.3h-3zM1042.2 936.3h3V942.0h-3zM1043.7 936.4h3V941.0h-3zM1045.2 935.5h3V939.4h-3zM1046.7 931.2h3V938.5h-3zM1048.2 927.4h3V934.2h-3zM1049.7 928.5h3V933.3h-3zM1051.2 929.5h3V933.3h-3zM1052.7 929.5h3V935.0h-3zM1054.2 932.0h3V936.1h-3zM1055.7 916.6h3V938.2h-3zM1057.2 909.6h3V919.6h-3zM1058.7 903.0h3V912.6h-3zM1060.2 900.2h3V906.0h-3zM1061.7 897.7h3V903.2h-3zM1063.2 897.7h3V902.5h-3zM1064.7 899.5h3V906.7h-3zM1066.2 903.7h3V908.4h-3zM1067.7 901.8h3V909.6h-3zM1069.2 896.7h3V904.8h-3zM1070.7 891.5h3V899.7h-3zM1072.2 891.5h3V896.4h-3zM1073.7 893.4h3V899.4h-3zM1075.2 896.4h3V903.4h-3zM1076.7 900.4h3V905.1h-3zM1078.2 897.8h3V904.4h-3zM1079.7 892.6h3V900.8h-3zM1081.2 889.2h3V895.6h-3zM1082.7 885.9h3V892.2h-3zM1084.2 889.2h3V894.3h-3zM1085.7 891.3h3V901.6h-3zM1087.2 896.3h3V901.6h-3zM1088.7 895.6h3V900.2h-3zM1090.2 894.3h3V898.6h-3zM1091.7 892.4h3V898.0h-3zM1093.2 895.0h3V898.4h-3zM1094.7 895.4h3V898.4h-3zM1096.2 895.4h3V904.5h-3zM1097.7 898.1h3V902.7h-3zM1099.2 895.7h3V901.1h-3zM1100.7 895.7h3V899.0h-3zM1102.2 891.4h3V899.0h-3zM1103.7 887.4h3V894.4h-3zM1105.2 883.3h3V890.4h-3zM1106.7 885.8h3V889.4h-3zM1108.2 885.8h3V890.4h-3zM1109.7 884.1h3V890.4h-3zM1111.2 883.3h3V889.2h-3zM1112.7 885.5h3V889.2h-3zM1114.2 885.5h3V896.0h-3zM1115.7 885.4h3V892.0h-3zM1117.2 883.6h3V888.4h-3zM1118.7 882.9h3V886.6h-3zM1120.2 877.9h3V885.9h-3zM1121.7 872.9h3V880.9h-3zM1123.2 877.2h3V891.5h-3zM1124.7 883.8h3V891.4h-3zM1126.2 880.0h3V886.8h-3zM1127.7 878.2h3V883.0h-3zM1129.2 875.0h3V881.2h-3zM1130.7 871.7h3V878.0h-3zM1132.2 871.0h3V881.5h-3zM1133.7 878.5h3V892.7h-3zM1135.2 887.1h3V894.7h-3zM1136.7 877.2h3V890.1h-3zM1138.2 868.8h3V880.2h-3zM1139.7 860.0h3V871.8h-3zM1141.2 861.9h3V868.9h-3zM1142.7 865.9h3V873.3h-3zM1144.2 862.6h3V871.7h-3zM1145.7 859.0h3V865.6h-3zM1147.2 859.0h3V863.9h-3zM1148.7 860.9h3V864.1h-3zM1150.2 858.4h3V864.1h-3zM1151.7 858.4h3V864.4h-3zM1153.2 860.0h3V871.6h-3zM1154.7 868.6h3V885.8h-3zM1156.2 882.8h3V892.2h-3zM1157.7 885.8h3V892.2h-3zM1159.2 880.5h3V888.8h-3zM1160.7 877.7h3V883.7h-3zM1162.2 869.2h3V880.7h-3zM1163.7 860.3h3V872.2h-3zM1165.2 852.5h3V863.3h-3zM1166.7 847.7h3V855.5h-3zM1168.2 850.0h3V857.9h-3zM1169.7 854.5h3V862.6h-3zM1171.2 859.6h3V868.5h-3zM1172.7 860.0h3V869.2h-3zM1174.2 856.8h3V863.0h-3zM1175.7 855.2h3V859.8h-3zM1177.2 854.5h3V869.8h-3zM1178.7 866.8h3V886.7h-3zM1180.2 883.7h3V904.3h-3zM1181.7 894.5h3V904.3h-3zM1183.2 883.9h3V897.5h-3zM1184.7 877.9h3V886.9h-3zM1186.2 881.8h3V891.1h-3zM1187.7 888.1h3V894.3h-3zM1189.2 891.3h3V899.8h-3zM1190.7 885.3h3V899.8h-3zM1192.2 864.0h3V888.3h-3zM1193.7 854.4h3V867.0h-3zM1195.2 853.2h3V857.4h-3zM1196.7 853.2h3V856.5h-3zM1198.2 850.7h3V860.2h-3zM1199.7 857.2h3V862.4h-3zM1201.2 859.4h3V865.6h-3zM1202.7 862.6h3V874.8h-3zM1204.2 871.8h3V906.3h-3zM1205.7 903.3h3V916.1h-3zM1207.2 913.1h3V919.4h-3zM1208.7 916.4h3V921.1h-3zM1210.2 918.1h3V924.4h-3zM1211.7 910.4h3V924.4h-3zM1213.2 903.1h3V913.4h-3zM1214.7 903.1h3V907.6h-3zM1216.2 904.6h3V911.1h-3zM1217.7 903.6h3V915.9h-3zM1219.2 886.7h3V906.6h-3zM1220.7 877.7h3V889.7h-3zM1222.2 873.5h3V880.7h-3zM1223.7 868.7h3V876.5h-3zM1225.2 865.4h3V871.7h-3zM1226.7 863.3h3V868.4h-3zM1228.2 860.4h3V866.3h-3zM1229.7 858.8h3V863.6h-3zM1231.2 858.4h3V861.8h-3zM1232.7 856.1h3V861.4h-3zM1234.2 851.7h3V859.1h-3zM1235.7 850.7h3V856.9h-3zM1237.2 853.9h3V857.0h-3zM1238.7 847.1h3V857.0h-3zM1240.2 844.8h3V850.1h-3zM1241.7 840.7h3V847.8h-3zM1243.2 826.8h3V843.7h-3zM1244.7 813.7h3V829.8h-3zM1246.2 811.8h3V818.4h-3zM1247.7 807.5h3V814.8h-3zM1249.2 805.6h3V810.5h-3zM1250.7 805.6h3V818.3h-3zM1252.2 815.3h3V824.5h-3zM1253.7 818.4h3V823.6h-3zM1255.2 818.0h3V821.4h-3zM1256.7 814.6h3V821.0h-3zM1258.2 814.6h3V820.6h-3zM1259.7 815.3h3V821.7h-3zM1261.2 818.7h3V826.3h-3zM1262.7 823.3h3V828.6h-3zM1264.2 825.6h3V830.9h-3zM1265.7 827.9h3V834.1h-3zM1267.2 831.1h3V837.8h-3zM1268.7 831.9h3V840.1h-3zM1270.2 828.1h3V834.9h-3zM1271.7 825.2h3V831.1h-3zM1273.2 822.4h3V828.2h-3zM1274.7 819.1h3V825.4h-3zM1276.2 811.4h3V822.1h-3zM1277.7 805.0h3V814.4h-3zM1279.2 796.0h3V808.0h-3zM1280.7 796.0h3V806.5h-3zM1282.2 803.5h3V809.2h-3zM1283.7 806.2h3V813.4h-3zM1285.2 810.4h3V817.9h-3zM1286.7 809.8h3V817.9h-3zM1288.2 808.1h3V812.8h-3zM1289.7 805.2h3V811.1h-3zM1291.2 799.6h3V808.2h-3zM1292.7 798.1h3V802.6h-3zM1294.2 798.1h3V810.0h-3zM1295.7 807.0h3V814.9h-3zM1297.2 811.9h3V824.9h-3zM1298.7 821.9h3V837.3h-3zM1300.2 834.3h3V846.9h-3zM1301.7 836.8h3V845.6h-3zM1303.2 832.1h3V839.8h-3zM1304.7 823.5h3V835.1h-3zM1306.2 817.7h3V827.4h-3zM1307.7 808.8h3V820.7h-3zM1309.2 803.3h3V811.8h-3zM1310.7 796.5h3V806.3h-3zM1312.2 791.4h3V799.5h-3zM1313.7 789.0h3V794.4h-3zM1315.2 783.8h3V792.0h-3zM1316.7 777.8h3V786.8h-3zM1318.2 768.6h3V780.8h-3zM1319.7 759.7h3V771.6h-3zM1321.2 752.6h3V762.7h-3zM1322.7 746.3h3V755.6h-3zM1324.2 743.8h3V755.6h-3zM1325.7 752.6h3V765.5h-3zM1327.2 762.5h3V774.4h-3zM1328.7 771.4h3V778.5h-3zM1330.2 770.1h3V778.5h-3zM1331.7 765.0h3V773.1h-3zM1333.2 762.5h3V768.0h-3zM1334.7 757.4h3V765.5h-3zM1336.2 748.4h3V761.3h-3zM1337.7 738.3h3V751.4h-3zM1339.2 732.2h3V741.3h-3zM1340.7 731.1h3V735.2h-3zM1342.2 728.5h3V734.1h-3zM1343.7 729.3h3V735.5h-3zM1345.2 732.5h3V741.8h-3zM1346.7 738.8h3V746.7h-3zM1348.2 743.7h3V749.2h-3zM1349.7 736.6h3V751.9h-3zM1351.2 717.2h3V739.6h-3zM1352.7 701.3h3V720.2h-3zM1354.2 696.1h3V704.3h-3zM1355.7 700.1h3V710.3h-3zM1357.2 706.3h3V725.7h-3zM1358.7 722.7h3V735.2h-3zM1360.2 708.6h3V728.2h-3zM1361.7 695.2h3V711.6h-3zM1363.2 698.4h3V701.8h-3zM1364.7 698.8h3V705.3h-3zM1366.2 700.7h3V705.5h-3zM1367.7 702.5h3V708.6h-3zM1369.2 705.6h3V713.5h-3zM1370.7 707.2h3V714.7h-3zM1372.2 711.7h3V725.2h-3zM1373.7 722.2h3V735.4h-3zM1375.2 732.4h3V740.8h-3zM1376.7 731.4h3V739.1h-3zM1378.2 731.3h3V734.4h-3zM1379.7 728.5h3V744.3h-3zM1381.2 741.3h3V753.7h-3zM1382.7 743.0h3V751.9h-3zM1384.2 732.7h3V746.0h-3zM1385.7 727.7h3V735.7h-3zM1387.2 722.9h3V730.7h-3zM1388.7 726.1h3V739.3h-3zM1390.2 736.3h3V751.1h-3zM1391.7 748.1h3V756.6h-3zM1393.2 746.5h3V756.6h-3zM1394.7 739.9h3V749.5h-3zM1396.2 739.6h3V743.8h-3zM1397.7 740.8h3V752.9h-3zM1399.2 749.9h3V759.2h-3zM1400.7 756.2h3V768.3h-3zM1402.2 765.3h3V774.7h-3zM1403.7 771.7h3V780.5h-3zM1405.2 776.9h3V780.5h-3zM1406.7 776.9h3V783.5h-3zM1408.2 775.1h3V786.1h-3zM1409.7 766.0h3V778.1h-3zM1411.2 757.2h3V769.0h-3zM1412.7 743.8h3V760.2h-3zM1414.2 735.8h3V746.8h-3zM1415.7 733.2h3V738.9h-3zM1417.2 733.2h3V737.1h-3zM1418.7 728.5h3V737.1h-3zM1420.2 731.0h3V736.9h-3zM1421.7 733.9h3V740.7h-3zM1423.2 728.8h3V740.8h-3zM1424.7 716.5h3V731.8h-3zM1426.2 706.9h3V719.5h-3zM1427.7 696.1h3V709.9h-3zM1429.2 700.3h3V724.5h-3zM1430.7 721.5h3V728.9h-3zM1432.2 725.9h3V734.7h-3zM1433.7 731.7h3V739.0h-3zM1435.2 730.3h3V740.8h-3zM1436.7 727.9h3V733.3h-3zM1438.2 723.5h3V730.9h-3zM1439.7 719.2h3V726.5h-3zM1441.2 719.7h3V729.5h-3zM1442.7 726.5h3V737.3h-3zM1444.2 734.3h3V741.5h-3zM1445.7 737.5h3V745.4h-3zM1447.2 729.1h3V740.5h-3zM1448.7 720.4h3V732.1h-3zM1450.2 710.2h3V723.4h-3zM1451.7 708.1h3V721.3h-3zM1453.2 718.3h3V740.8h-3zM1454.7 737.8h3V757.9h-3zM1456.2 754.9h3V766.0h-3zM1457.7 763.0h3V769.5h-3zM1459.2 766.5h3V774.0h-3zM1460.7 771.0h3V777.8h-3zM1462.2 764.7h3V777.3h-3zM1463.7 755.9h3V767.7h-3zM1465.2 754.4h3V759.0h-3zM1466.7 756.0h3V766.3h-3zM1468.2 763.3h3V772.9h-3zM1469.7 769.9h3V782.5h-3zM1471.2 779.5h3V797.2h-3zM1472.7 794.2h3V813.7h-3zM1474.2 810.7h3V824.3h-3zM1475.7 821.3h3V837.4h-3zM1477.2 834.4h3V844.5h-3zM1478.7 826.0h3V840.7h-3zM1480.2 812.9h3V829.0h-3zM1481.7 806.3h3V815.9h-3zM1483.2 810.8h3V825.5h-3zM1484.7 822.5h3V834.4h-3zM1486.2 831.4h3V844.9h-3zM1487.7 841.9h3V854.9h-3zM1489.2 851.9h3V863.5h-3zM1490.7 860.5h3V872.2h-3zM1492.2 855.8h3V868.9h-3zM1493.7 845.1h3V858.8h-3zM1495.2 834.3h3V848.1h-3zM1496.7 825.0h3V837.3h-3zM1498.2 816.2h3V828.0h-3zM1499.7 808.1h3V819.2h-3zM1501.2 806.5h3V811.7h-3zM1502.7 804.6h3V809.5h-3zM1504.2 802.9h3V807.6h-3zM1505.7 799.1h3V805.9h-3zM1507.2 799.1h3V803.7h-3zM1508.7 799.3h3V811.1h-3zM1510.2 808.1h3V818.2h-3zM1511.7 815.2h3V827.0h-3zM1513.2 824.0h3V833.7h-3zM1514.7 830.7h3V835.1h-3zM1516.2 832.1h3V839.8h-3zM1517.7 833.4h3V839.8h-3zM1519.2 832.8h3V838.9h-3zM1520.7 828.6h3V835.8h-3zM1522.2 828.6h3V832.5h-3zM1523.7 828.5h3V834.8h-3zM1525.2 831.8h3V835.5h-3zM1526.7 832.5h3V841.8h-3zM1528.2 838.8h3V848.4h-3zM1529.7 845.4h3V851.9h-3zM1531.2 844.0h3V850.2h-3zM1532.7 836.3h3V847.0h-3zM1534.2 834.7h3V839.3h-3zM1535.7 832.5h3V837.7h-3zM1537.2 829.5h3V835.5h-3zM1538.7 825.7h3V832.5h-3zM1540.2 824.3h3V829.4h-3zM1541.7 826.4h3V834.7h-3zM1543.2 831.7h3V841.4h-3zM1544.7 838.4h3V846.9h-3zM1546.2 842.2h3V850.1h-3zM1547.7 841.7h3V845.2h-3zM1549.2 841.0h3V845.4h-3zM1550.7 824.9h3V844.0h-3zM1552.2 820.3h3V827.9h-3zM1553.7 818.4h3V823.3h-3zM1555.2 808.5h3V821.8h-3zM1556.7 798.3h3V811.5h-3zM1558.2 799.8h3V808.5h-3zM1559.7 803.2h3V808.5h-3zM1561.2 791.2h3V806.2h-3zM1562.7 787.9h3V795.5h-3zM1564.2 787.9h3V791.6h-3zM1565.7 788.6h3V792.7h-3zM1567.2 787.3h3V823.2h-3zM1568.7 820.2h3V827.2h-3zM1570.2 824.2h3V828.9h-3zM1571.7 825.9h3V831.2h-3zM1573.2 828.2h3V835.9h-3zM1574.7 832.9h3V836.0h-3zM1576.2 832.4h3V836.0h-3zM1577.7 832.4h3V836.9h-3zM1579.2 833.9h3V844.0h-3zM1580.7 841.0h3V852.3h-3zM1582.2 849.3h3V855.9h-3zM1583.7 851.8h3V857.0h-3zM1585.2 854.0h3V859.9h-3zM1586.7 856.9h3V861.2h-3zM1588.2 858.2h3V871.9h-3zM1589.7 868.9h3V881.2h-3zM1591.2 872.5h3V883.1h-3zM1592.7 866.0h3V875.5h-3zM1594.2 861.2h3V874.8h-3zM1595.7 871.8h3V892.8h-3zM1597.2 889.8h3V902.0h-3zM1598.7 889.8h3V899.3h-3zM1600.2 884.4h3V892.8h-3zM1601.7 876.2h3V887.4h-3zM1603.2 864.5h3V879.2h-3zM1604.7 851.1h3V869.0h-3zM1606.2 842.5h3V854.1h-3zM1607.7 842.5h3V850.5h-3zM1609.2 847.5h3V856.3h-3zM1610.7 850.5h3V861.1h-3zM1612.2 842.6h3V853.5h-3zM1613.7 833.4h3V845.6h-3zM1615.2 832.9h3V838.2h-3zM1616.7 835.2h3V841.4h-3zM1618.2 838.4h3V842.7h-3zM1619.7 839.7h3V847.8h-3zM1621.2 844.8h3V851.7h-3zM1622.7 847.4h3V851.7h-3zM1624.2 848.5h3V851.7h-3zM1625.7 844.2h3V851.7h-3zM1627.2 838.9h3V847.2h-3zM1628.7 832.5h3V841.9h-3zM1630.2 828.2h3V835.5h-3zM1631.7 823.5h3V831.2h-3zM1633.2 821.4h3V827.4h-3zM1634.7 820.2h3V824.4h-3zM1636.2 815.7h3V823.2h-3zM1637.7 812.5h3V818.7h-3zM1639.2 813.9h3V821.6h-3zM1640.7 818.6h3V826.7h-3zM1642.2 823.7h3V835.7h-3zM1643.7 832.7h3V843.9h-3zM1645.2 834.9h3V843.9h-3zM1646.7 830.0h3V837.9h-3zM1648.2 826.0h3V833.0h-3zM1649.7 821.2h3V829.0h-3zM1651.2 817.2h3V826.3h-3zM1652.7 822.4h3V826.3h-3zM1654.2 822.4h3V826.7h-3zM1655.7 818.7h3V828.0h-3zM1657.2 810.8h3V821.7h-3zM1658.7 798.3h3V813.8h-3zM1660.2 790.5h3V801.3h-3zM1661.7 791.2h3V795.4h-3zM1663.2 792.4h3V796.4h-3zM1664.7 793.4h3V797.3h-3zM1666.2 793.3h3V799.7h-3zM1667.7 787.2h3V796.3h-3zM1669.2 784.1h3V790.2h-3zM1670.7 786.0h3V798.9h-3zM1672.2 795.9h3V799.4h-3zM1673.7 795.4h3V799.4h-3zM1675.2 793.3h3V798.4h-3zM1676.7 793.3h3V796.4h-3zM1678.2 793.4h3V798.3h-3zM1679.7 792.0h3V798.3h-3zM1681.2 791.5h3V795.9h-3zM1682.7 788.0h3V794.5h-3zM1684.2 785.6h3V791.0h-3zM1685.7 782.5h3V788.6h-3zM1687.2 785.0h3V789.7h-3zM1688.7 786.7h3V792.6h-3zM1690.2 785.0h3V792.6h-3zM1691.7 781.6h3V788.0h-3zM1693.2 778.7h3V784.6h-3zM1694.7 774.4h3V781.7h-3zM1696.2 771.6h3V777.4h-3zM1697.7 771.6h3V774.6h-3zM1699.2 770.8h3V778.1h-3zM1700.7 775.1h3V778.9h-3zM1702.2 775.9h3V779.3h-3zM1703.7 774.2h3V779.3h-3zM1705.2 774.2h3V781.3h-3zM1706.7 776.3h3V785.7h-3zM1708.2 782.7h3V792.9h-3zM1709.7 789.9h3V799.7h-3zM1711.2 795.7h3V801.2h-3zM1712.7 798.2h3V802.1h-3zM1714.2 799.1h3V804.5h-3zM1715.7 799.3h3V802.5h-3zM1717.2 798.5h3V802.5h-3zM1718.7 798.3h3V803.3h-3zM1720.2 800.3h3V804.1h-3zM1721.7 801.1h3V809.4h-3zM1723.2 806.4h3V812.1h-3zM1724.7 809.1h3V813.5h-3zM1726.2 810.5h3V818.4h-3zM1727.7 813.9h3V822.1h-3zM1729.2 808.8h3V816.9h-3zM1730.7 804.9h3V811.8h-3zM1732.2 803.9h3V807.9h-3zM1733.7 803.9h3V807.4h-3zM1735.2 804.4h3V809.9h-3zM1736.7 806.9h3V814.6h-3zM1738.2 809.8h3V814.6h-3zM1739.7 803.7h3V812.8h-3zM1741.2 798.3h3V806.7h-3zM1742.7 792.6h3V801.3h-3zM1744.2 787.1h3V795.6h-3zM1745.7 782.8h3V790.1h-3zM1747.2 779.5h3V793.5h-3zM1748.7 790.5h3V806.8h-3zM1750.2 800.9h3V806.2h-3zM1751.7 803.2h3V806.9h-3zM1753.2 803.9h3V810.9h-3zM1754.7 801.8h3V810.1h-3zM1756.2 797.9h3V804.8h-3zM1757.7 796.7h3V800.9h-3zM1759.2 790.5h3V799.7h-3zM1760.7 792.3h3V799.2h-3zM1762.2 796.2h3V803.3h-3zM1763.7 779.7h3V806.8h-3zM1765.2 771.5h3V782.7h-3zM1766.7 771.5h3V778.3h-3zM1768.2 775.3h3V779.7h-3zM1769.7 772.1h3V783.2h-3zM1771.2 767.6h3V775.1h-3zM1772.7 766.5h3V772.1h-3zM1774.2 766.5h3V777.7h-3zM1775.7 774.7h3V783.9h-3zM1777.2 780.2h3V787.3h-3zM1778.7 784.3h3V792.5h-3zM1780.2 789.5h3V797.5h-3zM1781.7 794.5h3V799.8h-3zM1783.2 796.8h3V800.6h-3zM1784.7 797.6h3V801.9h-3zM1786.2 795.7h3V801.9h-3zM1787.7 787.5h3V798.7h-3zM1789.2 776.9h3V790.5h-3zM1790.7 768.7h3V779.9h-3zM1792.2 760.4h3V771.7h-3zM1793.7 755.2h3V763.4h-3zM1795.2 759.4h3V766.0h-3zM1796.7 763.0h3V769.3h-3zM1798.2 766.1h3V775.2h-3zM1799.7 772.2h3V779.9h-3zM1801.2 776.9h3V789.4h-3zM1802.7 785.9h3V789.5h-3zM1804.2 784.3h3V789.5h-3zM1805.7 783.8h3V788.7h-3zM1807.2 780.6h3V786.8h-3zM1808.7 774.1h3V783.6h-3zM1810.2 774.1h3V779.6h-3zM1811.7 776.4h3V779.6h-3zM1813.2 776.4h3V780.8h-3zM1814.7 773.5h3V780.8h-3zM1816.2 771.8h3V778.3h-3zM1817.7 775.3h3V784.4h-3zM1819.2 780.8h3V785.9h-3zM1820.7 773.2h3V783.8h-3zM1822.2 765.6h3V776.2h-3zM1823.7 769.1h3V777.9h-3zM1825.2 774.9h3V785.2h-3zM1826.7 782.2h3V788.7h-3zM1828.2 783.6h3V788.7h-3zM1829.7 785.7h3V790.6h-3zM1831.2 787.6h3V795.0h-3zM1832.7 786.6h3V793.0h-3zM1834.2 782.4h3V789.6h-3zM1835.7 777.1h3V785.4h-3zM1837.2 775.0h3V780.1h-3zM1838.7 775.0h3V781.0h-3zM1840.2 778.0h3V783.1h-3zM1841.7 780.1h3V783.7h-3zM1843.2 780.7h3V783.9h-3zM1844.7 780.9h3V785.2h-3zM1846.2 778.9h3V785.2h-3zM1847.7 778.1h3V781.9h-3zM1849.2 775.3h3V781.1h-3zM1850.7 776.6h3V781.0h-3zM1852.2 776.6h3V780.4h-3zM1853.7 775.0h3V780.4h-3zM1855.2 775.0h3V779.6h-3zM1856.7 768.5h3V779.6h-3zM1858.2 757.1h3V771.5h-3zM1859.7 757.1h3V760.7h-3zM1861.2 755.4h3V760.7h-3zM1862.7 755.4h3V759.8h-3zM1864.2 755.2h3V759.8h-3zM1865.7 755.7h3V760.7h-3zM1867.2 757.7h3V763.4h-3zM1868.7 760.4h3V765.1h-3zM1870.2 761.6h3V764.8h-3zM1871.7 758.3h3V764.8h-3zM1873.2 751.0h3V761.3h-3zM1874.7 742.2h3V754.0h-3zM1876.2 739.5h3V745.2h-3zM1877.7 732.8h3V742.5h-3zM1879.2 732.8h3V736.3h-3zM1880.7 731.2h3V736.3h-3zM1882.2 726.2h3V734.2h-3zM1883.7 726.2h3V732.1h-3zM1885.2 729.1h3V735.7h-3zM1886.7 732.7h3V737.3h-3zM1888.2 725.5h3V735.8h-3zM1889.7 722.5h3V728.8h-3zM1891.2 725.8h3V733.5h-3zM1892.7 730.5h3V741.1h-3zM1894.2 738.1h3V741.9h-3zM1895.7 738.9h3V744.6h-3zM1897.2 729.2h3V744.6h-3zM1898.7 711.2h3V732.2h-3z" fill="#ff0000"/>
<path d="M1896.5 102.8 L1903 106.4 L1896.5 110 Z" fill="#f4f088"/>
<rect x="1896.5" y="509.5" width="3" height="2.2" fill="#f4f088"/>
<text x="12.0" y="93.9" font-size="17.5" textLength="37.1" lengthAdjust="spacingAndGlyphs" fill="#d4d4d4" font-family="Liberation Sans">時刻</text>
<text x="50.6" y="92.9" font-size="20.5" textLength="56.4" lengthAdjust="spacingAndGlyphs" fill="#d4d4d4" font-family="Liberation Mono">:06:00</text>
<text x="118.2" y="93.9" font-size="17.5" textLength="37.1" lengthAdjust="spacingAndGlyphs" fill="#d4d4d4" font-family="Liberation Sans">始値</text>
<text x="156.8" y="92.9" font-size="20.5" textLength="66.0" lengthAdjust="spacingAndGlyphs" fill="#d4d4d4" font-family="Liberation Mono">:11,800</text>
<text x="233.9" y="93.9" font-size="17.5" textLength="37.1" lengthAdjust="spacingAndGlyphs" fill="#d4d4d4" font-family="Liberation Sans">高値</text>
<text x="272.6" y="92.9" font-size="20.5" textLength="66.0" lengthAdjust="spacingAndGlyphs" fill="#d4d4d4" font-family="Liberation Mono">:11,800</text>
<text x="349.8" y="93.9" font-size="17.5" textLength="37.1" lengthAdjust="spacingAndGlyphs" fill="#d4d4d4" font-family="Liberation Sans">安値</text>
<text x="388.4" y="92.9" font-size="20.5" textLength="66.0" lengthAdjust="spacingAndGlyphs" fill="#d4d4d4" font-family="Liberation Mono">:11,800</text>
<text x="465.6" y="93.9" font-size="17.5" textLength="37.1" lengthAdjust="spacingAndGlyphs" fill="#d4d4d4" font-family="Liberation Sans">終値</text>
<text x="504.2" y="92.9" font-size="20.5" textLength="66.0" lengthAdjust="spacingAndGlyphs" fill="#d4d4d4" font-family="Liberation Mono">:11,800</text>
<text x="12.0" y="422.0" font-size="17.5" textLength="37.1" lengthAdjust="spacingAndGlyphs" fill="#d4d4d4" font-family="Liberation Sans">時刻</text>
<text x="50.6" y="421.0" font-size="20.5" textLength="56.4" lengthAdjust="spacingAndGlyphs" fill="#d4d4d4" font-family="Liberation Mono">:06:00</text>
<text x="118.2" y="422.0" font-size="17.5" textLength="37.1" lengthAdjust="spacingAndGlyphs" fill="#d4d4d4" font-family="Liberation Sans">始値</text>
<text x="156.8" y="421.0" font-size="20.5" textLength="56.4" lengthAdjust="spacingAndGlyphs" fill="#d4d4d4" font-family="Liberation Mono">:4,481</text>
<text x="224.3" y="422.0" font-size="17.5" textLength="37.1" lengthAdjust="spacingAndGlyphs" fill="#d4d4d4" font-family="Liberation Sans">高値</text>
<text x="262.9" y="421.0" font-size="20.5" textLength="56.4" lengthAdjust="spacingAndGlyphs" fill="#d4d4d4" font-family="Liberation Mono">:4,481</text>
<text x="330.5" y="422.0" font-size="17.5" textLength="37.1" lengthAdjust="spacingAndGlyphs" fill="#d4d4d4" font-family="Liberation Sans">安値</text>
<text x="369.1" y="421.0" font-size="20.5" textLength="56.4" lengthAdjust="spacingAndGlyphs" fill="#d4d4d4" font-family="Liberation Mono">:4,481</text>
<text x="436.6" y="422.0" font-size="17.5" textLength="37.1" lengthAdjust="spacingAndGlyphs" fill="#d4d4d4" font-family="Liberation Sans">終値</text>
<text x="475.2" y="421.0" font-size="20.5" textLength="56.4" lengthAdjust="spacingAndGlyphs" fill="#d4d4d4" font-family="Liberation Mono">:4,481</text>
<text x="12.0" y="699.0" font-size="20.5" textLength="8.2" lengthAdjust="spacingAndGlyphs" fill="#d4d4d4" font-family="Liberation Mono">[</text>
<text x="21.6" y="700.0" font-size="17.5" textLength="17.8" lengthAdjust="spacingAndGlyphs" fill="#d4d4d4" font-family="Liberation Sans">金</text>
<text x="50.6" y="699.0" font-size="20.5" textLength="114.3" lengthAdjust="spacingAndGlyphs" fill="#d4d4d4" font-family="Liberation Mono">25/08 11,800</text>
<text x="166.4" y="700.0" font-size="17.5" textLength="17.8" lengthAdjust="spacingAndGlyphs" fill="#d4d4d4" font-family="Liberation Sans">×</text>
<text x="185.7" y="699.0" font-size="20.5" textLength="46.8" lengthAdjust="spacingAndGlyphs" fill="#d4d4d4" font-family="Liberation Mono">1.00]</text>
<text x="253.3" y="699.0" font-size="20.5" textLength="8.2" lengthAdjust="spacingAndGlyphs" fill="#d4d4d4" font-family="Liberation Mono">[</text>
<text x="262.9" y="700.0" font-size="17.5" textLength="37.1" lengthAdjust="spacingAndGlyphs" fill="#d4d4d4" font-family="Liberation Sans">白金</text>
<text x="311.2" y="699.0" font-size="20.5" textLength="104.7" lengthAdjust="spacingAndGlyphs" fill="#d4d4d4" font-family="Liberation Mono">25/08 4,481</text>
<text x="417.3" y="700.0" font-size="17.5" textLength="17.8" lengthAdjust="spacingAndGlyphs" fill="#d4d4d4" font-family="Liberation Sans">×</text>
<text x="436.6" y="699.0" font-size="20.5" textLength="46.8" lengthAdjust="spacingAndGlyphs" fill="#d4d4d4" font-family="Liberation Mono">1.00]</text>
<text x="494.5" y="700.0" font-size="17.5" textLength="37.1" lengthAdjust="spacingAndGlyphs" fill="#d4d4d4" font-family="Liberation Sans">終値</text>
<text x="542.8" y="700.0" font-size="17.5" textLength="37.1" lengthAdjust="spacingAndGlyphs" fill="#d4d4d4" font-family="Liberation Sans">時刻</text>
<text x="581.4" y="699.0" font-size="20.5" textLength="114.3" lengthAdjust="spacingAndGlyphs" fill="#d4d4d4" font-family="Liberation Mono">:06:00 7,319</text>
<rect x="237" y="690.4" width="12" height="1.7" fill="#d4d4d4"/>
</svg>
<svg width="2011" height="75" style="position:absolute;left:0;top:0">
<g>
<rect x="16.5" y="9.5" width="20.5" height="20.5" fill="#fbfbfb"/>
<g stroke="#d8d8d8" stroke-width="1">
<line x1="17" y1="12" x2="37" y2="12"/><line x1="17" y1="15" x2="37" y2="15"/><line x1="17" y1="18" x2="37" y2="18"/><line x1="17" y1="21" x2="37" y2="21"/><line x1="17" y1="24" x2="37" y2="24"/><line x1="17" y1="27" x2="37" y2="27"/>
</g>
<path d="M16.3 9 V30 H37.5" fill="none" stroke="#686868" stroke-width="1.8"/>
<path d="M20 28 L20 19 L23 21 L23 27 Z" fill="#ff0000"/>
<rect x="23.3" y="11.5" width="2.8" height="15" fill="#0a80f0"/>
<rect x="26.5" y="10" width="2.8" height="11" fill="#ff0000"/>
<rect x="29.5" y="13" width="2.6" height="10" fill="#0a80f0"/>
<path d="M32.3 12 L34 12 L34 16 L36 18 L36 21 L34 23 L34 24 L32.3 24 Z" fill="#ff0000"/>
</g>
<text x="47" y="26" font-family="Liberation Sans" font-size="18" textLength="17" lengthAdjust="spacingAndGlyphs" fill="#000" stroke="#000" stroke-width="0.45">金</text>
<text x="66.3" y="26" font-family="Liberation Sans" font-size="18" textLength="7.5" lengthAdjust="spacingAndGlyphs" fill="#000">1</text>
<text x="73.8" y="26" font-family="Liberation Sans" font-size="18" textLength="37" lengthAdjust="spacingAndGlyphs" fill="#000" stroke="#000" stroke-width="0.45">分足</text>
<text x="111.8" y="26" font-family="Liberation Sans" font-size="18.5" textLength="109" lengthAdjust="spacingAndGlyphs" fill="#000">[2025/08]1.00</text>
<rect x="227.5" y="18.2" width="8" height="1.8" fill="#000"/>
<text x="244.8" y="26" font-family="Liberation Sans" font-size="18" textLength="34.3" lengthAdjust="spacingAndGlyphs" fill="#000" stroke="#000" stroke-width="0.45">白金</text>
<text x="282.2" y="26" font-family="Liberation Sans" font-size="18" textLength="7.5" lengthAdjust="spacingAndGlyphs" fill="#000">1</text>
<text x="291.3" y="26" font-family="Liberation Sans" font-size="18" textLength="35.3" lengthAdjust="spacingAndGlyphs" fill="#000" stroke="#000" stroke-width="0.45">分足</text>
<text x="328" y="26" font-family="Liberation Sans" font-size="18.5" textLength="108.2" lengthAdjust="spacingAndGlyphs" fill="#000">[2025/08]1.00</text>
<defs><linearGradient id="btn" x1="0" y1="0" x2="0" y2="1"><stop offset="0" stop-color="#ffffff"/><stop offset="0.5" stop-color="#ececec"/><stop offset="1" stop-color="#cfcfcf"/></linearGradient></defs>
<rect x="1911.3" y="6.3" width="26.6" height="26.6" rx="4.5" fill="url(#btn)" stroke="#9a9a9a" stroke-width="1.3"/>
<rect x="1942.3" y="6.3" width="26.6" height="26.6" rx="4.5" fill="url(#btn)" stroke="#9a9a9a" stroke-width="1.3"/>
<rect x="1973.4" y="6.3" width="26.6" height="26.6" rx="4.5" fill="url(#btn)" stroke="#9a9a9a" stroke-width="1.3"/>
<rect x="1918.2" y="23" width="9.3" height="2.6" fill="#555"/>
<rect x="1950.5" y="14.5" width="10.5" height="10.5" fill="#f4f4f4" stroke="#555" stroke-width="1.5"/><rect x="1949.8" y="13.8" width="12" height="2.6" fill="#555"/>
<path d="M1981.8 14.3 L1992.8 25.2 M1992.8 14.3 L1981.8 25.2" stroke="#555" stroke-width="2.2"/>
<g>
<rect x="1876.8" y="9.8" width="15.5" height="20" fill="#f4f4f4" stroke="#6a6a6a" stroke-width="1.2"/>
<rect x="1877" y="9.3" width="15.5" height="1.8" fill="#6a6a6a"/>
<rect x="1883" y="14.5" width="14" height="11" fill="#e8e8e8" stroke="#555" stroke-width="1.6"/>
<g stroke="#9a9a9a" stroke-width="0.8"><line x1="1884" y1="18.3" x2="1896" y2="18.3"/><line x1="1884" y1="21.6" x2="1896" y2="21.6"/><line x1="1887.5" y1="16" x2="1887.5" y2="25"/><line x1="1891" y1="16" x2="1891" y2="25"/></g>
</g>
<text x="18" y="61.8" font-family="Liberation Sans" font-size="18" textLength="17" lengthAdjust="spacingAndGlyphs" fill="#1a1a1a" stroke="#1a1a1a" stroke-width="0.45">金</text>
<text x="53.8" y="62.3" font-family="Liberation Sans" font-size="18.8" textLength="63.2" lengthAdjust="spacingAndGlyphs" fill="#1a1a1a">2025/08</text>
<rect x="127.3" y="40.8" width="76.50000000000001" height="28" fill="#fff" stroke="#a8acb4" stroke-width="1.5"/>
<text x="132.3" y="59" font-family="Liberation Sans" font-size="19" textLength="27.5" lengthAdjust="spacingAndGlyphs" fill="#000">1.00</text>
<g>
<rect x="179.8" y="43.8" width="20" height="20.5" fill="#f0f0f0" stroke="#b4b4b4" stroke-width="1.5"/>
<line x1="179.3" y1="54.099999999999994" x2="200.3" y2="54.099999999999994" stroke="#b4b4b4" stroke-width="1.5"/>
<path d="M185.3 51.3 L189.60000000000002 46.3 L193.8 51.3 Z" fill="#000"/>
<path d="M185.3 57.3 L189.60000000000002 62.3 L193.8 57.3 Z" fill="#000"/>
</g>
<rect x="209.8" y="46.5" width="1.2" height="20" fill="#b8bcc4"/><rect x="211" y="46.5" width="2" height="20" fill="#fafafa"/>
<text x="223.3" y="61.8" font-family="Liberation Sans" font-size="18" textLength="35" lengthAdjust="spacingAndGlyphs" fill="#1a1a1a" stroke="#1a1a1a" stroke-width="0.45">白金</text>
<text x="277" y="62.3" font-family="Liberation Sans" font-size="18.8" textLength="63.3" lengthAdjust="spacingAndGlyphs" fill="#1a1a1a">2025/08</text>
<rect x="350.3" y="40.8" width="76.19999999999999" height="28" fill="#fff" stroke="#a8acb4" stroke-width="1.5"/>
<text x="355.3" y="59" font-family="Liberation Sans" font-size="19" textLength="27.5" lengthAdjust="spacingAndGlyphs" fill="#000">1.00</text>
<g>
<rect x="402.5" y="43.8" width="20" height="20.5" fill="#f0f0f0" stroke="#b4b4b4" stroke-width="1.5"/>
<line x1="402.0" y1="54.099999999999994" x2="423.0" y2="54.099999999999994" stroke="#b4b4b4" stroke-width="1.5"/>
<path d="M408.0 51.3 L412.3 46.3 L416.5 51.3 Z" fill="#000"/>
<path d="M408.0 57.3 L412.3 62.3 L416.5 57.3 Z" fill="#000"/>
</g>
<rect x="432.8" y="46.5" width="1.2" height="20" fill="#b8bcc4"/><rect x="434" y="46.5" width="2" height="20" fill="#fafafa"/>
<text x="445.5" y="61.8" font-family="Liberation Sans" font-size="18" textLength="36.2" lengthAdjust="spacingAndGlyphs" fill="#1a1a1a" stroke="#1a1a1a" stroke-width="0.45">分足</text>
<path d="M491.8 51.8 L500.3 51.8 L496.05 57.3 Z" fill="#000"/>
<rect x="507" y="40.8" width="71" height="28" fill="#fff" stroke="#a8acb4" stroke-width="1.5"/>
<text x="512" y="59" font-family="Liberation Sans" font-size="19" textLength="33" lengthAdjust="spacingAndGlyphs" fill="#000">1200</text>
<g>
<rect x="554.0" y="43.8" width="20" height="20.5" fill="#f0f0f0" stroke="#b4b4b4" stroke-width="1.5"/>
<line x1="553.5" y1="54.099999999999994" x2="574.5" y2="54.099999999999994" stroke="#b4b4b4" stroke-width="1.5"/>
<path d="M559.5 51.3 L563.8 46.3 L568.0 51.3 Z" fill="#000"/>
<path d="M559.5 57.3 L563.8 62.3 L568.0 57.3 Z" fill="#000"/>
</g>
<text x="586" y="63" font-family="Liberation Sans" font-size="18.5" textLength="9.5" lengthAdjust="spacingAndGlyphs" fill="#1a1a1a">1</text>
<text x="596" y="61.8" font-family="Liberation Sans" font-size="18" textLength="37" lengthAdjust="spacingAndGlyphs" fill="#1a1a1a" stroke="#1a1a1a" stroke-width="0.45">分足</text>
<path d="M643.3 51.8 L651.8 51.8 L647.55 57.3 Z" fill="#000"/>
<rect x="663.4" y="46.5" width="1.2" height="20" fill="#b8bcc4"/><rect x="664.6" y="46.5" width="2" height="20" fill="#fafafa"/>
<g>
<rect x="668.5" y="40" width="27.5" height="27.8" fill="#b4b8bc"/>
<path d="M669.3 67.8 V40.8 H696" fill="none" stroke="#6e6e6e" stroke-width="1.8"/>
<path d="M696 40.5 V67.2 H668.5" fill="none" stroke="#ffffff" stroke-width="1.6"/>
<rect x="672.3" y="44.2" width="21.5" height="22" fill="#fafaf4" stroke="#7a7a7a" stroke-width="1.2"/>
<g stroke="#d6d6d0" stroke-width="0.9"><line x1="673" y1="47" x2="693" y2="47"/><line x1="673" y1="53.5" x2="693" y2="53.5"/><line x1="673" y1="56.5" x2="693" y2="56.5"/><line x1="673" y1="59.5" x2="693" y2="59.5"/><line x1="673" y1="62.5" x2="693" y2="62.5"/></g>
<line x1="677" y1="44.5" x2="677" y2="66" stroke="#4040b0" stroke-width="1.6"/>
<line x1="673" y1="50.2" x2="693.5" y2="50.2" stroke="#4040b0" stroke-width="1.6"/>
<path d="M681 54 L688.5 54 L686 56.4 L690.5 61 L688.6 62.8 L684 58.4 L681.2 61 Z" fill="#8a1ab0"/>
</g>
<rect x="708.5" y="46.5" width="1.2" height="20" fill="#b8bcc4"/><rect x="709.7" y="46.5" width="2" height="20" fill="#fafafa"/>
<g>
<rect x="713.7" y="40" width="27.3" height="27.8" fill="#b4b8bc"/>
<path d="M714.5 67.8 V40.8 H741" fill="none" stroke="#6e6e6e" stroke-width="1.8"/>
<path d="M741.3 40.5 V67.2 H713.7" fill="none" stroke="#ffffff" stroke-width="1.6"/>
<path d="M719.5 46.5 L733 51 L729.5 53.5 L734.5 59.8 L732 62.3 L727 56.2 L724 59.5 Z" fill="#f4f0ff" stroke="#6a4ac8" stroke-width="1.6" stroke-linejoin="round"/>
</g>
<g fill="#fff3d8" stroke="#dc8a1a" stroke-width="1.5" stroke-linejoin="round">
<path d="M756 64.5 L754 58 L751.8 54.5 C751 53 752.5 51.5 754 52.8 L756.3 55 L755.5 47.5 C755.3 45.5 757.8 45.3 758.2 47.2 L759.5 52.5 L759.6 45 C759.7 43 762.3 43 762.4 45 L763 52 L764.2 46 C764.6 44.3 767 44.6 766.8 46.5 L766.5 52.5 L768.3 48.8 C769 47.4 771.2 48 770.8 49.8 L769.6 57 L768.5 64.5 Z"/>
</g>
<g>
<path d="M788 64.5 L789.5 58.5 L804.5 43.8 C806 42.4 808.6 42.7 809.2 44.2 C809.8 45.8 809.2 47.2 808.2 48.2 L793.3 62.8 Z" fill="#f5b048" stroke="#d88a18" stroke-width="1.3" stroke-linejoin="round"/>
<path d="M791.5 59.5 L805.5 45.5" stroke="#fff4dc" stroke-width="2.2"/>
<path d="M788 64.5 L789.3 60.3 L791.8 62.8 Z" fill="#8a5a18"/>
</g>
<g>
<path d="M823.5 64.5 L825.3 58.5 L840.5 43.8 C842 42.4 844.6 42.7 845.2 44.2 C845.8 45.8 845.2 47.2 844.2 48.2 L829 62.8 Z" fill="#5a9af0" stroke="#2a62d0" stroke-width="1.3" stroke-linejoin="round"/>
<path d="M827.5 59.5 L841.5 45.5" stroke="#e0ecff" stroke-width="2.2"/>
<path d="M839.5 54.3 L845 59.5 L839.5 64.8 L834.2 59.5 Z" fill="#0c2a6a"/>
<g fill="#8ab0e8"><rect x="837.4" y="57.6" width="1.3" height="1.3"/><rect x="840.3" y="57.6" width="1.3" height="1.3"/><rect x="837.4" y="60.5" width="1.3" height="1.3"/><rect x="840.3" y="60.5" width="1.3" height="1.3"/></g>
</g>
<rect x="861.5" y="46.5" width="1.2" height="20" fill="#b8bcc4"/><rect x="862.7" y="46.5" width="2" height="20" fill="#fafafa"/>
<g>
<rect x="871" y="44.5" width="20.5" height="20" fill="#fafaf4"/>
<g stroke="#dcdcd0" stroke-width="0.9"><line x1="871" y1="47" x2="891" y2="47"/><line x1="871" y1="50" x2="891" y2="50"/><line x1="871" y1="53" x2="891" y2="53"/><line x1="871" y1="56" x2="891" y2="56"/><line x1="871" y1="59" x2="891" y2="59"/><line x1="871" y1="62" x2="891" y2="62"/></g>
<path d="M870.6 44 V64.6 H891.5" fill="none" stroke="#7a7a7a" stroke-width="1.2"/>
<g fill="#0a7af0"><rect x="873" y="55" width="2.6" height="9"/><rect x="877.7" y="46" width="2.8" height="18"/><rect x="882.5" y="49.3" width="2.8" height="14.7"/><rect x="887.3" y="55.8" width="2.6" height="8.2"/></g>
</g>
<path d="M896.3 52 L904.8 52 L900.55 57.5 Z" fill="#000"/>
<g>
<rect x="914.8" y="44.5" width="20.5" height="20" fill="#fafaf4"/>
<g stroke="#dcdcd0" stroke-width="0.9"><line x1="915" y1="47" x2="935" y2="47"/><line x1="915" y1="50" x2="935" y2="50"/><line x1="915" y1="53" x2="935" y2="53"/><line x1="915" y1="56" x2="935" y2="56"/><line x1="915" y1="59" x2="935" y2="59"/><line x1="915" y1="62" x2="935" y2="62"/></g>
<path d="M914.5 44 V64.6 H935.3" fill="none" stroke="#7a7a7a" stroke-width="1.2"/>
<g fill="#0a7af0"><rect x="917" y="54.5" width="2.6" height="9.5"/><rect x="922" y="45.5" width="2.8" height="18.5"/><rect x="926.5" y="48.3" width="2.8" height="15.7"/><rect x="931" y="55.5" width="2.6" height="8.5"/></g>
<path d="M918 47.5 L932 61 M932 47.5 L918 61" stroke="#ff2828" stroke-width="2.2" stroke-linecap="round"/>
</g>
<rect x="952.1999999999999" y="46.5" width="1.2" height="20" fill="#b8bcc4"/><rect x="953.4" y="46.5" width="2" height="20" fill="#fafafa"/>
<g>
<path d="M966.5 46.5 A9 9 0 1 0 977.5 61" fill="none" stroke="#1a8ae8" stroke-width="3.2"/>
<path d="M961.5 43.2 L969.8 43 L969.8 51 Z" fill="#0a50f0" transform="rotate(8 966 47)"/>
<text x="971.2" y="58.2" font-family="Liberation Sans" font-weight="bold" font-size="12" fill="#0a62d8" textLength="8" lengthAdjust="spacingAndGlyphs">R</text>
</g>
<g>
<path d="M1966.5 63.5 L1977 53" stroke="#3a3ae8" stroke-width="4.2" stroke-linecap="round"/>
<path d="M1966.5 63.5 L1977 53" stroke="#9aa0ff" stroke-width="1.3" stroke-linecap="round"/>
<path d="M1975.5 54.5 C1972.8 50.8 1975.5 45 1980.5 44.8 L1978.3 48.6 L1980.6 51.2 L1984.7 49.2 C1985 53.8 1980 57.2 1975.5 54.5 Z" fill="#5a5af8" stroke="#3a3ae0" stroke-width="1"/>
</g>
</svg>
</body></html>
